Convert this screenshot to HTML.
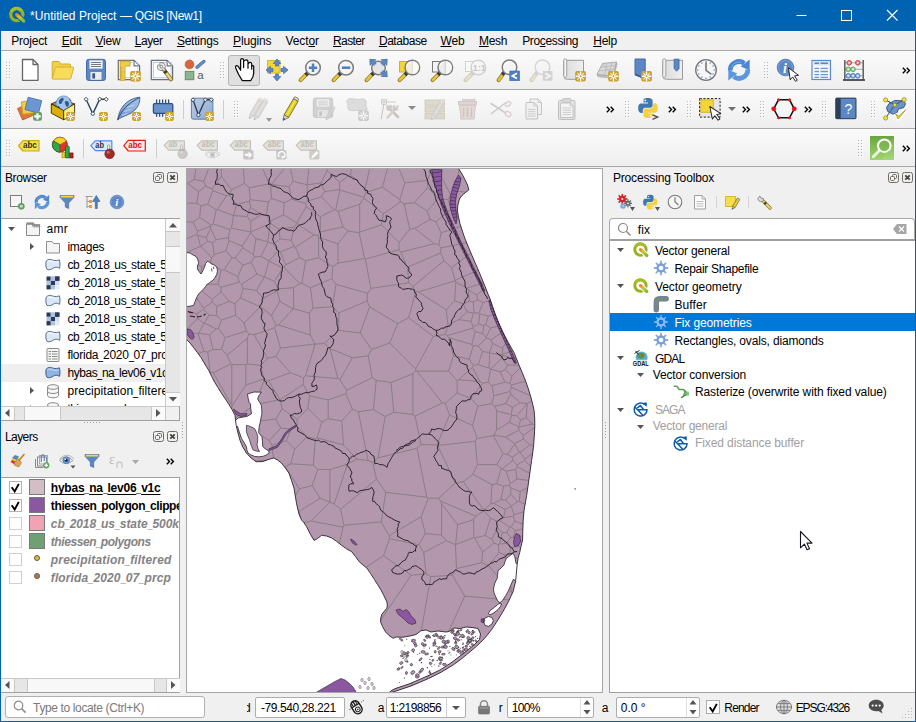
<!DOCTYPE html>
<html lang="en"><head><meta charset="utf-8"><title>QGIS</title>
<style>
*{box-sizing:border-box;margin:0;padding:0}
html,body{width:916px;height:722px;overflow:hidden;background:#f0f0f0}
body{font-family:"Liberation Sans","DejaVu Sans",sans-serif;font-size:12px;color:#000;position:relative}
.a{position:absolute}
.t{position:absolute;white-space:nowrap;line-height:16px;height:16px}
.tb{position:absolute;left:1px;width:914px;background:linear-gradient(#fafafa,#f6f6f6 40%,#eeeeee)}
.ln{position:absolute;left:1px;width:914px;height:1px;background:#a8a8a8}
.hd{position:absolute;width:5px;height:17px}
.ic{position:absolute;width:24px;height:24px}
.ic svg,.i16 svg{display:block;overflow:visible}
.i16{position:absolute;width:16px;height:16px}
.box{position:absolute;background:#fff;border:1px solid #adadad;border-radius:2px}
.chev{position:absolute;font-weight:bold;font-size:13px;line-height:16px;height:16px;letter-spacing:-1.5px}
.us{display:inline-block;transform:scaleX(.75);transform-origin:0 50%;margin-right:-1.67px}
u{text-decoration:underline;text-underline-offset:1px}
</style></head>
<body>
<div class="a" style="left:0;top:0;width:916px;height:722px;background:#0063b1"></div>
<div class="a" style="left:1px;top:31px;width:914px;height:690px;background:#f0f0f0"></div>
<div class="i16" style="left:9px;top:7px;"><svg width="16" height="16" viewBox="0 0 16 16"><defs><linearGradient id="qg0063b1" x1="0" y1="0" x2="1" y2="1"><stop offset="0" stop-color="#f57f1c"/><stop offset=".28" stop-color="#f0b02a"/><stop offset=".5" stop-color="#b9c83c"/><stop offset="1" stop-color="#86b440"/></linearGradient></defs><circle cx="7.800" cy="7.600" r="6.100" fill="none" stroke="#97b320" stroke-width="3.200"/><path d="M2.400 4.600A6.100 6.100 0 0 1 12.600 3.800" fill="none" stroke="#a6bf27" stroke-width="3.200"/><path d="M9.500 9.300L16 15.200" stroke="#0063b1" stroke-width="5.400"/><path d="M7.800 7.700L14.700 14" stroke="url(#qg0063b1)" stroke-width="3.400" stroke-linecap="round"/></svg></div>
<span class="t" style="left:30.10px;top:8.00px;letter-spacing:0.009px;color:#fff">*Untitled Project</span>
<span class="t" style="left:120.00px;top:8.00px;letter-spacing:-0.333px;color:#fff">— QGIS [New1]</span>
<svg class="a" style="left:781px;top:0" width="135" height="31"><g stroke="#fff" stroke-width="1" fill="none"><path d="M15.5 15.5h10"/><rect x="60.5" y="10.5" width="10" height="10"/><path d="M106 10l10.5 10.5M116.5 10l-10.5 10.5" stroke-width="1.1"/></g></svg>
<div class="a" style="left:1px;top:31px;width:914px;height:19px;background:#f0f0f0;border-top:1px solid #fbfbfb"></div>
<span class="t" style="left:11.20px;top:33.00px;letter-spacing:-0.194px;">Pro<u>j</u>ect</span>
<span class="t" style="left:61.70px;top:33.00px;letter-spacing:-0.172px;"><u>E</u>dit</span>
<span class="t" style="left:95.50px;top:33.00px;letter-spacing:-0.224px;"><u>V</u>iew</span>
<span class="t" style="left:134.70px;top:33.00px;letter-spacing:-0.446px;"><u>L</u>ayer</span>
<span class="t" style="left:176.90px;top:33.00px;letter-spacing:-0.232px;"><u>S</u>ettings</span>
<span class="t" style="left:233.10px;top:33.00px;letter-spacing:-0.166px;"><u>P</u>lugins</span>
<span class="t" style="left:285.40px;top:33.00px;letter-spacing:-0.089px;">Vect<u>o</u>r</span>
<span class="t" style="left:333.10px;top:33.00px;letter-spacing:-0.657px;"><u>R</u>aster</span>
<span class="t" style="left:378.90px;top:33.00px;letter-spacing:-0.447px;"><u>D</u>atabase</span>
<span class="t" style="left:440.50px;top:33.00px;letter-spacing:-0.123px;"><u>W</u>eb</span>
<span class="t" style="left:479.00px;top:33.00px;letter-spacing:-0.311px;"><u>M</u>esh</span>
<span class="t" style="left:522.20px;top:33.00px;letter-spacing:-0.348px;">Pro<u>c</u>essing</span>
<span class="t" style="left:593.20px;top:33.00px;letter-spacing:-0.222px;"><u>H</u>elp</span>
<div class="tb" style="top:51px;height:38px"></div>
<div class="tb" style="top:90px;height:38px"></div>
<div class="tb" style="top:129px;height:37px"></div>
<div class="ln" style="top:50px"></div>
<div class="ln" style="top:89px"></div>
<div class="ln" style="top:128px"></div>
<div class="ln" style="top:166px"></div>
<svg class="a" style="left:6px;top:62px" width="6" height="18"><rect x="0" y="0" width="1" height="1" fill="#b4b4b4"/><rect x="1" y="1" width="1" height="1" fill="#fff"/><rect x="0" y="3" width="1" height="1" fill="#b4b4b4"/><rect x="1" y="4" width="1" height="1" fill="#fff"/><rect x="0" y="6" width="1" height="1" fill="#b4b4b4"/><rect x="1" y="7" width="1" height="1" fill="#fff"/><rect x="0" y="9" width="1" height="1" fill="#b4b4b4"/><rect x="1" y="10" width="1" height="1" fill="#fff"/><rect x="0" y="12" width="1" height="1" fill="#b4b4b4"/><rect x="1" y="13" width="1" height="1" fill="#fff"/><rect x="0" y="15" width="1" height="1" fill="#b4b4b4"/><rect x="1" y="16" width="1" height="1" fill="#fff"/><rect x="3" y="0" width="1" height="1" fill="#b4b4b4"/><rect x="4" y="1" width="1" height="1" fill="#fff"/><rect x="3" y="3" width="1" height="1" fill="#b4b4b4"/><rect x="4" y="4" width="1" height="1" fill="#fff"/><rect x="3" y="6" width="1" height="1" fill="#b4b4b4"/><rect x="4" y="7" width="1" height="1" fill="#fff"/><rect x="3" y="9" width="1" height="1" fill="#b4b4b4"/><rect x="4" y="10" width="1" height="1" fill="#fff"/><rect x="3" y="12" width="1" height="1" fill="#b4b4b4"/><rect x="4" y="13" width="1" height="1" fill="#fff"/><rect x="3" y="15" width="1" height="1" fill="#b4b4b4"/><rect x="4" y="16" width="1" height="1" fill="#fff"/></svg>
<div class="ic" style="left:18px;top:58px;"><svg width="24" height="24" viewBox="0 0 24 24"><path d="M4.5 1.5H15L20 6.5V22.3H4.5Z" fill="#fff" stroke="#666" stroke-width="1.3" stroke-linejoin="round"/><path d="M15 1.5v5h5" fill="none" stroke="#666" stroke-width="1.3" stroke-linejoin="round"/></svg></div>
<div class="ic" style="left:51px;top:58px;"><svg width="24" height="24" viewBox="0 0 24 24"><path d="M1.200 20.500V4.300q0-.8.800-.8h5.600q.7 0 1 .6l1 1.900h9q.8 0 .8.800v3.200" fill="#f2cf45" stroke="#d1ad2e" stroke-width="1"/><path d="M1.300 20.700L4.300 9.800q.2-.7 1-.7h16.500q1 0 .8.900L19.800 20.300q-.2.800-1 .8H1.800q-.7 0-.5-.4z" fill="#f8dc5a" stroke="#d4b235" stroke-width="1"/></svg></div>
<div class="ic" style="left:84px;top:58px;"><svg width="24" height="24" viewBox="0 0 24 24"><rect x="2.500" y="1.300" width="19" height="21.200" rx="2.300" fill="#5b87c5" stroke="#456ea8" stroke-width="1"/><rect x="5.500" y="2.500" width="13" height="8" fill="#f4f4f4" stroke="#c8d4e6" stroke-width=".5"/><path d="M7 4.500h10M7 6.500h10M7 8.500h10" stroke="#6a6a6a" stroke-width="0.900"/><rect x="6.500" y="14" width="11" height="7.800" fill="#ececec"/><rect x="8.300" y="15.300" width="2.800" height="5.200" fill="#3d5a86"/></svg></div>
<div class="ic" style="left:117px;top:58px;"><svg width="24" height="24" viewBox="0 0 24 24"><path d="M1.3 2.3H17.1L22.6 7.8V21.7H1.3Z" fill="#fff" stroke="#6e6e6e" stroke-width="1.2" stroke-linejoin="round"/><path d="M17.1 2.3v5.5h5.5" fill="none" stroke="#6e6e6e" stroke-width="1.2" stroke-linejoin="round"/><rect x="3.800" y="4.600" width="17" height="15" fill="none" stroke="#b4c6ef" stroke-width=".8"/><path d="M3.200 3.100h9.800v5h-5v14.100h-4.800z" fill="#f0cd48" stroke="#c9a52c" stroke-width=".9"/><path d="M3.300 10h2.300M3.300 12h1.600M3.300 14h2.300M3.300 16h1.600M3.300 18h2.300M3.300 20h1.600" stroke="#b08d1e" stroke-width=".7"/><rect x="13.2" y="13" width="10.6" height="10.6" rx="1.800" fill="#c9a227"/><path d="M14.26 18.3h8.48M18.5 14.06v8.48" stroke="#fff" stroke-width="1.4" stroke-linecap="round"/><path d="M15.638 15.438l5.724 5.724M21.362 15.438l-5.724 5.724" stroke="#fff" stroke-width="1.1" stroke-linecap="round" opacity=".85"/><circle cx="18.5" cy="18.3" r="1" fill="#c9a227"/></svg></div>
<div class="ic" style="left:150px;top:58px;"><svg width="24" height="24" viewBox="0 0 24 24"><path d="M1.3 2.3H17.1L22.6 7.8V21.7H1.3Z" fill="#fff" stroke="#6e6e6e" stroke-width="1.2" stroke-linejoin="round"/><path d="M17.1 2.3v5.5h5.5" fill="none" stroke="#6e6e6e" stroke-width="1.2" stroke-linejoin="round"/><rect x="3.300" y="4.400" width="17.800" height="15.400" fill="none" stroke="#a9bdf0" stroke-width=".9"/><path d="M13.600 11.300L20.900 21.300" stroke="#86742a" stroke-width="4" stroke-linecap="round"/><path d="M13.700 11.500L20.800 21.100" stroke="#e8d47c" stroke-width="2.500" stroke-linecap="round"/><path d="M14.700 12.900l1.500 2" stroke="#333" stroke-width="3.400"/><path d="M11.070 6.010A2.600 2.600 0 1 1 8.710 8.370" fill="none" stroke="#757575" stroke-width="3.500" stroke-linecap="round"/><path d="M11.070 6.010A2.600 2.600 0 1 1 8.710 8.370" fill="none" stroke="#e6e6e6" stroke-width="2.100" stroke-linecap="round"/><path d="M12.800 10.300l1.400 1.700" stroke="#757575" stroke-width="3.300"/><path d="M12.600 10.100l1.500 1.900" stroke="#dcdcdc" stroke-width="1.900"/></svg></div>
<div class="ic" style="left:183px;top:58px;"><svg width="24" height="24" viewBox="0 0 24 24"><circle cx="6.500" cy="6.400" r="4.400" fill="#d9663a" stroke="#b9532d" stroke-width=".6"/><rect x="2.300" y="13.400" width="8.500" height="8.300" fill="#8db48e" stroke="#5f9161" stroke-width="1"/><path d="M14 9.300L20.900 3.400" stroke="#3d6496" stroke-width="3.200" stroke-linecap="round"/><path d="M14 9.300L20.900 3.400" stroke="#6a94c9" stroke-width="1.800" stroke-linecap="round"/><text x="14.300" y="20.700" style="font-family:'Liberation Sans',sans-serif;font-size:11.500px" fill="#5a5a5a">a</text></svg></div>
<svg class="a" style="left:220px;top:62px" width="6" height="18"><rect x="0" y="0" width="1" height="1" fill="#b4b4b4"/><rect x="1" y="1" width="1" height="1" fill="#fff"/><rect x="0" y="3" width="1" height="1" fill="#b4b4b4"/><rect x="1" y="4" width="1" height="1" fill="#fff"/><rect x="0" y="6" width="1" height="1" fill="#b4b4b4"/><rect x="1" y="7" width="1" height="1" fill="#fff"/><rect x="0" y="9" width="1" height="1" fill="#b4b4b4"/><rect x="1" y="10" width="1" height="1" fill="#fff"/><rect x="0" y="12" width="1" height="1" fill="#b4b4b4"/><rect x="1" y="13" width="1" height="1" fill="#fff"/><rect x="0" y="15" width="1" height="1" fill="#b4b4b4"/><rect x="1" y="16" width="1" height="1" fill="#fff"/><rect x="3" y="0" width="1" height="1" fill="#b4b4b4"/><rect x="4" y="1" width="1" height="1" fill="#fff"/><rect x="3" y="3" width="1" height="1" fill="#b4b4b4"/><rect x="4" y="4" width="1" height="1" fill="#fff"/><rect x="3" y="6" width="1" height="1" fill="#b4b4b4"/><rect x="4" y="7" width="1" height="1" fill="#fff"/><rect x="3" y="9" width="1" height="1" fill="#b4b4b4"/><rect x="4" y="10" width="1" height="1" fill="#fff"/><rect x="3" y="12" width="1" height="1" fill="#b4b4b4"/><rect x="4" y="13" width="1" height="1" fill="#fff"/><rect x="3" y="15" width="1" height="1" fill="#b4b4b4"/><rect x="4" y="16" width="1" height="1" fill="#fff"/></svg>
<div class="a" style="left:228px;top:55px;width:32px;height:31px;background:#dfdfdf;border:1px solid #b4b4b4;border-radius:3px"></div>
<div class="ic" style="left:232px;top:58px;"><svg width="24" height="24" viewBox="0 0 24 24"><path d="M10.300 22.600L6.500 16.300 3.600 9.700Q3.100 8.200 4.500 7.700 5.800 7.500 6.600 8.900L8.600 12.300V2.300Q8.600.600 10.100.600 11.500.600 11.600 2.300V9.600 3.400Q13 1.700 14.600 1.900 16 2.200 16 3.900V10.200 5.700Q17.600 4.100 18.900 4.500 19.700 5 19.700 6.400V11.200 8.300Q21.200 6.900 21.700 8.400V15.200Q21.500 19.200 18.700 22.600Z" fill="#fff" stroke="#0a0a0a" stroke-width="1.250" stroke-linejoin="round"/></svg></div>
<div class="ic" style="left:265px;top:58px;"><svg width="24" height="24" viewBox="0 0 24 24"><rect x="2.500" y="2.500" width="12.500" height="12.500" fill="#f3d53a" stroke="#d6b62c" stroke-width="1"/><path d="M0 -1.5 H2.5 V-3.75 L7 0 L2.5 3.75 V1.5 H0Z" transform="translate(12 8) rotate(-90)" fill="#5b87c5" stroke="#3f6aa5" stroke-width=".7" stroke-linejoin="round"/><path d="M0 -1.5 H2.5 V-3.75 L7 0 L2.5 3.75 V1.5 H0Z" transform="translate(12 16) rotate(90)" fill="#5b87c5" stroke="#3f6aa5" stroke-width=".7" stroke-linejoin="round"/><path d="M0 -1.5 H2.5 V-3.75 L7 0 L2.5 3.75 V1.5 H0Z" transform="translate(8 12) rotate(180)" fill="#5b87c5" stroke="#3f6aa5" stroke-width=".7" stroke-linejoin="round"/><path d="M0 -1.5 H2.5 V-3.75 L7 0 L2.5 3.75 V1.5 H0Z" transform="translate(16 12) rotate(0)" fill="#5b87c5" stroke="#3f6aa5" stroke-width=".7" stroke-linejoin="round"/></svg></div>
<div class="ic" style="left:298px;top:58px;"><svg width="24" height="24" viewBox="0 0 24 24"><g opacity="1"><path d="M9.13 15.57L2.600 22.200" stroke="#8c7420" stroke-width="4" stroke-linecap="round"/><path d="M9.13 15.57L2.800 22" stroke="#e7c43a" stroke-width="2.600" stroke-linecap="round"/><path d="M10.23 14.47l-2.600 2.600" stroke="#3a3a3a" stroke-width="3.600"/><circle cx="15" cy="9.7" r="7.3" fill="#f4f4f4" stroke="#7c7c7c" stroke-width="1.500"/><path d="M9.50 8.70a5.5 5.5 0 0 1 4.50 -4.50" fill="none" stroke="#fff" stroke-width="1.200" opacity=".9"/></g><path d="M10.800 9.700h8.400M15 5.500v8.400" stroke="#4b7fc0" stroke-width="2.500"/></svg></div>
<div class="ic" style="left:331px;top:58px;"><svg width="24" height="24" viewBox="0 0 24 24"><g opacity="1"><path d="M9.13 15.57L2.600 22.200" stroke="#8c7420" stroke-width="4" stroke-linecap="round"/><path d="M9.13 15.57L2.800 22" stroke="#e7c43a" stroke-width="2.600" stroke-linecap="round"/><path d="M10.23 14.47l-2.600 2.600" stroke="#3a3a3a" stroke-width="3.600"/><circle cx="15" cy="9.7" r="7.3" fill="#f4f4f4" stroke="#7c7c7c" stroke-width="1.500"/><path d="M9.50 8.70a5.5 5.5 0 0 1 4.50 -4.50" fill="none" stroke="#fff" stroke-width="1.200" opacity=".9"/></g><path d="M10.800 9.700h8.400" stroke="#4b7fc0" stroke-width="2.500"/></svg></div>
<div class="ic" style="left:364px;top:58px;"><svg width="24" height="24" viewBox="0 0 24 24"><g opacity="1"><path d="M8.98 15.52L2.600 22.200" stroke="#8c7420" stroke-width="4" stroke-linecap="round"/><path d="M8.98 15.52L2.800 22" stroke="#e7c43a" stroke-width="2.600" stroke-linecap="round"/><path d="M10.08 14.42l-2.600 2.600" stroke="#3a3a3a" stroke-width="3.600"/><circle cx="14.5" cy="10" r="6.8" fill="#e9e9e9" stroke="#7c7c7c" stroke-width="1.500"/><path d="M9.50 9.00a5 5 0 0 1 4.00 -4.00" fill="none" stroke="#fff" stroke-width="1.200" opacity=".9"/></g><path d="M0 -1.5 H3.9 V-4 L8.5 0 L3.9 4 V1.5 H0Z" transform="translate(17.2 7.3) rotate(-45)" fill="#5b87c5" stroke="#3f6aa5" stroke-width=".7" stroke-linejoin="round"/><path d="M0 -1.5 H3.9 V-4 L8.5 0 L3.9 4 V1.5 H0Z" transform="translate(17.2 12.7) rotate(45)" fill="#5b87c5" stroke="#3f6aa5" stroke-width=".7" stroke-linejoin="round"/><path d="M0 -1.5 H3.9 V-4 L8.5 0 L3.9 4 V1.5 H0Z" transform="translate(11.8 7.3) rotate(-135)" fill="#5b87c5" stroke="#3f6aa5" stroke-width=".7" stroke-linejoin="round"/><circle cx="14.500" cy="10" r="5" fill="#e4e4e4" opacity=".9"/></svg></div>
<div class="ic" style="left:397px;top:58px;"><svg width="24" height="24" viewBox="0 0 24 24"><rect x="2.500" y="3.500" width="10.500" height="10.500" fill="#f3d53a" stroke="#cfae22" stroke-width="1"/><g opacity="1"><path d="M9.43 15.37L2.600 22.200" stroke="#8c7420" stroke-width="4" stroke-linecap="round"/><path d="M9.43 15.37L2.800 22" stroke="#e7c43a" stroke-width="2.600" stroke-linecap="round"/><path d="M10.53 14.27l-2.600 2.600" stroke="#3a3a3a" stroke-width="3.600"/><circle cx="15.3" cy="9.5" r="7.3" fill="#f2eed8" stroke="#7c7c7c" stroke-width="1.500"/><path d="M9.80 8.50a5.5 5.5 0 0 1 4.50 -4.50" fill="none" stroke="#fff" stroke-width="1.200" opacity=".9"/></g><path d="M15.300 2.900a6.600 6.600 0 0 1 0 13.200z" fill="#fbfbfb" opacity=".9"/><path d="M15.300 3v13" stroke="#c9c9c9" stroke-width=".6"/></svg></div>
<div class="ic" style="left:430px;top:58px;"><svg width="24" height="24" viewBox="0 0 24 24"><rect x="2.500" y="3.500" width="10.500" height="10.500" fill="#f4f4f4" stroke="#7a7a7a" stroke-width="1"/><g opacity="1"><path d="M9.43 15.37L2.600 22.200" stroke="#8c7420" stroke-width="4" stroke-linecap="round"/><path d="M9.43 15.37L2.800 22" stroke="#e7c43a" stroke-width="2.600" stroke-linecap="round"/><path d="M10.53 14.27l-2.600 2.600" stroke="#3a3a3a" stroke-width="3.600"/><circle cx="15.3" cy="9.5" r="7.3" fill="#ececec" stroke="#7c7c7c" stroke-width="1.500"/><path d="M9.80 8.50a5.5 5.5 0 0 1 4.50 -4.50" fill="none" stroke="#fff" stroke-width="1.200" opacity=".9"/></g><path d="M15.300 2.900a6.600 6.600 0 0 1 0 13.200z" fill="#f8f8f8" opacity=".9"/><path d="M15.300 3v13" stroke="#bdbdbd" stroke-width=".7"/></svg></div>
<div class="ic" style="left:463px;top:58px;"><svg width="24" height="24" viewBox="0 0 24 24"><g opacity=".38"><rect x="2.500" y="3.500" width="10" height="10" fill="#fff" stroke="#999" stroke-width="1"/><g opacity="1"><path d="M9.43 15.37L2.600 22.200" stroke="#8c7420" stroke-width="4" stroke-linecap="round"/><path d="M9.43 15.37L2.800 22" stroke="#cfc7a0" stroke-width="2.600" stroke-linecap="round"/><path d="M10.53 14.27l-2.600 2.600" stroke="#999" stroke-width="3.600"/><circle cx="15.3" cy="9.5" r="7.3" fill="#f4f4f4" stroke="#999" stroke-width="1.500"/><path d="M9.80 8.50a5.5 5.5 0 0 1 4.50 -4.50" fill="none" stroke="#fff" stroke-width="1.200" opacity=".9"/></g><text x="9.800" y="13" font-family="Liberation Sans,sans-serif" font-weight="bold" font-size="9" fill="#777">1:1</text></g></svg></div>
<div class="ic" style="left:496px;top:58px;"><svg width="24" height="24" viewBox="0 0 24 24"><g opacity="1"><path d="M7.63 15.17L2.600 22.200" stroke="#8c7420" stroke-width="4" stroke-linecap="round"/><path d="M7.63 15.17L2.800 22" stroke="#e7c43a" stroke-width="2.600" stroke-linecap="round"/><path d="M8.73 14.07l-2.600 2.600" stroke="#3a3a3a" stroke-width="3.600"/><circle cx="13.5" cy="9.3" r="7.3" fill="#f4f4f4" stroke="#7c7c7c" stroke-width="1.500"/><path d="M8.00 8.30a5.5 5.5 0 0 1 4.50 -4.50" fill="none" stroke="#fff" stroke-width="1.200" opacity=".9"/></g><rect x="13.800" y="13" width="9.700" height="9.700" fill="#4f7fc0" stroke="#3d69a6" stroke-width=".6"/><path d="M21 15.200l-4.700 2.700 4.700 2.700" fill="none" stroke="#fff" stroke-width="1.700"/></svg></div>
<div class="ic" style="left:529px;top:58px;"><svg width="24" height="24" viewBox="0 0 24 24"><g opacity=".35"><g opacity="1"><path d="M7.63 15.17L2.600 22.200" stroke="#8c7420" stroke-width="4" stroke-linecap="round"/><path d="M7.63 15.17L2.800 22" stroke="#cfc7a0" stroke-width="2.600" stroke-linecap="round"/><path d="M8.73 14.07l-2.600 2.600" stroke="#999" stroke-width="3.600"/><circle cx="13.5" cy="9.3" r="7.3" fill="#f4f4f4" stroke="#999" stroke-width="1.500"/><path d="M8.00 8.30a5.5 5.5 0 0 1 4.50 -4.50" fill="none" stroke="#fff" stroke-width="1.200" opacity=".9"/></g><rect x="13.800" y="13" width="9.700" height="9.700" fill="#9a9a9a"/><path d="M16.300 15.200l4.700 2.700-4.700 2.700" fill="none" stroke="#fff" stroke-width="1.700"/></g></svg></div>
<div class="ic" style="left:562px;top:58px;"><svg width="24" height="24" viewBox="0 0 24 24"><defs><linearGradient id="sh1" x1="0" y1="0" x2="1" y2="0"><stop offset="0" stop-color="#dcdcdc"/><stop offset="1" stop-color="#efefef"/></linearGradient></defs><path d="M4.300 2.300H21.500V21.300H5.500q-3.700 0-3.700-3V2.500" fill="url(#sh1)" stroke="#9a9a9a" stroke-width="1" stroke-linejoin="round"/><path d="M1.800 17.500V2.300q0-1.600 1.500-1.600t1.500 1.600V17.500q0 1.500-1.500 1.500" fill="#f2f2f2" stroke="#9a9a9a" stroke-width=".9"/><rect x="13.2" y="12.9" width="10.7" height="10.7" rx="1.800" fill="#c9a227"/><path d="M14.27 18.25h8.56M18.55 13.97v8.56" stroke="#fff" stroke-width="1.4" stroke-linecap="round"/><path d="M15.661 15.361l5.778 5.778M21.439 15.361l-5.778 5.778" stroke="#fff" stroke-width="1.1" stroke-linecap="round" opacity=".85"/><circle cx="18.55" cy="18.25" r="1" fill="#c9a227"/></svg></div>
<div class="ic" style="left:595px;top:58px;"><svg width="24" height="24" viewBox="0 0 24 24"><path d="M2 16.500L7.500 5.500 21.500 4l-3.500 14z" fill="#d9d9d9" stroke="#a6a6a6" stroke-width=".9"/><path d="M2 16.500l1 2.300 15.500 1.500-.5-2.300zM18 18l.5 2.300 3.500-14-.5-2.300z" fill="#bdbdbd" stroke="#a6a6a6" stroke-width=".6"/><path d="M5.700 9.200l14.600-1.600M4 12.800l15.500-1.400M12 5l-2.500 12.400M16.800 4.500l-3 13.300M7.500 5.500q5 5 10.500 12.500" stroke="#b3b3b3" stroke-width=".7" fill="none"/><rect x="13.2" y="13" width="10.6" height="10.6" rx="1.800" fill="#c9a227"/><path d="M14.26 18.3h8.48M18.5 14.06v8.48" stroke="#fff" stroke-width="1.4" stroke-linecap="round"/><path d="M15.638 15.438l5.724 5.724M21.362 15.438l-5.724 5.724" stroke="#fff" stroke-width="1.1" stroke-linecap="round" opacity=".85"/><circle cx="18.5" cy="18.3" r="1" fill="#c9a227"/></svg></div>
<div class="ic" style="left:628px;top:58px;"><svg width="24" height="24" viewBox="0 0 24 24"><path d="M7 1h10.200v20.500l-2-1.700-8.200-3.300z" fill="#5b87c5" stroke="#3f6aa5" stroke-width="1"/><path d="M7 16.500l8.200 3.300 2 1.700" fill="none" stroke="#35598c" stroke-width="1.600"/><rect x="13.2" y="12.9" width="10.7" height="10.7" rx="1.800" fill="#c9a227"/><path d="M14.27 18.25h8.56M18.55 13.97v8.56" stroke="#fff" stroke-width="1.4" stroke-linecap="round"/><path d="M15.661 15.361l5.778 5.778M21.439 15.361l-5.778 5.778" stroke="#fff" stroke-width="1.1" stroke-linecap="round" opacity=".85"/><circle cx="18.55" cy="18.25" r="1" fill="#c9a227"/></svg></div>
<div class="ic" style="left:661px;top:58px;"><svg width="24" height="24" viewBox="0 0 24 24"><defs><linearGradient id="sh1" x1="0" y1="0" x2="1" y2="0"><stop offset="0" stop-color="#dcdcdc"/><stop offset="1" stop-color="#efefef"/></linearGradient></defs><path d="M4.300 2.300H21.500V21.300H5.500q-3.700 0-3.700-3V2.500" fill="url(#sh1)" stroke="#9a9a9a" stroke-width="1" stroke-linejoin="round"/><path d="M1.800 17.500V2.300q0-1.600 1.500-1.600t1.500 1.600V17.500q0 1.500-1.500 1.500" fill="#f2f2f2" stroke="#9a9a9a" stroke-width=".9"/><path d="M13.200 1.200h4.800v9.300l-2.400 2.700-2.400-2.700z" fill="#5b87c5" stroke="#3f6aa5" stroke-width=".9"/></svg></div>
<div class="ic" style="left:694px;top:58px;"><svg width="24" height="24" viewBox="0 0 24 24"><circle cx="12" cy="12" r="10.300" fill="#f6f6f6" stroke="#767676" stroke-width="1.300"/><circle cx="20.20" cy="12.00" r=".75" fill="#4f86d6"/><circle cx="19.10" cy="16.10" r=".75" fill="#4f86d6"/><circle cx="16.10" cy="19.10" r=".75" fill="#4f86d6"/><circle cx="12.00" cy="20.20" r=".75" fill="#4f86d6"/><circle cx="7.90" cy="19.10" r=".75" fill="#4f86d6"/><circle cx="4.90" cy="16.10" r=".75" fill="#4f86d6"/><circle cx="3.80" cy="12.00" r=".75" fill="#4f86d6"/><circle cx="4.90" cy="7.90" r=".75" fill="#4f86d6"/><circle cx="7.90" cy="4.90" r=".75" fill="#4f86d6"/><circle cx="12.00" cy="3.80" r=".75" fill="#4f86d6"/><circle cx="16.10" cy="4.90" r=".75" fill="#4f86d6"/><circle cx="19.10" cy="7.90" r=".75" fill="#4f86d6"/><path d="M12 5v7.300l4.800 3.600" fill="none" stroke="#777" stroke-width="1.600" stroke-linecap="round"/></svg></div>
<div class="ic" style="left:727px;top:58px;"><svg width="24" height="24" viewBox="0 0 24 24"><g><path d="M3.200 12.600A8.800 8.800 0 0 1 17.300 5.400" stroke="#4a86d2" stroke-width="4.800" fill="none"/><path d="M13.700 8.600L22.700 1.500 22.600 12.300Z" fill="#4a86d2"/></g><g transform="rotate(180 12 12)"><path d="M3.200 12.600A8.800 8.800 0 0 1 17.300 5.400" stroke="#5b97de" stroke-width="4.800" fill="none"/><path d="M13.700 8.600L22.700 1.500 22.600 12.300Z" fill="#5b97de"/></g><path d="M4.500 9.500A7.500 7.500 0 0 1 14.500 4.500" stroke="#8bb6ea" stroke-width="1" fill="none" opacity=".7"/></svg></div>
<svg class="a" style="left:764px;top:62px" width="6" height="18"><rect x="0" y="0" width="1" height="1" fill="#b4b4b4"/><rect x="1" y="1" width="1" height="1" fill="#fff"/><rect x="0" y="3" width="1" height="1" fill="#b4b4b4"/><rect x="1" y="4" width="1" height="1" fill="#fff"/><rect x="0" y="6" width="1" height="1" fill="#b4b4b4"/><rect x="1" y="7" width="1" height="1" fill="#fff"/><rect x="0" y="9" width="1" height="1" fill="#b4b4b4"/><rect x="1" y="10" width="1" height="1" fill="#fff"/><rect x="0" y="12" width="1" height="1" fill="#b4b4b4"/><rect x="1" y="13" width="1" height="1" fill="#fff"/><rect x="0" y="15" width="1" height="1" fill="#b4b4b4"/><rect x="1" y="16" width="1" height="1" fill="#fff"/><rect x="3" y="0" width="1" height="1" fill="#b4b4b4"/><rect x="4" y="1" width="1" height="1" fill="#fff"/><rect x="3" y="3" width="1" height="1" fill="#b4b4b4"/><rect x="4" y="4" width="1" height="1" fill="#fff"/><rect x="3" y="6" width="1" height="1" fill="#b4b4b4"/><rect x="4" y="7" width="1" height="1" fill="#fff"/><rect x="3" y="9" width="1" height="1" fill="#b4b4b4"/><rect x="4" y="10" width="1" height="1" fill="#fff"/><rect x="3" y="12" width="1" height="1" fill="#b4b4b4"/><rect x="4" y="13" width="1" height="1" fill="#fff"/><rect x="3" y="15" width="1" height="1" fill="#b4b4b4"/><rect x="4" y="16" width="1" height="1" fill="#fff"/></svg>
<div class="ic" style="left:776px;top:58px;"><svg width="24" height="24" viewBox="0 0 24 24"><circle cx="9.500" cy="9.500" r="8.300" fill="#5b87c5" stroke="#4470aa" stroke-width=".8"/><circle cx="9.500" cy="9.500" r="7" fill="none" stroke="#7ea5d8" stroke-width=".8"/><text x="7" y="14.500" font-family="Liberation Serif,serif" font-style="italic" font-weight="bold" font-size="14" fill="#fff">i</text><g transform="translate(12.500 9.800) rotate(-8)"><path d="M0 0v12.200l2.900-2.600 2.100 4.800 2-.9-2.100-4.700h4z" fill="#fff" stroke="#222" stroke-width=".9" stroke-linejoin="round"/></g></svg></div>
<div class="ic" style="left:809px;top:58px;"><svg width="24" height="24" viewBox="0 0 24 24"><rect x="3" y="2.500" width="18.500" height="19" fill="#f5f8fc" stroke="#5b87c5" stroke-width="1.200"/><rect x="3.600" y="3.100" width="17.300" height="4.200" fill="#d5e2f4"/><path d="M5.500 5.200h4.500M11.500 5.200h7.500" stroke="#5b87c5" stroke-width="1.500"/><path d="M5.500 10.300h4.500M11.500 10.300h7.500M5.500 13.500h4.500M11.500 13.500h7.500M5.500 16.700h4.500M11.500 16.700h7.500M5.500 19.400h4.500M11.500 19.400h7.500" stroke="#6d97d0" stroke-width="1.300"/></svg></div>
<div class="ic" style="left:842px;top:58px;"><svg width="24" height="24" viewBox="0 0 24 24"><path d="M3 4.8h18" stroke="#888" stroke-width=".7"/><circle cx="7.2" cy="4.8" r="2.350" fill="#ee7a7e" stroke="#c22d35" stroke-width=".8"/><circle cx="7.2" cy="4.8" r="1.050" fill="#fff" opacity=".8"/><circle cx="15.8" cy="4.8" r="2.350" fill="#ee7a7e" stroke="#c22d35" stroke-width=".8"/><circle cx="15.8" cy="4.8" r="1.050" fill="#fff" opacity=".8"/><path d="M3 11.3h18" stroke="#888" stroke-width=".7"/><circle cx="6.3" cy="11.3" r="2.350" fill="#8fd08d" stroke="#4e9a4d" stroke-width=".8"/><circle cx="6.3" cy="11.3" r="1.050" fill="#fff" opacity=".8"/><circle cx="11" cy="11.3" r="2.350" fill="#8fd08d" stroke="#4e9a4d" stroke-width=".8"/><circle cx="11" cy="11.3" r="1.050" fill="#fff" opacity=".8"/><path d="M3 17.8h18" stroke="#888" stroke-width=".7"/><circle cx="6.3" cy="17.8" r="2.350" fill="#86b0e4" stroke="#3f6fad" stroke-width=".8"/><circle cx="6.3" cy="17.8" r="1.050" fill="#fff" opacity=".8"/><circle cx="11" cy="17.8" r="2.350" fill="#86b0e4" stroke="#3f6fad" stroke-width=".8"/><circle cx="11" cy="17.8" r="1.050" fill="#fff" opacity=".8"/><circle cx="15.7" cy="17.8" r="2.350" fill="#86b0e4" stroke="#3f6fad" stroke-width=".8"/><circle cx="15.7" cy="17.8" r="1.050" fill="#fff" opacity=".8"/><path d="M2.800 2v19.500M21.200 2v19.500" stroke="#555" stroke-width="1.400"/><path d="M1 22h22" stroke="#444" stroke-width="1.800"/></svg></div>
<svg class="a" style="left:901.8px;top:66.5px" width="9" height="8"><path d="M.8.8l2.700 2.700-2.700 2.700M4.700.8l2.700 2.700-2.700 2.700" fill="none" stroke="#000" stroke-width="1.400"/></svg>
<svg class="a" style="left:6px;top:101px" width="6" height="18"><rect x="0" y="0" width="1" height="1" fill="#b4b4b4"/><rect x="1" y="1" width="1" height="1" fill="#fff"/><rect x="0" y="3" width="1" height="1" fill="#b4b4b4"/><rect x="1" y="4" width="1" height="1" fill="#fff"/><rect x="0" y="6" width="1" height="1" fill="#b4b4b4"/><rect x="1" y="7" width="1" height="1" fill="#fff"/><rect x="0" y="9" width="1" height="1" fill="#b4b4b4"/><rect x="1" y="10" width="1" height="1" fill="#fff"/><rect x="0" y="12" width="1" height="1" fill="#b4b4b4"/><rect x="1" y="13" width="1" height="1" fill="#fff"/><rect x="0" y="15" width="1" height="1" fill="#b4b4b4"/><rect x="1" y="16" width="1" height="1" fill="#fff"/><rect x="3" y="0" width="1" height="1" fill="#b4b4b4"/><rect x="4" y="1" width="1" height="1" fill="#fff"/><rect x="3" y="3" width="1" height="1" fill="#b4b4b4"/><rect x="4" y="4" width="1" height="1" fill="#fff"/><rect x="3" y="6" width="1" height="1" fill="#b4b4b4"/><rect x="4" y="7" width="1" height="1" fill="#fff"/><rect x="3" y="9" width="1" height="1" fill="#b4b4b4"/><rect x="4" y="10" width="1" height="1" fill="#fff"/><rect x="3" y="12" width="1" height="1" fill="#b4b4b4"/><rect x="4" y="13" width="1" height="1" fill="#fff"/><rect x="3" y="15" width="1" height="1" fill="#b4b4b4"/><rect x="4" y="16" width="1" height="1" fill="#fff"/></svg>
<div class="ic" style="left:18px;top:97px;"><svg width="24" height="24" viewBox="0 0 24 24"><rect x="1.500" y="8.500" width="12.500" height="12.500" transform="rotate(-24 7.700 14.700)" fill="#dc7440" stroke="#b95c2e" stroke-width=".8"/><rect x="4" y="4" width="12.500" height="12.500" transform="rotate(-8 10.200 10.200)" fill="#f2cb3e" stroke="#c9a227" stroke-width=".8"/><path d="M10.200.300L23.700 3.700 20.500 16.200 7 12.500z" fill="#6b96cf" stroke="#4a74ae" stroke-width=".9" stroke-linejoin="round"/><rect x="15.1" y="15" width="8.8" height="8.8" rx="2" fill="#5f9e5f"/><path d="M16.3 19.4h6.4M19.5 16.2v6.4" stroke="#fff" stroke-width="2.200"/></svg></div>
<div class="ic" style="left:51px;top:97px;"><svg width="24" height="24" viewBox="0 0 24 24"><path d="M.3 6.900L11.500 2 23.600 6.900 12.700 13.500z" fill="#b8920c" stroke="#1a1a1a" stroke-width=".8" stroke-linejoin="round"/><circle cx="12.700" cy="6.600" r="7.700" fill="#a6c3e8" stroke="#5a7fb4" stroke-width=".7"/><path d="M8 3.500q1.500-2.500 4-2.700 1.500 1 .3 2.600-1.500.6-1.300 2.600-.5 1.500-2.500.8-1.300-1.500-.5-3.300zM13.500 5q2-1.700 4-.3 1.300 2.300-.2 4.600-1.500 1.300-2.500-.5-.3-1.600-1.300-3.800zM6.500 8.500q1.500 0 2.300 1.700.3 1.800-1 2.300-1.800-1.500-1.300-4zM18.500 1.800q1.500 1 1.800 2.500l-1.500-.3z" fill="#2f5b90"/><path d="M.3 6.900V16.200L12.700 22.800V13.500z" fill="#dcaf00" stroke="#1a1a1a" stroke-width=".8" stroke-linejoin="round"/><path d="M12.700 13.500V22.800L23.600 16.700V6.900z" fill="#fff27a" stroke="#1a1a1a" stroke-width=".8" stroke-linejoin="round"/><rect x="15.1" y="15.1" width="8.8" height="8.8" rx="1.800" fill="#c9a227"/><path d="M15.98 19.5h7.04M19.5 15.98v7.04" stroke="#fff" stroke-width="1.2" stroke-linecap="round"/><path d="M17.124 17.124l4.752 4.752M21.876 17.124l-4.752 4.752" stroke="#fff" stroke-width="0.9" stroke-linecap="round" opacity=".85"/><circle cx="19.5" cy="19.5" r="0.8" fill="#c9a227"/></svg></div>
<div class="ic" style="left:84px;top:97px;"><svg width="24" height="24" viewBox="0 0 24 24"><path d="M2.05 2.3L8.8 16.7L15.7 2.1L22.2 2.3" fill="none" stroke="#2e4254" stroke-width="1.400" stroke-linejoin="round"/><rect x="0.65" y="0.9" width="2.800" height="2.800" transform="rotate(45 2.05 2.3)" fill="#fff" stroke="#2e4254" stroke-width=".9"/><rect x="14.3" y="0.7" width="2.800" height="2.800" transform="rotate(45 15.7 2.1)" fill="#fff" stroke="#2e4254" stroke-width=".9"/><rect x="20.8" y="0.9" width="2.800" height="2.800" transform="rotate(45 22.2 2.3)" fill="#fff" stroke="#2e4254" stroke-width=".9"/><circle cx="8.8" cy="16.7" r="1.700" fill="#fff" stroke="#2e4254" stroke-width=".9"/><rect x="15.1" y="15.1" width="8.8" height="8.8" rx="1.800" fill="#c9a227"/><path d="M15.98 19.5h7.04M19.5 15.98v7.04" stroke="#fff" stroke-width="1.2" stroke-linecap="round"/><path d="M17.124 17.124l4.752 4.752M21.876 17.124l-4.752 4.752" stroke="#fff" stroke-width="0.9" stroke-linecap="round" opacity=".85"/><circle cx="19.5" cy="19.5" r="0.8" fill="#c9a227"/></svg></div>
<div class="ic" style="left:117px;top:97px;"><svg width="24" height="24" viewBox="0 0 24 24"><defs><linearGradient id="fg1" x1="0" y1="1" x2="1" y2="0"><stop offset="0" stop-color="#6f97cf"/><stop offset="1" stop-color="#a8c2e6"/></linearGradient></defs><path d="M.6 23c1-6.500 3.500-13 9-17.500 4-3.300 9-5 13.200-5.300.2 3.500-.5 6.500-2.300 9.500-3 5-8 7.500-12.800 9.300-2.500 1-5 2-7.100 4z" fill="url(#fg1)" stroke="#3b5e8c" stroke-width=".9" stroke-linejoin="round"/><path d="M.8 22.800C4 14 10 7 22.500.500" fill="none" stroke="#2d4d78" stroke-width="1"/><path d="M7 14.500l6.500-2M10 10.500l7-2.500M5 18.500l5.500-2" stroke="#dbe7f6" stroke-width=".7"/><rect x="15.1" y="15.1" width="8.8" height="8.8" rx="1.800" fill="#c9a227"/><path d="M15.98 19.5h7.04M19.5 15.98v7.04" stroke="#fff" stroke-width="1.2" stroke-linecap="round"/><path d="M17.124 17.124l4.752 4.752M21.876 17.124l-4.752 4.752" stroke="#fff" stroke-width="0.9" stroke-linecap="round" opacity=".85"/><circle cx="19.5" cy="19.5" r="0.8" fill="#c9a227"/></svg></div>
<div class="ic" style="left:150px;top:97px;"><svg width="24" height="24" viewBox="0 0 24 24"><path d="M6.600 2.600v4M9.600 2.600v4M12.600 2.600v4M15.600 2.600v4M18.600 2.600v4M6.600 16.400v3.400M9.600 16.400v3.400M12.600 16.400v3.400" stroke="#2f4f86" stroke-width="1.300"/><rect x="3.400" y="6.600" width="19.400" height="9.800" rx="1.300" fill="#6a93cc" stroke="#2f4f86" stroke-width="1.300"/><rect x="15.1" y="15.1" width="8.8" height="8.8" rx="1.800" fill="#c9a227"/><path d="M15.98 19.5h7.04M19.5 15.98v7.04" stroke="#fff" stroke-width="1.2" stroke-linecap="round"/><path d="M17.124 17.124l4.752 4.752M21.876 17.124l-4.752 4.752" stroke="#fff" stroke-width="0.9" stroke-linecap="round" opacity=".85"/><circle cx="19.5" cy="19.5" r="0.8" fill="#c9a227"/></svg></div>
<div class="a" style="left:183px;top:100px;width:1px;height:19px;background:#cdcdcd"></div>
<div class="ic" style="left:191px;top:97px;"><svg width="24" height="24" viewBox="0 0 24 24"><defs><linearGradient id="vg1" x1="0" y1="0" x2="1" y2="1"><stop offset="0" stop-color="#bccde5"/><stop offset="1" stop-color="#8ea9cf"/></linearGradient></defs><rect x=".4" y="1.200" width="21.500" height="21" rx="2" fill="url(#vg1)" stroke="#5d7faf" stroke-width="1"/><path d="M2 2.8L7.4 18L14.3 2.8L20.3 2.8" fill="none" stroke="#2e4254" stroke-width="1.400" stroke-linejoin="round"/><rect x="0.6" y="1.4" width="2.800" height="2.800" transform="rotate(45 2 2.8)" fill="#f2f6fb" stroke="#2e4254" stroke-width=".9"/><rect x="12.9" y="1.4" width="2.800" height="2.800" transform="rotate(45 14.3 2.8)" fill="#f2f6fb" stroke="#2e4254" stroke-width=".9"/><rect x="18.9" y="1.4" width="2.800" height="2.800" transform="rotate(45 20.3 2.8)" fill="#f2f6fb" stroke="#2e4254" stroke-width=".9"/><circle cx="7.4" cy="18" r="1.700" fill="#f2f6fb" stroke="#2e4254" stroke-width=".9"/><rect x="14.2" y="15.1" width="8.8" height="8.8" rx="1.800" fill="#c9a227"/><path d="M15.08 19.5h7.04M18.6 15.98v7.04" stroke="#fff" stroke-width="1.2" stroke-linecap="round"/><path d="M16.224 17.124l4.752 4.752M20.976 17.124l-4.752 4.752" stroke="#fff" stroke-width="0.9" stroke-linecap="round" opacity=".85"/><circle cx="18.6" cy="19.5" r="0.8" fill="#c9a227"/></svg></div>
<div class="a" style="left:223px;top:100px;width:1px;height:19px;background:#cdcdcd"></div>
<svg class="a" style="left:234px;top:101px" width="6" height="18"><rect x="0" y="0" width="1" height="1" fill="#b4b4b4"/><rect x="1" y="1" width="1" height="1" fill="#fff"/><rect x="0" y="3" width="1" height="1" fill="#b4b4b4"/><rect x="1" y="4" width="1" height="1" fill="#fff"/><rect x="0" y="6" width="1" height="1" fill="#b4b4b4"/><rect x="1" y="7" width="1" height="1" fill="#fff"/><rect x="0" y="9" width="1" height="1" fill="#b4b4b4"/><rect x="1" y="10" width="1" height="1" fill="#fff"/><rect x="0" y="12" width="1" height="1" fill="#b4b4b4"/><rect x="1" y="13" width="1" height="1" fill="#fff"/><rect x="0" y="15" width="1" height="1" fill="#b4b4b4"/><rect x="1" y="16" width="1" height="1" fill="#fff"/><rect x="3" y="0" width="1" height="1" fill="#b4b4b4"/><rect x="4" y="1" width="1" height="1" fill="#fff"/><rect x="3" y="3" width="1" height="1" fill="#b4b4b4"/><rect x="4" y="4" width="1" height="1" fill="#fff"/><rect x="3" y="6" width="1" height="1" fill="#b4b4b4"/><rect x="4" y="7" width="1" height="1" fill="#fff"/><rect x="3" y="9" width="1" height="1" fill="#b4b4b4"/><rect x="4" y="10" width="1" height="1" fill="#fff"/><rect x="3" y="12" width="1" height="1" fill="#b4b4b4"/><rect x="4" y="13" width="1" height="1" fill="#fff"/><rect x="3" y="15" width="1" height="1" fill="#b4b4b4"/><rect x="4" y="16" width="1" height="1" fill="#fff"/></svg>
<div class="ic" style="left:246px;top:97px;"><svg width="24" height="24" viewBox="0 0 24 24"><g opacity=".8"><g transform="translate(3 21.8) scale(0.88)"><path d="M1.100-5.600L10.500-21.800l4.600 2.700L5.700-2.900z" fill="#d6d2cf" stroke="#c4c0bd" stroke-width=".8" stroke-linejoin="round"/><path d="M3.300-4.300L12.700-20.500" stroke="#eee" stroke-width="1.200" opacity=".55"/><path d="M10.500-21.800l.8-1.400q.4-.7 1.100-.3l2.800 1.600q.7.400.3 1.100l-.8 1.400z" fill="#e6e3e1" stroke="#c4c0bd" stroke-width=".7"/><path d="M1.100-5.600L0 0 5.700-2.900z" fill="#d8d8d8" stroke="#c4c0bd" stroke-width=".7" stroke-linejoin="round"/><path d="M.55-2.500L0 0l2.500-1.300z" fill="#b5b1ae"/></g><g transform="translate(7.8 23) scale(0.9)"><path d="M1.100-5.600L10.500-21.800l4.600 2.700L5.700-2.900z" fill="#d6d2cf" stroke="#c4c0bd" stroke-width=".8" stroke-linejoin="round"/><path d="M3.300-4.300L12.700-20.500" stroke="#eee" stroke-width="1.200" opacity=".55"/><path d="M10.500-21.800l.8-1.400q.4-.7 1.100-.3l2.800 1.600q.7.400.3 1.100l-.8 1.400z" fill="#e6e3e1" stroke="#c4c0bd" stroke-width=".7"/><path d="M1.100-5.600L0 0 5.700-2.900z" fill="#d8d8d8" stroke="#c4c0bd" stroke-width=".7" stroke-linejoin="round"/><path d="M.55-2.500L0 0l2.500-1.300z" fill="#b5b1ae"/></g></g></svg></div>
<svg class="a" style="left:266px;top:117.5px" width="6" height="4"><path d="M0 0h6 l-3 4z" fill="#9a9a9a"/></svg>
<div class="ic" style="left:279px;top:97px;"><svg width="24" height="24" viewBox="0 0 24 24"><g transform="translate(4 23.4) scale(1)"><path d="M1.100-5.600L10.500-21.800l4.600 2.700L5.700-2.900z" fill="#e4cf1c" stroke="#5f5a2a" stroke-width=".8" stroke-linejoin="round"/><path d="M3.300-4.300L12.700-20.500" stroke="#fff7a8" stroke-width="1.200" opacity=".55"/><path d="M10.500-21.800l.8-1.400q.4-.7 1.100-.3l2.800 1.600q.7.400.3 1.100l-.8 1.400z" fill="#dadada" stroke="#5f5a2a" stroke-width=".7"/><path d="M1.100-5.600L0 0 5.700-2.900z" fill="#d8d8d8" stroke="#5f5a2a" stroke-width=".7" stroke-linejoin="round"/><path d="M.55-2.500L0 0l2.500-1.300z" fill="#3a3a3a"/></g></svg></div>
<div class="ic" style="left:312px;top:97px;"><svg width="24" height="24" viewBox="0 0 24 24"><g opacity="0.9"><rect x="1.300" y="1" width="19.400" height="19.600" rx="2" fill="#cdcdcd" stroke="#c0c0c0" stroke-width=".8"/><rect x="4.800" y="2.200" width="12.400" height="7.500" fill="#efefef"/><path d="M6.300 4.200h9.400M6.300 6h9.400M6.300 7.800h9.400" stroke="#c2c2c2" stroke-width=".8"/><rect x="5.800" y="13" width="10" height="7" fill="#e4e4e4"/><rect x="7.300" y="14.300" width="2.600" height="4.700" fill="#c0c0c0"/></g><g opacity=".85"><g transform="translate(13.9 23) scale(0.6)"><path d="M1.100-5.600L10.500-21.800l4.600 2.700L5.700-2.900z" fill="#d2ccca" stroke="#c4c0bd" stroke-width=".8" stroke-linejoin="round"/><path d="M3.300-4.300L12.700-20.500" stroke="#eee" stroke-width="1.200" opacity=".55"/><path d="M10.500-21.800l.8-1.400q.4-.7 1.100-.3l2.800 1.600q.7.400.3 1.100l-.8 1.400z" fill="#e6e3e1" stroke="#c4c0bd" stroke-width=".7"/><path d="M1.100-5.600L0 0 5.700-2.900z" fill="#d8d8d8" stroke="#c4c0bd" stroke-width=".7" stroke-linejoin="round"/><path d="M.55-2.500L0 0l2.500-1.300z" fill="#b5b1ae"/></g></g></svg></div>
<div class="ic" style="left:345px;top:97px;"><svg width="24" height="24" viewBox="0 0 24 24"><g opacity=".75"><path d="M2 5.500c-1-2.500 2-4.300 5.500-3.800 3 .4 5 1.300 8 .5 3.500-1 6.500 1 5.800 3.800-.5 2-.3 3.500.5 5 .8 1.800-1 3.300-3.500 2.500h-10c-3 .800-6-1-5.500-3.500.4-1.700 0-3-.8-4.500z" fill="#d4d4d4" stroke="#c0c0c0" stroke-width=".9"/><rect x="13.3" y="13.5" width="10.5" height="10.5" rx="1.800" fill="#bcbcbc"/><path d="M14.35 18.75h8.4M18.55 14.55v8.4" stroke="#fff" stroke-width="1.4" stroke-linecap="round"/><path d="M15.715 15.915l5.67 5.67M21.385 15.915l-5.67 5.67" stroke="#fff" stroke-width="1.1" stroke-linecap="round" opacity=".85"/><circle cx="18.55" cy="18.75" r="1" fill="#bcbcbc"/></g></svg></div>
<div class="ic" style="left:378px;top:97px;"><svg width="24" height="24" viewBox="0 0 24 24"><g opacity=".55"><path d="M3.200 22l2.800-15.500" stroke="#9a9a9a" stroke-width="1"/><path d="M6 5h12" stroke="#b0b0b0" stroke-width="1"/><rect x="3.800" y="2.800" width="4.400" height="4.400" fill="#fff" stroke="#8a8a8a" stroke-width=".9"/><circle cx="6" cy="5" r=".9" fill="#888"/><path d="M9.500 9.500L20 20" stroke="#a9a28f" stroke-width="2.600" stroke-linecap="round"/><path d="M8 12l4.500-4.500 2.200 2.200-4.500 4.500z" fill="#a8a8a8"/><path d="M19.500 9.500L9.500 20.500" stroke="#bdb69f" stroke-width="2.600" stroke-linecap="round"/><path d="M16.500 7.500a3.300 3.300 0 1 0 4.300 4.300l-2.300-.3-1.600-1.600z" fill="#a8a8a8"/></g></svg></div>
<svg class="a" style="left:408px;top:106px" width="8" height="4"><path d="M0 0h8 l-4 4z" fill="#8a8a8a"/></svg>
<div class="ic" style="left:423px;top:97px;"><svg width="24" height="24" viewBox="0 0 24 24"><g opacity=".75"><rect x="2" y="3" width="19.500" height="5.300" fill="#d3d1bd" stroke="#bcbaa6" stroke-width=".8"/><rect x="2" y="9.800" width="19.500" height="5.300" fill="#d3d1bd" stroke="#bcbaa6" stroke-width=".8"/><rect x="2" y="16.600" width="19.500" height="5.300" fill="#d3d1bd" stroke="#bcbaa6" stroke-width=".8"/><g transform="translate(8 23) scale(0.85)"><path d="M1.100-5.600L10.500-21.800l4.600 2.700L5.700-2.900z" fill="#cfcbc8" stroke="#c4c0bd" stroke-width=".8" stroke-linejoin="round"/><path d="M3.300-4.300L12.700-20.500" stroke="#eee" stroke-width="1.200" opacity=".55"/><path d="M10.500-21.800l.8-1.400q.4-.7 1.100-.3l2.800 1.600q.7.400.3 1.100l-.8 1.400z" fill="#e6e3e1" stroke="#c4c0bd" stroke-width=".7"/><path d="M1.100-5.600L0 0 5.700-2.900z" fill="#d8d8d8" stroke="#c4c0bd" stroke-width=".7" stroke-linejoin="round"/><path d="M.55-2.500L0 0l2.500-1.300z" fill="#b5b1ae"/></g></g></svg></div>
<div class="ic" style="left:456px;top:97px;"><svg width="24" height="24" viewBox="0 0 24 24"><g opacity=".6"><path d="M3.500 8.500h16l-1.500 13.500h-13z" fill="#d7c8c8" stroke="#bfa9a9" stroke-width="1"/><rect x="2.500" y="4.500" width="18" height="3.300" fill="#d0c0c0" stroke="#b9a3a3" stroke-width=".9"/><rect x="6.500" y="2.300" width="12.500" height="2.200" fill="#cdbcbc" stroke="#b9a3a3" stroke-width=".7"/><path d="M7.500 10.500v9.500M11.500 10.500v9.500M15.500 10.500v9.500" stroke="#b9a3a3" stroke-width="1.500"/></g></svg></div>
<div class="ic" style="left:489px;top:97px;"><svg width="24" height="24" viewBox="0 0 24 24"><g opacity=".55" fill="none"><path d="M2 6.500L16.500 16M2.500 16.500L17 5.500" stroke="#aaa" stroke-width="1.500" stroke-linecap="round"/><ellipse cx="19" cy="7" rx="3" ry="2" transform="rotate(-35 19 7)" stroke="#c9b4b4" stroke-width="1.400"/><ellipse cx="19" cy="17" rx="3" ry="2.300" transform="rotate(35 19 17)" stroke="#c9b4b4" stroke-width="1.400"/></g></svg></div>
<div class="ic" style="left:522px;top:97px;"><svg width="24" height="24" viewBox="0 0 24 24"><g opacity=".8"><path d="M8 2h8l3.5 3.5v12h-11.5z" fill="#f0f0f0" stroke="#b8b8b8" stroke-width="1"/><path d="M16 2v3.5h3.5" fill="none" stroke="#b8b8b8" stroke-width=".8"/><path d="M4 5.5h8l3.5 3.5v13h-11.5z" fill="#f0f0f0" stroke="#b8b8b8" stroke-width="1"/><path d="M12 5.5v3.5h3.5" fill="none" stroke="#b8b8b8" stroke-width=".8"/><path d="M6 12.5h7.5M6 14.7h7.5M6 16.9h7.5M6 19.1h7.5" stroke="#bdbdbd" stroke-width=".9"/></g></svg></div>
<div class="ic" style="left:555px;top:97px;"><svg width="24" height="24" viewBox="0 0 24 24"><g opacity=".8"><rect x="3.500" y="3.500" width="16.500" height="19" rx="1" fill="#dedede" stroke="#b3b3b3" stroke-width="1"/><rect x="7.500" y="1.500" width="8.500" height="4" rx="1" fill="#cfcfcf" stroke="#b3b3b3" stroke-width=".8"/><path d="M5.5 6h9.5l3 3v11.5h-12.5z" fill="#f4f4f4" stroke="#b8b8b8" stroke-width="1"/><path d="M15 6v3h3" fill="none" stroke="#b8b8b8" stroke-width=".8"/><path d="M7.5 11h8.5M7.5 13.2h8.5M7.5 15.4h8.5M7.5 17.6h8.5" stroke="#bdbdbd" stroke-width=".9"/></g></svg></div>
<svg class="a" style="left:605.8px;top:105.5px" width="9" height="8"><path d="M.8.8l2.700 2.700-2.700 2.700M4.700.8l2.700 2.700-2.700 2.700" fill="none" stroke="#000" stroke-width="1.400"/></svg>
<svg class="a" style="left:625px;top:101px" width="6" height="18"><rect x="0" y="0" width="1" height="1" fill="#b4b4b4"/><rect x="1" y="1" width="1" height="1" fill="#fff"/><rect x="0" y="3" width="1" height="1" fill="#b4b4b4"/><rect x="1" y="4" width="1" height="1" fill="#fff"/><rect x="0" y="6" width="1" height="1" fill="#b4b4b4"/><rect x="1" y="7" width="1" height="1" fill="#fff"/><rect x="0" y="9" width="1" height="1" fill="#b4b4b4"/><rect x="1" y="10" width="1" height="1" fill="#fff"/><rect x="0" y="12" width="1" height="1" fill="#b4b4b4"/><rect x="1" y="13" width="1" height="1" fill="#fff"/><rect x="0" y="15" width="1" height="1" fill="#b4b4b4"/><rect x="1" y="16" width="1" height="1" fill="#fff"/><rect x="3" y="0" width="1" height="1" fill="#b4b4b4"/><rect x="4" y="1" width="1" height="1" fill="#fff"/><rect x="3" y="3" width="1" height="1" fill="#b4b4b4"/><rect x="4" y="4" width="1" height="1" fill="#fff"/><rect x="3" y="6" width="1" height="1" fill="#b4b4b4"/><rect x="4" y="7" width="1" height="1" fill="#fff"/><rect x="3" y="9" width="1" height="1" fill="#b4b4b4"/><rect x="4" y="10" width="1" height="1" fill="#fff"/><rect x="3" y="12" width="1" height="1" fill="#b4b4b4"/><rect x="4" y="13" width="1" height="1" fill="#fff"/><rect x="3" y="15" width="1" height="1" fill="#b4b4b4"/><rect x="4" y="16" width="1" height="1" fill="#fff"/></svg>
<div class="ic" style="left:636px;top:97px;"><svg width="24" height="24" viewBox="0 0 24 24"><g transform="translate(0 -.5)"><path d="M11.800 1.500c-4.600 0-4.300 2-4.300 2v2.600h4.500v.8H5.300S2.200 6.500 2.200 11.600s2.700 4.800 2.700 4.800h1.900v-2.500s-.1-2.700 2.700-2.700h4.500s2.600 0 2.600-2.500V4.300s.4-2.800-4.800-2.800z" fill="#3f77ae"/><circle cx="9.300" cy="3.900" r=".9" fill="#fff"/><path d="M12.200 21.600c4.600 0 4.300-2 4.300-2v-2.600H12v-.8h6.700s3.100.4 3.100-4.700-2.700-4.800-2.700-4.800h-1.900v2.500s.1 2.700-2.700 2.700H10s-2.600 0-2.600 2.500v4.400s-.4 2.800 4.800 2.800z" fill="#f7cf44"/><circle cx="14.700" cy="19.200" r=".9" fill="#fff"/></g><path d="M16.500 17.800l5.200 2.300-5.200 2.300" fill="none" stroke="#4a4a4a" stroke-width="1.300"/></svg></div>
<svg class="a" style="left:667.8px;top:105.5px" width="9" height="8"><path d="M.8.8l2.700 2.700-2.700 2.700M4.700.8l2.700 2.700-2.700 2.700" fill="none" stroke="#000" stroke-width="1.400"/></svg>
<svg class="a" style="left:687px;top:101px" width="6" height="18"><rect x="0" y="0" width="1" height="1" fill="#b4b4b4"/><rect x="1" y="1" width="1" height="1" fill="#fff"/><rect x="0" y="3" width="1" height="1" fill="#b4b4b4"/><rect x="1" y="4" width="1" height="1" fill="#fff"/><rect x="0" y="6" width="1" height="1" fill="#b4b4b4"/><rect x="1" y="7" width="1" height="1" fill="#fff"/><rect x="0" y="9" width="1" height="1" fill="#b4b4b4"/><rect x="1" y="10" width="1" height="1" fill="#fff"/><rect x="0" y="12" width="1" height="1" fill="#b4b4b4"/><rect x="1" y="13" width="1" height="1" fill="#fff"/><rect x="0" y="15" width="1" height="1" fill="#b4b4b4"/><rect x="1" y="16" width="1" height="1" fill="#fff"/><rect x="3" y="0" width="1" height="1" fill="#b4b4b4"/><rect x="4" y="1" width="1" height="1" fill="#fff"/><rect x="3" y="3" width="1" height="1" fill="#b4b4b4"/><rect x="4" y="4" width="1" height="1" fill="#fff"/><rect x="3" y="6" width="1" height="1" fill="#b4b4b4"/><rect x="4" y="7" width="1" height="1" fill="#fff"/><rect x="3" y="9" width="1" height="1" fill="#b4b4b4"/><rect x="4" y="10" width="1" height="1" fill="#fff"/><rect x="3" y="12" width="1" height="1" fill="#b4b4b4"/><rect x="4" y="13" width="1" height="1" fill="#fff"/><rect x="3" y="15" width="1" height="1" fill="#b4b4b4"/><rect x="4" y="16" width="1" height="1" fill="#fff"/></svg>
<div class="ic" style="left:698px;top:97px;"><svg width="24" height="24" viewBox="0 0 24 24"><rect x="1.600" y="1.600" width="20.500" height="18.500" fill="#e6e6e6" stroke="#222" stroke-width="1" stroke-dasharray="2.200 1.600"/><rect x="2.800" y="2.800" width="12.500" height="12.500" fill="#f3d53a" stroke="#d1b02a" stroke-width=".9"/><g transform="translate(11.800 9.500) rotate(-12) scale(1.050)"><path d="M0 0v12.200l2.900-2.600 2.100 4.800 2-.9-2.100-4.700h4z" fill="#fff" stroke="#222" stroke-width=".9" stroke-linejoin="round"/></g></svg></div>
<svg class="a" style="left:727.5px;top:106.5px" width="8" height="4"><path d="M0 0h8 l-4 4z" fill="#707070"/></svg>
<svg class="a" style="left:741.8px;top:105.5px" width="9" height="8"><path d="M.8.8l2.700 2.700-2.700 2.700M4.700.8l2.700 2.700-2.700 2.700" fill="none" stroke="#000" stroke-width="1.400"/></svg>
<svg class="a" style="left:760px;top:101px" width="6" height="18"><rect x="0" y="0" width="1" height="1" fill="#b4b4b4"/><rect x="1" y="1" width="1" height="1" fill="#fff"/><rect x="0" y="3" width="1" height="1" fill="#b4b4b4"/><rect x="1" y="4" width="1" height="1" fill="#fff"/><rect x="0" y="6" width="1" height="1" fill="#b4b4b4"/><rect x="1" y="7" width="1" height="1" fill="#fff"/><rect x="0" y="9" width="1" height="1" fill="#b4b4b4"/><rect x="1" y="10" width="1" height="1" fill="#fff"/><rect x="0" y="12" width="1" height="1" fill="#b4b4b4"/><rect x="1" y="13" width="1" height="1" fill="#fff"/><rect x="0" y="15" width="1" height="1" fill="#b4b4b4"/><rect x="1" y="16" width="1" height="1" fill="#fff"/><rect x="3" y="0" width="1" height="1" fill="#b4b4b4"/><rect x="4" y="1" width="1" height="1" fill="#fff"/><rect x="3" y="3" width="1" height="1" fill="#b4b4b4"/><rect x="4" y="4" width="1" height="1" fill="#fff"/><rect x="3" y="6" width="1" height="1" fill="#b4b4b4"/><rect x="4" y="7" width="1" height="1" fill="#fff"/><rect x="3" y="9" width="1" height="1" fill="#b4b4b4"/><rect x="4" y="10" width="1" height="1" fill="#fff"/><rect x="3" y="12" width="1" height="1" fill="#b4b4b4"/><rect x="4" y="13" width="1" height="1" fill="#fff"/><rect x="3" y="15" width="1" height="1" fill="#b4b4b4"/><rect x="4" y="16" width="1" height="1" fill="#fff"/></svg>
<div class="ic" style="left:772px;top:97px;"><svg width="24" height="24" viewBox="0 0 24 24"><path d="M6.5 2.8 L17.5 2.8 L22.3 11.8 L17.5 20.8 L6.5 20.8 L1.7 11.8 Z" fill="none" stroke="#111" stroke-width="1.500"/><circle cx="6.5" cy="2.8" r="1.5" fill="#e8141c"/><circle cx="17.5" cy="2.8" r="1.5" fill="#e8141c"/><circle cx="22.3" cy="11.8" r="2.4" fill="#e8141c"/><circle cx="17.5" cy="20.8" r="1.5" fill="#e8141c"/><circle cx="6.5" cy="20.8" r="1.5" fill="#e8141c"/><circle cx="1.7" cy="11.8" r="2.4" fill="#e8141c"/></svg></div>
<svg class="a" style="left:803.8px;top:105.5px" width="9" height="8"><path d="M.8.8l2.700 2.700-2.700 2.700M4.700.8l2.700 2.700-2.700 2.700" fill="none" stroke="#000" stroke-width="1.400"/></svg>
<svg class="a" style="left:822px;top:101px" width="6" height="18"><rect x="0" y="0" width="1" height="1" fill="#b4b4b4"/><rect x="1" y="1" width="1" height="1" fill="#fff"/><rect x="0" y="3" width="1" height="1" fill="#b4b4b4"/><rect x="1" y="4" width="1" height="1" fill="#fff"/><rect x="0" y="6" width="1" height="1" fill="#b4b4b4"/><rect x="1" y="7" width="1" height="1" fill="#fff"/><rect x="0" y="9" width="1" height="1" fill="#b4b4b4"/><rect x="1" y="10" width="1" height="1" fill="#fff"/><rect x="0" y="12" width="1" height="1" fill="#b4b4b4"/><rect x="1" y="13" width="1" height="1" fill="#fff"/><rect x="0" y="15" width="1" height="1" fill="#b4b4b4"/><rect x="1" y="16" width="1" height="1" fill="#fff"/><rect x="3" y="0" width="1" height="1" fill="#b4b4b4"/><rect x="4" y="1" width="1" height="1" fill="#fff"/><rect x="3" y="3" width="1" height="1" fill="#b4b4b4"/><rect x="4" y="4" width="1" height="1" fill="#fff"/><rect x="3" y="6" width="1" height="1" fill="#b4b4b4"/><rect x="4" y="7" width="1" height="1" fill="#fff"/><rect x="3" y="9" width="1" height="1" fill="#b4b4b4"/><rect x="4" y="10" width="1" height="1" fill="#fff"/><rect x="3" y="12" width="1" height="1" fill="#b4b4b4"/><rect x="4" y="13" width="1" height="1" fill="#fff"/><rect x="3" y="15" width="1" height="1" fill="#b4b4b4"/><rect x="4" y="16" width="1" height="1" fill="#fff"/></svg>
<div class="ic" style="left:834px;top:97px;"><svg width="24" height="24" viewBox="0 0 24 24"><rect x="1.800" y="1.100" width="20.200" height="20.600" rx=".8" fill="#5b87c5" stroke="#1f2f45" stroke-width=".9"/><rect x="1.800" y="1.100" width="4.900" height="20.600" fill="#2b3f58"/><text x="10.500" y="16.800" font-family="Liberation Sans,sans-serif" font-size="14" fill="#fff">?</text></svg></div>
<svg class="a" style="left:871px;top:101px" width="6" height="18"><rect x="0" y="0" width="1" height="1" fill="#b4b4b4"/><rect x="1" y="1" width="1" height="1" fill="#fff"/><rect x="0" y="3" width="1" height="1" fill="#b4b4b4"/><rect x="1" y="4" width="1" height="1" fill="#fff"/><rect x="0" y="6" width="1" height="1" fill="#b4b4b4"/><rect x="1" y="7" width="1" height="1" fill="#fff"/><rect x="0" y="9" width="1" height="1" fill="#b4b4b4"/><rect x="1" y="10" width="1" height="1" fill="#fff"/><rect x="0" y="12" width="1" height="1" fill="#b4b4b4"/><rect x="1" y="13" width="1" height="1" fill="#fff"/><rect x="0" y="15" width="1" height="1" fill="#b4b4b4"/><rect x="1" y="16" width="1" height="1" fill="#fff"/><rect x="3" y="0" width="1" height="1" fill="#b4b4b4"/><rect x="4" y="1" width="1" height="1" fill="#fff"/><rect x="3" y="3" width="1" height="1" fill="#b4b4b4"/><rect x="4" y="4" width="1" height="1" fill="#fff"/><rect x="3" y="6" width="1" height="1" fill="#b4b4b4"/><rect x="4" y="7" width="1" height="1" fill="#fff"/><rect x="3" y="9" width="1" height="1" fill="#b4b4b4"/><rect x="4" y="10" width="1" height="1" fill="#fff"/><rect x="3" y="12" width="1" height="1" fill="#b4b4b4"/><rect x="4" y="13" width="1" height="1" fill="#fff"/><rect x="3" y="15" width="1" height="1" fill="#b4b4b4"/><rect x="4" y="16" width="1" height="1" fill="#fff"/></svg>
<div class="ic" style="left:883px;top:97px;"><svg width="24" height="24" viewBox="0 0 24 24"><path d="M2.600 2.900L11.800 8 21.100 2.700M11.800 8L2.600 21" stroke="#2f4f78" stroke-width="1" fill="none"/><path d="M5.900 6.800L11.800 3.400 20.600 3.900 22.600 6.800 20.600 10.700 15.700 11.700 13.700 16.100 9.800 17.100 4.900 14.700 3.400 10.700z" fill="#6a93c8" stroke="#2f4f78" stroke-width=".9" stroke-linejoin="round"/><path d="M2.600 2.900L11.800 8 21.100 2.700M11.800 8L6.500 15.500" stroke="#2f4f78" stroke-width=".9" fill="none"/><circle cx="2.6" cy="2.9" r="2.1" fill="#f4e23c" stroke="#8f8416" stroke-width=".7"/><circle cx="21.1" cy="2.7" r="2.1" fill="#f4e23c" stroke="#8f8416" stroke-width=".7"/><circle cx="2.6" cy="21" r="2.1" fill="#f4e23c" stroke="#8f8416" stroke-width=".7"/><circle cx="11.8" cy="8" r="1.7" fill="#f4e23c" stroke="#8f8416" stroke-width=".7"/><path d="M12.300 16.600l2.900 5.400L22.800 12.700" fill="none" stroke="#fff" stroke-width="3.400" stroke-linejoin="round"/><path d="M12.300 16.600l2.900 5.400L22.800 12.700l-7 6.500z" fill="#f0d92a" stroke="#9a8a14" stroke-width=".7" stroke-linejoin="round"/></svg></div>
<svg class="a" style="left:6px;top:140px" width="6" height="18"><rect x="0" y="0" width="1" height="1" fill="#b4b4b4"/><rect x="1" y="1" width="1" height="1" fill="#fff"/><rect x="0" y="3" width="1" height="1" fill="#b4b4b4"/><rect x="1" y="4" width="1" height="1" fill="#fff"/><rect x="0" y="6" width="1" height="1" fill="#b4b4b4"/><rect x="1" y="7" width="1" height="1" fill="#fff"/><rect x="0" y="9" width="1" height="1" fill="#b4b4b4"/><rect x="1" y="10" width="1" height="1" fill="#fff"/><rect x="0" y="12" width="1" height="1" fill="#b4b4b4"/><rect x="1" y="13" width="1" height="1" fill="#fff"/><rect x="0" y="15" width="1" height="1" fill="#b4b4b4"/><rect x="1" y="16" width="1" height="1" fill="#fff"/><rect x="3" y="0" width="1" height="1" fill="#b4b4b4"/><rect x="4" y="1" width="1" height="1" fill="#fff"/><rect x="3" y="3" width="1" height="1" fill="#b4b4b4"/><rect x="4" y="4" width="1" height="1" fill="#fff"/><rect x="3" y="6" width="1" height="1" fill="#b4b4b4"/><rect x="4" y="7" width="1" height="1" fill="#fff"/><rect x="3" y="9" width="1" height="1" fill="#b4b4b4"/><rect x="4" y="10" width="1" height="1" fill="#fff"/><rect x="3" y="12" width="1" height="1" fill="#b4b4b4"/><rect x="4" y="13" width="1" height="1" fill="#fff"/><rect x="3" y="15" width="1" height="1" fill="#b4b4b4"/><rect x="4" y="16" width="1" height="1" fill="#fff"/></svg>
<div class="ic" style="left:18px;top:136px;"><svg width="24" height="24" viewBox="0 0 24 24"><g opacity="1"><path d="M0.5 9.8l4.500-5.2h16v10.4h-16z" fill="#f6df55" stroke="#c9a929" stroke-width="1.200" stroke-linejoin="round"/><text x="4.9" y="12.1" font-family="Liberation Sans,sans-serif" font-weight="bold" font-size="9.5" textLength="14" lengthAdjust="spacingAndGlyphs" fill="#33331f">abc</text></g></svg></div>
<div class="ic" style="left:51px;top:136px;"><svg width="24" height="24" viewBox="0 0 24 24"><circle cx="8.900" cy="8.700" r="7.500" fill="#e5332a" stroke="#7c1712" stroke-width=".8"/><path d="M8.900 8.700L2.400 4.950A7.500 7.500 0 0 1 15.400 4.950z" fill="#f5d327" stroke="#8a6f0c" stroke-width=".6"/><path d="M8.900 8.700v7.500A7.500 7.500 0 0 1 2.400 4.950z" fill="#2fa84a" stroke="#14622a" stroke-width=".6"/><rect x="11" y="16.600" width="3" height="5.200" fill="#f5c927" stroke="#b18a0c" stroke-width=".7"/><rect x="14.500" y="10.200" width="3.700" height="11.700" rx=".8" fill="#2fa84a" stroke="#14622a" stroke-width=".8"/><rect x="18.800" y="17" width="3.200" height="4.900" fill="#c4201c" stroke="#6e0d0a" stroke-width=".8"/></svg></div>
<div class="a" style="left:83px;top:139px;width:1px;height:19px;background:#cdcdcd"></div>
<div class="ic" style="left:91px;top:136px;"><svg width="24" height="24" viewBox="0 0 24 24"><g opacity="1"><path d="M-0.2 9.7l4.500-4.9h16.5v9.8h-16.5z" fill="#ddeafc" stroke="#4d8ee6" stroke-width="1.200" stroke-linejoin="round"/><text x="4.2" y="11.7" font-family="Liberation Sans,sans-serif" font-weight="bold" font-size="9.5" textLength="8.8" lengthAdjust="spacingAndGlyphs" fill="#333">ab</text></g><path d="M16.600 9.200q1-1.200 1.900 0l.5 5.800h-2.800z" fill="#ececec" stroke="#8a8a8a" stroke-width=".7"/><circle cx="18.600" cy="17.900" r="4.800" fill="#a12a2a" stroke="#7a1a1a" stroke-width=".6"/><circle cx="17.200" cy="16.300" r="1.500" fill="#fff" opacity=".3"/></svg></div>
<div class="ic" style="left:124px;top:136px;"><svg width="24" height="24" viewBox="0 0 24 24"><g opacity="1"><path d="M-0.2 9.7l4.500-5.3h17v10.6h-17z" fill="#fde9e9" stroke="#e81818" stroke-width="1.200" stroke-linejoin="round"/><text x="4.2" y="12.1" font-family="Liberation Sans,sans-serif" font-weight="bold" font-size="9.5" textLength="13.8" lengthAdjust="spacingAndGlyphs" fill="#d81010">abc</text></g></svg></div>
<div class="a" style="left:156px;top:139px;width:1px;height:19px;background:#cdcdcd"></div>
<div class="ic" style="left:164px;top:136px;"><svg width="24" height="24" viewBox="0 0 24 24"><g opacity="0.85"><path d="M0.2 9.45l4.500-4.65h15.7v9.3h-15.7z" fill="#e3e1da" stroke="#bcb9ae" stroke-width="1.200" stroke-linejoin="round"/><text x="4.6" y="11.2" font-family="Liberation Sans,sans-serif" font-weight="bold" font-size="9.5" textLength="8.6" lengthAdjust="spacingAndGlyphs" fill="#b5b2a8">ab</text></g><g opacity=".55"><path d="M16.600 9.200q1-1.200 1.900 0l.5 5.800h-2.800z" fill="#ececec" stroke="#8a8a8a" stroke-width=".7"/><circle cx="18.600" cy="17.900" r="4.800" fill="#b0a4a8" stroke="#a09498" stroke-width=".6"/><circle cx="17.200" cy="16.300" r="1.500" fill="#fff" opacity=".3"/></g></svg></div>
<div class="ic" style="left:197px;top:136px;"><svg width="24" height="24" viewBox="0 0 24 24"><g opacity="0.85"><path d="M0.2 9.45l4.500-4.65h15.7v9.3h-15.7z" fill="#e3e1da" stroke="#bcb9ae" stroke-width="1.200" stroke-linejoin="round"/><text x="4.6" y="11.2" font-family="Liberation Sans,sans-serif" font-weight="bold" font-size="9.5" textLength="13.3" lengthAdjust="spacingAndGlyphs" fill="#b5b2a8">abc</text></g><g opacity=".6"><path d="M8.500 19q6-6 14 0-8 5.500-14 0z" fill="#f4f4f4" stroke="#aaa" stroke-width=".8"/><circle cx="15.500" cy="18.800" r="2.600" fill="#b5b5b5"/><circle cx="15.500" cy="18.800" r="1.100" fill="#8a8a8a"/><path d="M8 17.500q6.500-6 15.500 0" fill="none" stroke="#bbb" stroke-width=".8"/></g></svg></div>
<div class="ic" style="left:230px;top:136px;"><svg width="24" height="24" viewBox="0 0 24 24"><g opacity="0.85"><path d="M0.2 9.45l4.500-4.65h15.7v9.3h-15.7z" fill="#e3e1da" stroke="#bcb9ae" stroke-width="1.200" stroke-linejoin="round"/><text x="4.6" y="11.2" font-family="Liberation Sans,sans-serif" font-weight="bold" font-size="9.5" textLength="13.3" lengthAdjust="spacingAndGlyphs" fill="#b5b2a8">abc</text></g><g opacity=".7"><rect x="13.300" y="14" width="10.200" height="9.600" rx="1.500" fill="#b5b5b5"/><path d="M15 17.700h3.600v-2.300l3.700 3.500-3.700 3.500v-2.300H15z" fill="#fff"/></g></svg></div>
<div class="ic" style="left:263px;top:136px;"><svg width="24" height="24" viewBox="0 0 24 24"><g opacity="0.85"><path d="M0.2 9.45l4.500-4.65h15.7v9.3h-15.7z" fill="#e3e1da" stroke="#bcb9ae" stroke-width="1.200" stroke-linejoin="round"/><text x="4.6" y="11.2" font-family="Liberation Sans,sans-serif" font-weight="bold" font-size="9.5" textLength="13.3" lengthAdjust="spacingAndGlyphs" fill="#b5b2a8">abc</text></g><g opacity=".7"><rect x="13.300" y="14" width="10.200" height="9.600" rx="1.500" fill="#b5b5b5"/><path d="M16.300 21.200a3.300 3.300 0 1 1 3.900.600" fill="none" stroke="#fff" stroke-width="1.500"/><path d="M21.500 20.200l-2.700 2.900-.5-3.400z" fill="#fff"/></g></svg></div>
<div class="ic" style="left:296px;top:136px;"><svg width="24" height="24" viewBox="0 0 24 24"><g opacity="0.85"><path d="M0.2 9.45l4.500-4.65h15.7v9.3h-15.7z" fill="#e3e1da" stroke="#bcb9ae" stroke-width="1.200" stroke-linejoin="round"/><text x="4.6" y="11.2" font-family="Liberation Sans,sans-serif" font-weight="bold" font-size="9.5" textLength="13.3" lengthAdjust="spacingAndGlyphs" fill="#b5b2a8">abc</text></g><g opacity=".7"><rect x="13.300" y="14" width="10.200" height="9.600" rx="1.500" fill="#c0bdb0"/><path d="M15.300 22.300l.8-2.600 4.600-4.600 1.800 1.800-4.600 4.600z" fill="#fff"/></g></svg></div>
<svg class="a" style="left:858px;top:140px" width="6" height="18"><rect x="0" y="0" width="1" height="1" fill="#b4b4b4"/><rect x="1" y="1" width="1" height="1" fill="#fff"/><rect x="0" y="3" width="1" height="1" fill="#b4b4b4"/><rect x="1" y="4" width="1" height="1" fill="#fff"/><rect x="0" y="6" width="1" height="1" fill="#b4b4b4"/><rect x="1" y="7" width="1" height="1" fill="#fff"/><rect x="0" y="9" width="1" height="1" fill="#b4b4b4"/><rect x="1" y="10" width="1" height="1" fill="#fff"/><rect x="0" y="12" width="1" height="1" fill="#b4b4b4"/><rect x="1" y="13" width="1" height="1" fill="#fff"/><rect x="0" y="15" width="1" height="1" fill="#b4b4b4"/><rect x="1" y="16" width="1" height="1" fill="#fff"/><rect x="3" y="0" width="1" height="1" fill="#b4b4b4"/><rect x="4" y="1" width="1" height="1" fill="#fff"/><rect x="3" y="3" width="1" height="1" fill="#b4b4b4"/><rect x="4" y="4" width="1" height="1" fill="#fff"/><rect x="3" y="6" width="1" height="1" fill="#b4b4b4"/><rect x="4" y="7" width="1" height="1" fill="#fff"/><rect x="3" y="9" width="1" height="1" fill="#b4b4b4"/><rect x="4" y="10" width="1" height="1" fill="#fff"/><rect x="3" y="12" width="1" height="1" fill="#b4b4b4"/><rect x="4" y="13" width="1" height="1" fill="#fff"/><rect x="3" y="15" width="1" height="1" fill="#b4b4b4"/><rect x="4" y="16" width="1" height="1" fill="#fff"/></svg>
<div class="ic" style="left:870px;top:136px;"><svg width="24" height="24" viewBox="0 0 24 24"><defs><linearGradient id="lg1" x1="0" y1="0" x2="0" y2="1"><stop offset="0" stop-color="#6aa53f"/><stop offset="1" stop-color="#9dd56c"/></linearGradient></defs><rect width="24" height="24" fill="url(#lg1)"/><path d="M24 0L12 24H24z" fill="#fff" opacity=".08"/><path d="M3.200 20.800l5.500-5.500" stroke="#eef5e6" stroke-width="2.800" stroke-linecap="round"/><circle cx="14.300" cy="9.700" r="6.300" fill="#7db553" fill-opacity=".5" stroke="#fff" stroke-width="2"/></svg></div>
<svg class="a" style="left:901.8px;top:144.5px" width="9" height="8"><path d="M.8.8l2.700 2.700-2.700 2.700M4.700.8l2.700 2.700-2.700 2.700" fill="none" stroke="#000" stroke-width="1.400"/></svg>
<span class="t" style="left:4.90px;top:170.00px;letter-spacing:-0.317px;">Browser</span>
<svg class="a" style="left:153px;top:172px" width="26" height="12"><g fill="none" stroke="#6e6a66" stroke-width="1"><rect x="0.5" y="0.5" width="10" height="10" rx="2"/><rect x="14.500" y="0.5" width="10" height="10" rx="2"/><rect x="4.500" y="2.500" width="4" height="4" rx="1"/><rect x="2.500" y="4.500" width="4" height="4" rx="1" fill="#f0f0f0"/></g><path d="M17.300 3.300l4.400 4.400M21.700 3.300l-4.400 4.400" stroke="#4a4743" stroke-width="1.900"/></svg>
<div class="i16" style="left:9px;top:194px;"><svg width="16" height="16" viewBox="0 0 16 16"><rect x="1.500" y="1.500" width="11" height="11" fill="#f6f6f6" stroke="#7c7c7c" stroke-width="1"/><circle cx="12.300" cy="12.300" r="3" fill="#6aa86a" stroke="#4c8a4c" stroke-width=".7"/><circle cx="12.300" cy="12.300" r="1.300" fill="#cfe6cf"/></svg></div>
<div class="i16" style="left:34px;top:194px;"><svg width="16" height="16" viewBox="0 0 16 16"><g transform="scale(.667)"><g><path d="M3.200 12.600A8.800 8.800 0 0 1 17.300 5.400" stroke="#4a86d2" stroke-width="4.800" fill="none"/><path d="M13.700 8.600L22.700 1.500 22.600 12.300Z" fill="#4a86d2"/></g><g transform="rotate(180 12 12)"><path d="M3.200 12.600A8.800 8.800 0 0 1 17.300 5.400" stroke="#5b97de" stroke-width="4.800" fill="none"/><path d="M13.700 8.600L22.700 1.500 22.600 12.300Z" fill="#5b97de"/></g><path d="M4.500 9.500A7.500 7.500 0 0 1 14.500 4.500" stroke="#8bb6ea" stroke-width="1" fill="none" opacity=".7"/></g></svg></div>
<div class="i16" style="left:59px;top:194px;"><svg width="16" height="16" viewBox="0 0 16 16"><path d="M1 1.500h14v1.800L9.700 9v5.500L6.300 13V9L1 3.300z" fill="#5b87c5" stroke="#456ea8" stroke-width=".7" stroke-linejoin="round"/><rect x="1.800" y="1.800" width="12.400" height="1.700" fill="#f2dc3c"/></svg></div>
<div class="i16" style="left:84px;top:194px;"><svg width="16" height="16" viewBox="0 0 16 16"><path d="M1.500 2.500h7M3 2.500v11.500M3 7.500h2M3 12.500h2" fill="none" stroke="#9a9a9a" stroke-width="1"/><rect x="5" y="6" width="3" height="3" fill="#f59b23"/><rect x="5" y="11" width="3" height="3" fill="#f59b23"/><path d="M11.300 14.500V7.500H8.600L12.300 1.500 16 7.500h-2.700v7z" fill="#4f7fc0" stroke="#355f9b" stroke-width=".6"/></svg></div>
<div class="i16" style="left:109px;top:194px;"><svg width="16" height="16" viewBox="0 0 16 16"><circle cx="8" cy="8" r="6.800" fill="#5b87c5" stroke="#4a74b2" stroke-width=".6"/><circle cx="8" cy="8" r="5.800" fill="none" stroke="#83a8dc" stroke-width=".6"/><text x="6.200" y="12" font-family="Liberation Serif,serif" font-style="italic" font-weight="bold" font-size="11" fill="#fff">i</text></svg></div>
<div class="a" style="left:1px;top:218px;width:179px;height:203px;background:#fff;border-top:1px solid #a0a0a0;border-right:1px solid #a0a0a0;border-bottom:1px solid #a0a0a0"></div>
<div class="a" style="left:1px;top:364px;width:164px;height:18px;background:#efefef"></div>
<div class="a" style="left:1px;top:219px;width:164px;height:187px;overflow:hidden" id="btree">
<svg class="a" style="left:7px;top:8px" width="8" height="4"><path d="M0 0h7l-3.500 4z" fill="#555"/></svg>
<div class="i16" style="left:24px;top:2px;"><svg width="16" height="16" viewBox="0 0 16 16"><path d="M2 3.500h7M2 3.500v-1h6.500l1 1.500h5v2" fill="none" stroke="#8a8a8a" stroke-width="1.300"/><path d="M1.500 14.500V3.200h5.200l1.500 2.600h6.300v8.700z" fill="#f4f4f4" stroke="#8a8a8a" stroke-width="1" stroke-linejoin="round"/><path d="M2 2.300h6l1.300 2h5" fill="none" stroke="#8a8a8a" stroke-width="1.600"/></svg></div>
<span class="t" style="left:45.50px;top:2.00px;letter-spacing:0.243px;">amr</span>
<svg class="a" style="left:29px;top:24px" width="4" height="8"><path d="M0 0v7l4-3.500z" fill="#555"/></svg>
<div class="i16" style="left:44px;top:20px;"><svg width="16" height="16" viewBox="0 0 16 16"><path d="M1.500 14V2.500h5.500l1.500 2h6v9.500z" fill="#f4f4f4" stroke="#8f8f8f" stroke-width="1" stroke-linejoin="round"/></svg></div>
<span class="t" style="left:66.40px;top:20.00px;letter-spacing:-0.298px;">images</span>
<div class="i16" style="left:44px;top:38px;"><svg width="16" height="16" viewBox="0 0 16 16"><path d="M1.300 4c2.500-2.500 5-1.500 7-.8 2 .7 4 .4 6-.4.900 2.500.900 5.500.200 8.500-2.500-1.500-4.500-1.500-6.500 0-2 1.500-4.500 2-6.200.8-1.200-2.700-1.200-5.500-.5-8.100z" fill="#dbe6f4" stroke="#5b6f8c" stroke-width="1"/><path d="M2.300 5c2-1.500 4-1 6 0 2 .8 3.500.5 5-.2" fill="none" stroke="#f6f9fd" stroke-width="1.200" opacity=".8"/></svg></div>
<span class="t" style="left:66.40px;top:38.00px;letter-spacing:-0.317px;">cb<span class="us">_</span>2018<span class="us">_</span>us<span class="us">_</span>state<span class="us">_</span>500k.gpkg</span>
<div class="i16" style="left:44px;top:56px;"><svg width="16" height="16" viewBox="0 0 16 16"><rect x="1.5" y="1.5" width="4.300" height="4.300" fill="#2b3a52"/><rect x="5.8" y="1.5" width="4.300" height="4.300" fill="#a9c3e6"/><rect x="10.1" y="1.5" width="4.300" height="4.300" fill="#2b3a52"/><rect x="1.5" y="5.8" width="4.300" height="4.300" fill="#a9c3e6"/><rect x="5.8" y="5.8" width="4.300" height="4.300" fill="#2b3a52"/><rect x="10.1" y="5.8" width="4.300" height="4.300" fill="#cfddf0"/><rect x="1.5" y="10.1" width="4.300" height="4.300" fill="#2b3a52"/><rect x="5.8" y="10.1" width="4.300" height="4.300" fill="#a9c3e6"/><rect x="10.1" y="10.1" width="4.300" height="4.300" fill="#e4ecf7"/><rect x="5.800" y="1.500" width="4.300" height="4.300" fill="#a9c3e6"/><rect x="10.100" y="1.500" width="4.300" height="4.300" fill="#2b3a52"/></svg></div>
<span class="t" style="left:66.40px;top:56.00px;letter-spacing:-0.317px;">cb<span class="us">_</span>2018<span class="us">_</span>us<span class="us">_</span>state<span class="us">_</span>500k.cpg</span>
<div class="i16" style="left:44px;top:74px;"><svg width="16" height="16" viewBox="0 0 16 16"><path d="M1.300 4c2.500-2.500 5-1.500 7-.8 2 .7 4 .4 6-.4.900 2.500.900 5.500.200 8.500-2.500-1.500-4.500-1.500-6.500 0-2 1.500-4.500 2-6.200.8-1.200-2.700-1.200-5.500-.5-8.100z" fill="#dbe6f4" stroke="#5b6f8c" stroke-width="1"/><path d="M2.300 5c2-1.500 4-1 6 0 2 .8 3.500.5 5-.2" fill="none" stroke="#f6f9fd" stroke-width="1.200" opacity=".8"/></svg></div>
<span class="t" style="left:66.40px;top:74.00px;letter-spacing:-0.317px;">cb<span class="us">_</span>2018<span class="us">_</span>us<span class="us">_</span>state<span class="us">_</span>500k.shp</span>
<div class="i16" style="left:44px;top:92px;"><svg width="16" height="16" viewBox="0 0 16 16"><rect x="1.5" y="1.5" width="4.300" height="4.300" fill="#2b3a52"/><rect x="5.8" y="1.5" width="4.300" height="4.300" fill="#a9c3e6"/><rect x="10.1" y="1.5" width="4.300" height="4.300" fill="#2b3a52"/><rect x="1.5" y="5.8" width="4.300" height="4.300" fill="#a9c3e6"/><rect x="5.8" y="5.8" width="4.300" height="4.300" fill="#2b3a52"/><rect x="10.1" y="5.8" width="4.300" height="4.300" fill="#cfddf0"/><rect x="1.5" y="10.1" width="4.300" height="4.300" fill="#2b3a52"/><rect x="5.8" y="10.1" width="4.300" height="4.300" fill="#a9c3e6"/><rect x="10.1" y="10.1" width="4.300" height="4.300" fill="#e4ecf7"/><rect x="5.800" y="1.500" width="4.300" height="4.300" fill="#a9c3e6"/><rect x="10.100" y="1.500" width="4.300" height="4.300" fill="#2b3a52"/></svg></div>
<span class="t" style="left:66.40px;top:92.00px;letter-spacing:-0.317px;">cb<span class="us">_</span>2018<span class="us">_</span>us<span class="us">_</span>state<span class="us">_</span>500k.shp.ea</span>
<div class="i16" style="left:44px;top:110px;"><svg width="16" height="16" viewBox="0 0 16 16"><path d="M1.300 4c2.500-2.500 5-1.500 7-.8 2 .7 4 .4 6-.4.900 2.500.900 5.500.200 8.500-2.500-1.500-4.500-1.500-6.500 0-2 1.500-4.500 2-6.200.8-1.200-2.700-1.200-5.500-.5-8.100z" fill="#dbe6f4" stroke="#5b6f8c" stroke-width="1"/><path d="M2.300 5c2-1.500 4-1 6 0 2 .8 3.500.5 5-.2" fill="none" stroke="#f6f9fd" stroke-width="1.200" opacity=".8"/></svg></div>
<span class="t" style="left:66.40px;top:110.00px;letter-spacing:-0.317px;">cb<span class="us">_</span>2018<span class="us">_</span>us<span class="us">_</span>state<span class="us">_</span>500k.shp</span>
<div class="i16" style="left:44px;top:128px;"><svg width="16" height="16" viewBox="0 0 16 16"><rect x="2" y="1.500" width="12" height="13" rx="1" fill="#f6f6f6" stroke="#8a8a8a" stroke-width="1"/><path d="M3.500 4.500h2.500M7 4.500h5.500M3.500 7h2.500M7 7h5.500M3.500 9.500h2.500M7 9.500h5.500M3.500 12h2.500M7 12h5.500" stroke="#8a8a8a" stroke-width="1"/></svg></div>
<span class="t" style="left:66.40px;top:128.00px;letter-spacing:-0.262px;">florida<span class="us">_</span>2020<span class="us">_</span>07<span class="us">_</span>prcp.csv</span>
<div class="i16" style="left:44px;top:146px;"><svg width="16" height="16" viewBox="0 0 16 16"><path d="M1.300 4c2.500-2.500 5-1.500 7-.8 2 .7 4 .4 6-.4.900 2.500.900 5.500.200 8.500-2.500-1.500-4.500-1.500-6.500 0-2 1.500-4.500 2-6.200.8-1.200-2.700-1.200-5.500-.5-8.100z" fill="#8fb4e3" stroke="#3f5f8c" stroke-width="1"/><path d="M2.300 5c2-1.500 4-1 6 0 2 .8 3.500.5 5-.2" fill="none" stroke="#cfe0f5" stroke-width="1.200" opacity=".8"/></svg></div>
<span class="t" style="left:66.40px;top:146.00px;letter-spacing:-0.427px;">hybas<span class="us">_</span>na<span class="us">_</span>lev06<span class="us">_</span>v1c.shp</span>
<svg class="a" style="left:29px;top:168px" width="4" height="8"><path d="M0 0v7l4-3.500z" fill="#555"/></svg>
<div class="i16" style="left:44px;top:164px;"><svg width="16" height="16" viewBox="0 0 16 16"><path d="M2.500 4v8.500c0 1.300 2.500 2.300 5.500 2.300s5.500-1 5.500-2.300V4" fill="#f6f6f6" stroke="#8a8a8a" stroke-width="1"/><ellipse cx="8" cy="4" rx="5.500" ry="2.300" fill="#f6f6f6" stroke="#8a8a8a" stroke-width="1"/><path d="M2.500 8.200c0 1.300 2.500 2.300 5.500 2.300s5.500-1 5.500-2.300" fill="none" stroke="#8a8a8a" stroke-width="1"/></svg></div>
<span class="t" style="left:66.40px;top:164.00px;letter-spacing:0.089px;">precipitation<span class="us">_</span>filtered.gpkg</span>
<svg class="a" style="left:29px;top:186px" width="4" height="8"><path d="M0 0v7l4-3.500z" fill="#555"/></svg>
<div class="i16" style="left:44px;top:182px;"><svg width="16" height="16" viewBox="0 0 16 16"><path d="M2.500 4v8.500c0 1.300 2.500 2.300 5.500 2.300s5.500-1 5.500-2.300V4" fill="#f6f6f6" stroke="#8a8a8a" stroke-width="1"/><ellipse cx="8" cy="4" rx="5.500" ry="2.300" fill="#f6f6f6" stroke="#8a8a8a" stroke-width="1"/><path d="M2.500 8.200c0 1.300 2.500 2.300 5.500 2.300s5.500-1 5.500-2.300" fill="none" stroke="#8a8a8a" stroke-width="1"/></svg></div>
<span class="t" style="left:66.40px;top:182.00px;letter-spacing:-0.593px;">thiessen<span class="us">_</span>polygons.gpkg</span>
</div>
<div class="a" style="left:165px;top:219px;width:15px;height:187px;background:#e6e6e6;border-left:1px solid #c8c8c8"></div>
<div class="a" style="left:166px;top:219px;width:14px;height:13px;background:#fafafa;border-bottom:1px solid #c8c8c8"></div>
<div class="a" style="left:166px;top:392px;width:14px;height:14px;background:#fafafa;border-top:1px solid #c8c8c8"></div>
<div class="a" style="left:166px;top:246px;width:14px;height:27px;background:#f8f8f8;border-top:1px solid #c8c8c8;border-bottom:1px solid #c8c8c8"></div>
<svg class="a" style="left:169px;top:223px" width="9" height="5"><path d="M0 4.500h8l-4-4.500z" fill="#555"/></svg>
<svg class="a" style="left:169px;top:397px" width="9" height="5"><path d="M0 0h8l-4 4.500z" fill="#555"/></svg>
<div class="a" style="left:1px;top:406px;width:164px;height:14px;background:#e6e6e6;border-top:1px solid #c8c8c8"></div>
<div class="a" style="left:1px;top:407px;width:14px;height:13px;background:#fafafa;border-right:1px solid #c8c8c8"></div>
<div class="a" style="left:151px;top:407px;width:14px;height:13px;background:#fafafa;border-left:1px solid #c8c8c8"></div>
<div class="a" style="left:24px;top:407px;width:37px;height:13px;background:#f8f8f8;border-left:1px solid #c8c8c8;border-right:1px solid #c8c8c8"></div>
<svg class="a" style="left:5px;top:409px" width="5" height="9"><path d="M4.500 0v8l-4.500-4z" fill="#555"/></svg>
<svg class="a" style="left:156px;top:409px" width="5" height="9"><path d="M0 0v8l4.500-4z" fill="#555"/></svg>
<div class="a" style="left:165px;top:406px;width:14px;height:14px;background:#f0f0f0;border-left:1px solid #c8c8c8;border-top:1px solid #c8c8c8"></div>
<svg class="a" style="left:84px;top:422px" width="20" height="2"><rect x="0" y="0" width="1" height="1" fill="#a0a0a0"/><rect x="3" y="0" width="1" height="1" fill="#a0a0a0"/><rect x="6" y="0" width="1" height="1" fill="#a0a0a0"/><rect x="9" y="0" width="1" height="1" fill="#a0a0a0"/><rect x="12" y="0" width="1" height="1" fill="#a0a0a0"/><rect x="15" y="0" width="1" height="1" fill="#a0a0a0"/></svg>
<span class="t" style="left:4.90px;top:429.00px;letter-spacing:-0.539px;">Layers</span>
<svg class="a" style="left:153px;top:431px" width="26" height="12"><g fill="none" stroke="#6e6a66" stroke-width="1"><rect x="0.5" y="0.5" width="10" height="10" rx="2"/><rect x="14.500" y="0.5" width="10" height="10" rx="2"/><rect x="4.500" y="2.500" width="4" height="4" rx="1"/><rect x="2.500" y="4.500" width="4" height="4" rx="1" fill="#f0f0f0"/></g><path d="M17.300 3.300l4.400 4.400M21.700 3.300l-4.400 4.400" stroke="#4a4743" stroke-width="1.900"/></svg>
<div class="i16" style="left:9px;top:453px;"><svg width="16" height="16" viewBox="0 0 16 16"><path d="M1.500 9l4-5.500 6 3.500-3.500 6z" fill="#e3382e"/><path d="M2.500 6.500l3.500-4 5 2.500-3 4.500z" fill="#f4d328"/><path d="M3 5l3-3 4 1.500-2.500 3.500z" fill="#4f86d0"/><path d="M9.500 8L15 1.500" stroke="#c98a2e" stroke-width="1.800" stroke-linecap="round"/><path d="M5.500 9.500l3.500-3.300 3.500 3.300-2.800 4.500-4.500-2z" fill="#d9a55a" stroke="#a8783a" stroke-width=".7"/></svg></div>
<div class="i16" style="left:34px;top:453px;"><svg width="16" height="16" viewBox="0 0 16 16"><path d="M1.500 6v8.500h8" fill="none" stroke="#8a8a8a" stroke-width="1"/><rect x="3.500" y="4" width="9" height="9" fill="#f0f0f0" stroke="#8a8a8a" stroke-width="1"/><rect x="5.500" y="2.500" width="8" height="8.500" fill="none" stroke="#9a9a9a" stroke-width=".8"/><path d="M7.300 9V3.300a1.500 1.500 0 0 1 3 0V8" fill="none" stroke="#4f7fc0" stroke-width="1.100"/><circle cx="12.300" cy="12.300" r="3.100" fill="#5fa35f"/><path d="M10.500 12.300h3.600M12.300 10.500v3.600" stroke="#fff" stroke-width="1.300"/></svg></div>
<div class="i16" style="left:59px;top:453px;"><svg width="16" height="16" viewBox="0 0 16 16"><path d="M.5 7.500Q7 .5 14 7.500 7 13.500.5 7.500z" fill="#f4f4f4" stroke="#9a9a9a" stroke-width=".9"/><path d="M.8 6Q7-1.500 15 5.500" fill="none" stroke="#aaa" stroke-width=".8"/><circle cx="7.300" cy="7.200" r="3.500" fill="#6a98d4" stroke="#4870aa" stroke-width=".6"/><circle cx="7.300" cy="7.200" r="1.500" fill="#1f2f45"/><circle cx="6.300" cy="6.200" r=".8" fill="#fff"/><path d="M11.500 12.500h5l-2.500 3z" fill="#555"/></svg></div>
<div class="i16" style="left:84px;top:453px;"><svg width="16" height="16" viewBox="0 0 16 16"><path d="M1 1.500h14v1.800L9.700 9v5.500L6.300 13V9L1 3.300z" fill="#5b87c5" stroke="#456ea8" stroke-width=".7" stroke-linejoin="round"/><rect x="1.800" y="1.800" width="12.400" height="1.700" fill="#f2dc3c"/></svg></div>
<div class="i16" style="left:109px;top:453px;"><svg width="16" height="16" viewBox="0 0 16 16"><g opacity=".45"><text x="0" y="11" font-family="Liberation Serif,serif" font-size="14" fill="#777">ε</text><path d="M8 15v-3.500a2.500 2.500 0 0 1 5 0V15" fill="none" stroke="#999" stroke-width="1.300"/></g></svg></div>
<svg class="a" style="left:131.5px;top:459.5px" width="7" height="4"><path d="M0 0h7 l-3.5 4z" fill="#a8a8a8"/></svg>
<svg class="a" style="left:165.8px;top:457.5px" width="9" height="8"><path d="M.8.8l2.700 2.700-2.700 2.700M4.700.8l2.700 2.700-2.700 2.700" fill="none" stroke="#000" stroke-width="1.400"/></svg>
<div class="a" style="left:1px;top:477px;width:179px;height:216px;background:#fff;border-top:1px solid #a0a0a0;border-right:1px solid #a0a0a0;border-bottom:1px solid #a0a0a0"></div>
<div class="a" style="left:1px;top:478px;width:178px;height:200px;overflow:hidden">
<div class="a" style="left:8px;top:3px;width:13px;height:13px;background:#fff;border:1px solid #b4b4b4"></div>
<svg class="a" style="left:8px;top:3px" width="13" height="13"><path d="M2.700 6.200l3 4.300 4.100-7.600" fill="none" stroke="#000" stroke-width="1.900"/></svg>
<div class="a" style="left:28px;top:1px;width:16px;height:16px;background:#d2bec5;border:1px solid #7a7a7a"></div>
<span class="t" style="left:49.80px;top:2.00px;letter-spacing:-0.231px;font-weight:bold;text-decoration:underline;text-underline-offset:2px">hybas<span class="us">_</span>na<span class="us">_</span>lev06<span class="us">_</span>v1c</span>
<div class="a" style="left:8px;top:21px;width:13px;height:13px;background:#fff;border:1px solid #b4b4b4"></div>
<svg class="a" style="left:8px;top:21px" width="13" height="13"><path d="M2.700 6.200l3 4.300 4.100-7.600" fill="none" stroke="#000" stroke-width="1.900"/></svg>
<div class="a" style="left:28px;top:19px;width:16px;height:16px;background:#8b57a1;border:1px solid #7a7a7a"></div>
<span class="t" style="left:49.80px;top:20.00px;letter-spacing:-0.370px;font-weight:bold">thiessen<span class="us">_</span>polygon<span class="us">_</span>clipped</span>
<div class="a" style="left:8px;top:39px;width:13px;height:13px;background:#fff;border:1px solid #cfcfcf"></div>
<div class="a" style="left:28px;top:37px;width:16px;height:16px;background:#f2a3b3;border:1px solid #7a7a7a"></div>
<span class="t" style="left:49.80px;top:38.00px;letter-spacing:-0.070px;font-weight:bold;font-style:italic;color:#838383">cb<span class="us">_</span>2018<span class="us">_</span>us<span class="us">_</span>state<span class="us">_</span>500k</span>
<div class="a" style="left:8px;top:57px;width:13px;height:13px;background:#fff;border:1px solid #cfcfcf"></div>
<div class="a" style="left:28px;top:55px;width:16px;height:16px;background:#6f9f72;border:1px solid #7a7a7a"></div>
<span class="t" style="left:49.80px;top:56.00px;letter-spacing:-0.421px;font-weight:bold;font-style:italic;color:#838383">thiessen<span class="us">_</span>polygons</span>
<div class="a" style="left:8px;top:75px;width:13px;height:13px;background:#fff;border:1px solid #cfcfcf"></div>
<div class="a" style="left:33px;top:77px;width:6px;height:6px;border-radius:3px;background:#e3b934;border:1px solid #6a5a3a"></div>
<span class="t" style="left:49.80px;top:74.00px;letter-spacing:0.165px;font-weight:bold;font-style:italic;color:#838383">precipitation<span class="us">_</span>filtered</span>
<div class="a" style="left:8px;top:93px;width:13px;height:13px;background:#fff;border:1px solid #cfcfcf"></div>
<div class="a" style="left:33px;top:95px;width:6px;height:6px;border-radius:3px;background:#b07a5b;border:1px solid #6a5a3a"></div>
<span class="t" style="left:49.80px;top:92.00px;letter-spacing:0.123px;font-weight:bold;font-style:italic;color:#838383">florida<span class="us">_</span>2020<span class="us">_</span>07<span class="us">_</span>prcp</span>
</div>
<div class="a" style="left:1px;top:678px;width:179px;height:14px;background:#e6e6e6;border-top:1px solid #c8c8c8"></div>
<div class="a" style="left:1px;top:679px;width:14px;height:13px;background:#fafafa;border-right:1px solid #c8c8c8"></div>
<div class="a" style="left:166px;top:679px;width:14px;height:13px;background:#fafafa;border-left:1px solid #c8c8c8"></div>
<div class="a" style="left:27px;top:679px;width:128px;height:13px;background:#f8f8f8;border-left:1px solid #c8c8c8;border-right:1px solid #c8c8c8"></div>
<svg class="a" style="left:5px;top:681px" width="5" height="9"><path d="M4.500 0v8l-4.500-4z" fill="#555"/></svg>
<svg class="a" style="left:171px;top:681px" width="5" height="9"><path d="M0 0v8l4.500-4z" fill="#555"/></svg>
<div class="a" style="left:186px;top:168px;width:417px;height:525px;background:#fff;border:1px solid #a6a6a6;overflow:hidden"><svg class="a" style="left:0;top:0" width="415" height="523" viewBox="187 169 415 523"><path d="M186.0 168.0 458.8 169.0 462.0 174.0 465.0 179.8 467.5 185.0 468.8 189.9 465.5 192.5 462.5 194.9 460.0 198.0 458.8 201.1 457.7 206.0 457.5 211.2 458.5 217.0 460.0 223.7 462.3 231.0 465.0 238.8 468.0 246.0 471.3 253.9 475.0 262.5 478.9 271.4 482.0 279.0 485.1 286.5 487.6 293.0 490.1 299.1 492.6 306.5 495.2 314.1 497.7 320.5 500.2 326.7 502.7 332.0 505.2 336.7 507.7 341.5 510.2 346.0 514.0 352.6 516.6 359.0 519.0 365.1 522.2 372.5 525.3 380.2 527.9 387.5 530.3 395.2 532.4 403.0 534.1 410.3 534.7 418.0 534.8 425.4 534.4 435.0 533.6 445.4 532.7 453.0 531.6 460.5 530.4 469.0 529.1 478.1 527.9 487.0 526.6 495.7 525.3 503.0 524.0 510.7 523.2 520.0 522.8 530.0 522.6 540.0 521.0 546.6 519.7 552.5 518.0 558.3 517.2 564.1 515.6 581.5 513.1 591.5 508.9 600.6 504.0 609.8 498.1 619.7 491.5 629.7 484.9 638.0 476.5 646.3 466.6 654.6 460.0 660.0 453.7 664.6 441.2 672.2 428.6 678.5 411.0 686.0 396.0 691.0 388.0 693.5 392.0 690.2 396.0 688.3 410.0 683.6 427.0 676.2 440.0 670.0 452.0 662.2 464.0 653.0 474.0 645.0 479.5 639.5 480.5 634.0 478.0 628.5 472.0 627.5 466.0 627.0 460.0 628.5 454.0 628.0 449.0 631.5 446.0 632.0 438.0 631.0 431.0 632.0 426.0 630.0 421.0 630.7 416.0 634.5 411.0 635.8 403.0 637.2 396.0 637.0 393.1 638.3 389.0 635.5 385.6 632.0 382.5 626.5 380.6 622.0 380.8 618.0 381.8 614.4 384.5 611.0 386.9 608.2 387.3 605.0 386.9 601.9 383.8 595.5 380.6 589.3 377.5 584.5 374.3 579.3 370.5 573.5 366.8 568.0 363.0 565.0 359.2 561.7 355.5 556.5 351.7 551.7 346.5 548.8 341.7 545.4 336.5 541.3 331.6 537.9 326.5 536.0 321.6 535.3 317.5 538.5 314.0 540.4 310.0 533.5 306.5 526.6 303.5 522.0 301.5 520.0 299.0 514.0 297.5 508.0 296.5 503.2 295.2 495.5 294.0 488.1 291.5 480.5 288.9 473.0 285.0 467.5 281.4 463.0 277.5 460.0 273.9 458.0 268.9 459.3 263.0 461.5 256.3 461.8 251.0 458.0 246.3 453.0 242.8 447.0 240.0 440.4 238.0 433.0 236.2 425.4 235.5 420.0 235.0 415.3 232.0 409.5 228.7 404.0 225.0 398.5 221.1 392.7 218.0 387.5 214.9 382.7 211.7 376.5 208.6 370.1 204.8 364.0 201.0 357.6 197.3 352.5 193.5 347.5 190.0 343.0 186.0 339.0Z" fill="#b397ac" stroke="none"/><path d="M426.9 679.2L428.7 675.4M448.6 631.6L464.7 596.2M509.2 599.9L464.7 596.2M186.0 295.8L189.7 290.9M189.7 290.9L186.0 286.9M196.9 203.2L186.0 203.2M196.9 203.2L198.5 191.6M198.5 191.6L187.7 183.6M186.0 183.8L187.7 183.6M193.0 222.2L186.0 221.5M193.0 222.2L197.6 231.3M186.0 239.1L196.8 234.5M197.6 231.3L196.8 234.5M196.8 234.5L197.7 235.4M197.7 235.4L200.5 246.3M186.0 252.8L200.5 246.3M338.8 312.9L367.1 301.0M338.8 312.9L332.4 306.7M367.6 293.3L367.1 301.0M367.6 293.3L336.0 284.3M332.4 306.7L336.0 284.3M421.1 516.7L428.4 498.2M421.1 516.7L389.1 535.7M385.7 492.3L426.8 497.2M385.7 492.3L381.3 521.9M426.8 497.2L428.4 498.2M381.3 521.9L389.1 535.7M417.0 448.2L426.8 497.2M417.0 448.2L378.1 457.9M376.5 479.2L372.6 462.3M376.5 479.2L385.7 492.3M378.1 457.9L372.6 462.3M343.9 525.3L340.6 509.2M343.9 525.3L381.3 521.9M340.6 509.2L376.5 479.2M411.6 685.8L412.1 682.7M421.3 630.7L430.8 576.6M464.7 596.2L452.4 575.2M452.4 575.2L430.8 576.6M520.8 547.3L518.6 546.3M518.6 546.3L514.4 538.0M522.7 535.9L514.4 538.0M496.6 483.8L492.0 484.7M496.6 483.8L503.7 486.1M492.0 484.7L490.9 503.8M503.7 486.1L500.8 499.6M500.8 499.6L493.5 503.3M493.5 503.3L490.9 503.8M463.2 481.7L472.9 474.3M463.2 481.7L484.0 510.2M472.9 474.3L492.0 484.7M484.0 510.2L490.9 503.8M266.7 460.1L255.1 460.9M285.1 466.7L299.4 488.8M285.1 466.7L284.4 466.8M299.4 488.8L295.3 496.0M255.2 404.9L279.8 399.6M255.2 404.9L264.4 379.2M279.8 399.6L268.7 380.8M264.4 379.2L268.7 380.8M297.2 419.4L307.8 408.2M297.2 419.4L282.2 408.7M282.2 408.7L280.0 399.7M280.0 399.7L303.2 384.6M307.8 408.2L309.6 395.8M303.2 384.6L309.6 395.8M235.7 421.6L240.2 423.1M235.3 417.9L255.2 404.9M240.2 423.1L275.7 419.1M275.7 419.1L282.2 408.7M279.8 399.6L280.0 399.7M303.6 378.0L290.5 372.6M303.6 378.0L303.2 384.6M290.5 372.6L268.7 380.8M231.7 409.0L232.0 405.8M232.0 405.8L245.8 385.1M264.4 379.2L264.2 378.9M245.8 385.1L264.2 378.9M275.9 356.4L290.5 372.6M275.9 356.4L267.6 358.3M267.6 358.3L260.4 365.5M264.2 378.9L260.4 365.5M369.6 306.8L367.1 301.0M369.6 306.8L360.2 333.0M338.8 312.9L338.8 330.4M338.8 330.4L360.2 333.0M389.7 343.0L371.5 349.4M389.7 343.0L397.7 323.7M369.6 306.8L397.7 323.7M360.2 333.0L371.5 349.4M305.5 375.8L315.1 344.1M305.5 375.8L337.9 378.6M337.9 378.6L330.1 348.6M315.1 344.1L324.4 343.5M324.4 343.5L330.1 348.6M191.8 290.6L189.7 290.9M191.8 290.6L203.6 308.3M186.0 310.7L196.8 313.8M196.8 313.8L203.5 309.3M203.6 308.3L203.5 309.3M196.8 313.8L197.6 318.6M197.6 318.6L186.0 330.2M232.0 257.8L235.2 258.2M232.0 257.8L224.1 269.7M224.1 269.7L237.7 276.6M237.7 276.6L242.9 265.0M242.9 265.0L235.2 258.2M200.9 205.6L199.6 217.5M200.9 205.6L207.6 204.5M207.6 204.5L216.3 209.8M199.6 217.5L211.1 225.1M216.3 209.8L213.1 224.0M211.1 225.1L213.1 224.0M193.0 222.2L199.6 217.5M196.9 203.2L200.9 205.6M210.6 226.1L197.6 231.3M210.6 226.1L211.1 225.1M218.1 284.3L220.8 287.3M218.1 284.3L199.7 284.4M212.2 299.3L221.2 292.0M212.2 299.3L197.3 287.3M221.2 292.0L220.8 287.3M197.3 287.3L199.7 284.4M221.1 270.2L218.1 284.3M221.1 270.2L224.1 269.7M239.4 282.1L237.7 276.6M239.4 282.1L220.8 287.3M221.1 270.2L210.3 262.6M201.8 266.7L210.3 262.6M201.8 266.7L199.7 284.4M229.2 301.3L216.8 306.3M229.2 301.3L221.2 292.0M212.2 301.9L216.8 306.3M212.2 301.9L212.2 299.3M191.8 290.6L197.3 287.3M212.2 301.9L203.6 308.3M229.2 301.3L234.9 303.9M239.4 282.1L241.7 284.3M243.1 288.5L241.7 284.3M243.1 288.5L240.3 297.9M240.3 297.9L234.9 303.9M201.8 266.7L186.0 258.2M210.6 226.1L210.6 228.6M197.7 235.4L206.1 237.5M210.6 228.6L206.1 237.5M229.9 229.6L213.1 224.0M229.9 229.6L228.2 237.8M228.2 237.8L216.0 239.5M210.6 228.6L216.0 239.5M214.3 254.6L212.6 242.9M214.3 254.6L211.8 257.7M211.8 257.7L200.8 246.3M200.8 246.3L207.6 241.2M212.6 242.9L207.6 241.2M225.9 250.8L229.0 240.5M225.9 250.8L214.3 254.6M228.2 237.8L229.0 240.5M216.0 239.5L212.6 242.9M225.9 250.8L232.0 257.8M210.3 262.6L211.8 257.7M200.5 246.3L200.8 246.3M206.1 237.5L207.6 241.2M241.7 284.3L257.0 274.0M242.9 265.0L251.2 262.5M257.0 274.0L251.2 262.5M282.6 268.1L269.0 260.9M282.6 268.1L274.5 281.5M269.0 260.9L264.5 276.9M274.5 281.5L264.5 276.9M243.1 288.5L256.6 290.4M257.0 274.0L264.2 276.9M256.6 290.4L264.2 276.9M411.2 575.2L383.5 555.8M411.2 575.2L426.2 574.0M426.2 574.0L423.7 552.6M389.5 538.7L419.1 544.7M389.5 538.7L383.5 555.8M419.1 544.7L423.7 552.6M365.9 567.3L383.5 555.8M380.7 620.0L411.2 575.2M430.8 576.6L426.2 574.0M452.4 575.2L456.5 568.6M456.5 568.6L455.4 544.8M455.4 544.8L446.4 540.6M446.4 540.6L423.7 552.6M421.1 516.7L425.3 533.4M389.1 535.7L389.5 538.7M425.3 533.4L419.1 544.7M343.9 525.3L343.0 527.1M343.0 527.1L339.3 543.5M425.3 533.4L441.6 535.2M441.6 535.2L446.4 540.6M455.3 483.0L437.7 445.5M455.3 483.0L463.2 481.7M472.9 474.3L477.3 464.6M437.7 445.5L475.3 441.2M477.3 464.6L475.3 441.2M517.9 559.1L510.0 553.1M512.2 593.5L511.9 593.1M511.9 593.1L504.9 555.1M504.9 555.1L510.0 553.1M518.6 546.3L510.7 547.8M510.0 553.1L510.7 547.8M490.4 518.1L496.2 520.9M490.4 518.1L485.2 535.5M491.6 539.2L485.2 535.5M491.6 539.2L497.9 528.4M497.9 528.4L496.2 520.9M449.5 415.0L445.3 403.3M449.5 415.0L436.9 445.0M415.0 416.2L442.3 402.9M415.0 416.2L421.2 444.5M442.3 402.9L445.3 403.3M421.2 444.5L436.9 445.0M437.7 445.5L436.9 445.0M472.6 425.5L449.5 415.0M472.6 425.5L477.2 438.4M475.3 441.2L477.2 438.4M416.9 371.1L415.8 370.6M416.9 371.1L442.3 402.9M415.8 370.6L412.9 373.7M412.9 414.4L412.9 373.7M412.9 414.4L415.0 416.2M455.3 483.0L438.7 498.2M438.7 498.2L428.4 498.2M417.0 448.2L421.2 444.5M328.2 399.9L328.2 418.7M328.2 399.9L345.8 393.8M352.4 409.2L345.8 393.8M352.4 409.2L341.7 421.1M341.7 421.1L328.2 418.7M328.2 399.9L309.6 395.8M307.8 408.2L321.8 422.2M321.8 422.2L328.2 418.7M286.4 440.7L290.9 429.0M286.4 440.7L271.9 445.1M271.9 445.1L269.3 440.5M269.3 440.5L280.8 428.1M280.8 428.1L290.9 429.0M296.8 426.6L307.0 436.7M296.8 426.6L290.9 429.0M294.7 449.0L286.4 440.7M294.7 449.0L307.0 436.7M290.6 463.8L285.1 466.7M290.6 463.8L294.7 449.0M273.5 458.1L271.9 445.1M240.2 423.1L269.3 440.5M275.7 419.1L280.8 428.1M296.8 426.6L297.2 419.4M299.2 511.3L320.2 498.2M299.2 511.3L300.4 517.3M311.2 521.0L330.0 502.2M311.2 521.0L303.9 522.7M320.2 498.2L329.9 502.1M329.9 502.1L330.0 502.2M299.4 488.8L312.1 485.6M298.0 509.8L299.2 511.3M312.1 485.6L320.2 498.2M343.0 527.1L311.2 521.0M340.6 509.2L334.2 503.9M334.2 503.9L330.0 502.2M260.3 306.8L244.0 323.1M260.3 306.8L240.3 297.9M234.9 303.9L235.6 315.3M235.6 315.3L244.0 323.1M249.0 333.9L247.4 338.2M249.0 333.9L246.4 331.1M221.5 349.5L227.2 355.1M221.5 349.5L225.1 337.6M225.1 337.6L246.4 331.1M227.2 355.1L247.4 338.2M249.0 333.9L254.0 334.7M254.0 334.7L267.6 358.3M260.4 365.5L247.4 363.9M247.4 338.2L247.4 363.9M245.8 385.1L245.8 364.6M245.8 364.6L247.4 363.9M231.8 405.3L231.8 364.6M231.8 405.3L213.2 372.7M213.2 372.7L230.8 363.9M231.8 364.6L230.8 363.9M232.0 405.8L231.8 405.3M245.8 364.6L231.8 364.6M209.7 372.5L210.2 372.3M210.2 372.3L213.2 372.7M227.2 355.1L230.8 363.9M221.5 349.5L213.0 349.5M210.2 372.3L207.7 352.0M213.0 349.5L207.7 352.0M198.0 353.5L204.0 351.5M186.0 332.6L198.0 333.6M198.0 333.6L204.0 351.5M204.0 351.5L207.7 352.0M275.9 356.4L280.6 348.1M254.0 334.7L274.5 327.8M274.5 327.8L280.6 348.1M303.6 378.0L305.5 375.8M315.1 344.1L315.0 344.0M280.6 348.1L315.0 344.0M356.9 459.1L347.5 464.2M356.9 459.1L343.5 444.9M347.5 464.2L329.9 469.5M343.5 444.9L317.0 437.8M329.9 469.5L317.9 469.5M315.4 438.6L317.0 437.8M315.4 438.6L313.3 465.2M313.3 465.2L317.9 469.5M372.6 462.3L368.1 460.6M368.1 460.6L356.9 459.1M334.2 503.9L347.5 464.2M368.1 460.6L358.3 411.7M358.3 411.7L352.4 409.2M341.7 421.1L343.5 444.9M329.9 502.1L329.9 469.5M321.8 422.2L317.0 437.8M312.1 485.6L317.9 469.5M307.0 436.7L315.4 438.6M290.6 463.8L313.3 465.2M368.2 355.8L352.4 357.8M368.2 355.8L372.2 377.6M352.4 357.8L339.9 379.8M372.2 377.6L346.7 390.3M339.9 379.8L346.7 390.3M338.8 330.4L324.4 343.5M371.5 349.4L368.2 355.8M330.1 348.6L352.4 357.8M337.9 378.6L339.9 379.8M345.8 393.8L346.7 390.3M391.0 382.5L393.8 412.3M391.0 382.5L376.2 380.4M376.2 380.4L373.4 409.6M373.4 409.6L385.2 416.5M385.2 416.5L393.8 412.3M412.9 414.4L393.8 412.3M412.9 373.7L391.0 382.5M389.7 343.0L415.6 368.9M415.6 368.9L415.8 370.6M372.2 377.6L376.2 380.4M358.3 411.7L373.4 409.6M378.1 457.9L385.2 416.5M198.5 191.6L205.9 186.2M212.8 190.6L212.2 189.0M212.8 190.6L207.6 204.5M205.9 186.2L212.2 189.0M269.0 183.8L249.3 187.8M269.0 183.8L262.7 168.3M244.4 183.4L249.3 187.8M244.4 183.4L243.4 168.2M231.6 189.8L244.4 183.4M231.6 189.8L221.2 176.0M221.2 176.0L221.2 168.1M197.6 318.6L203.8 323.3M198.0 333.6L198.8 333.2M203.8 323.3L198.8 333.2M213.0 349.5L209.6 334.8M209.6 334.8L198.8 333.2M229.0 240.5L242.0 246.1M235.2 258.2L242.6 247.7M242.0 246.1L242.6 247.7M269.0 183.8L270.5 184.8M249.3 187.8L250.2 199.7M270.5 184.8L271.5 198.4M271.5 198.4L268.3 201.9M268.3 201.9L250.2 199.7M299.8 257.6L295.4 247.3M299.8 257.6L285.9 264.8M295.4 247.3L294.1 246.4M285.9 264.8L280.2 252.0M294.1 246.4L280.2 252.0M285.9 264.8L284.2 267.4M284.2 267.4L282.6 268.1M269.0 260.9L269.0 260.9M269.0 260.9L277.5 251.2M280.2 252.0L277.5 251.2M332.4 306.7L313.1 308.1M331.9 278.7L310.4 287.8M331.9 278.7L336.0 284.3M310.4 287.8L313.1 308.1M305.6 260.9L318.6 257.7M305.6 260.9L301.9 283.3M331.9 278.7L332.9 266.6M332.9 266.6L318.6 257.7M310.4 287.8L301.9 283.3M315.0 344.0L310.4 335.1M310.4 335.1L309.3 313.0M313.1 308.1L309.3 313.0M299.8 257.6L305.6 260.9M284.2 267.4L299.8 283.7M301.9 283.3L299.8 283.7M274.5 327.8L276.0 325.5M310.4 335.1L278.4 324.9M276.0 325.5L278.4 324.9M457.6 524.7L441.6 504.0M457.6 524.7L473.7 519.7M475.7 516.1L473.7 519.7M475.7 516.1L440.6 501.1M440.6 501.1L441.6 504.0M455.6 544.6L457.6 524.7M455.6 544.6L455.4 544.8M441.6 535.2L441.6 504.0M473.7 537.6L473.7 519.7M473.7 537.6L455.6 544.6M490.4 518.1L483.9 510.8M483.9 510.8L475.7 516.1M473.7 537.6L474.5 537.9M485.2 535.5L474.5 537.9M438.7 498.2L440.6 501.1M483.9 510.8L484.0 510.2M496.6 483.8L501.2 468.6M477.3 464.6L496.9 464.6M501.2 468.6L496.9 464.6M499.1 552.4L498.3 544.7M499.1 552.4L488.6 565.7M482.6 552.1L493.9 543.0M482.6 552.1L481.6 562.7M493.9 543.0L498.3 544.7M481.6 562.7L488.6 565.7M499.7 544.0L498.3 544.7M499.7 544.0L506.3 543.3M506.3 543.3L510.7 547.8M504.9 555.1L499.1 552.4M511.9 593.1L488.6 565.7M491.6 539.2L493.9 543.0M474.5 537.9L482.6 552.1M456.5 568.6L481.6 562.7M499.7 544.0L502.2 532.6M497.9 528.4L502.2 532.6M500.8 499.6L505.7 500.2M493.5 503.3L505.2 509.3M505.2 509.3L511.2 506.2M511.2 506.2L511.3 505.9M505.7 500.2L511.3 505.9M505.2 509.3L503.5 517.7M514.0 514.6L511.2 506.2M514.0 514.6L513.2 516.3M503.5 517.7L513.2 516.3M496.2 520.9L499.5 520.4M503.5 517.7L499.5 520.4M523.9 511.9L514.0 514.6M523.0 524.3L515.0 521.1M513.2 516.3L515.0 521.1M515.2 530.8L511.1 526.7M515.2 530.8L513.3 537.4M506.8 532.6L509.7 527.0M506.8 532.6L510.7 537.8M511.1 526.7L509.7 527.0M510.7 537.8L513.3 537.4M522.8 528.9L515.2 530.8M515.0 521.1L511.1 526.7M514.4 538.0L513.3 537.4M502.2 532.6L506.8 532.6M499.5 520.4L509.7 527.0M506.3 543.3L510.7 537.8M472.6 425.5L477.8 406.1M477.8 406.1L470.8 398.2M445.3 403.3L457.1 393.0M457.1 393.0L470.8 398.2M416.9 371.1L448.7 371.1M448.7 371.1L457.1 380.5M457.1 393.0L457.1 380.5M477.8 406.1L491.8 403.7M488.3 382.1L491.9 385.7M488.3 382.1L482.7 383.3M491.9 385.7L493.8 395.8M491.8 403.7L493.8 395.8M470.8 398.2L482.7 383.3M415.6 368.9L433.4 336.5M397.7 323.7L408.7 317.7M408.7 317.7L433.4 336.5M226.4 195.8L229.2 195.0M226.4 195.8L217.3 209.5M229.2 195.0L236.5 204.7M217.3 209.5L233.4 215.6M233.4 215.6L236.5 204.7M212.8 190.6L226.4 195.8M231.6 189.8L229.2 195.0M221.2 176.0L212.2 189.0M216.3 209.8L217.3 209.5M249.3 201.2L250.2 199.7M249.3 201.2L236.5 204.7M233.4 215.6L233.4 215.6M233.4 215.6L231.5 228.2M231.5 228.2L229.9 229.6M209.1 315.1L216.4 315.6M209.1 315.1L204.4 323.0M204.4 323.0L216.2 328.9M216.4 315.6L221.5 320.0M221.5 320.0L218.5 328.2M218.5 328.2L216.2 328.9M216.8 306.3L216.4 315.6M203.5 309.3L209.1 315.1M203.8 323.3L204.4 323.0M209.6 334.8L216.2 328.9M235.6 315.3L221.5 320.0M225.1 337.6L218.5 328.2M246.4 331.1L244.0 323.1M251.2 262.5L254.5 256.9M269.0 260.9L260.9 256.4M264.5 276.9L264.2 276.9M254.5 256.9L260.9 256.4M242.6 247.7L253.3 254.7M254.5 256.9L253.3 254.7M273.8 243.8L277.5 251.2M273.8 243.8L268.1 242.0M260.9 256.4L268.1 242.0M271.3 184.5L289.0 186.7M271.3 184.5L284.6 168.4M290.5 168.4L293.1 181.3M293.1 181.3L289.0 186.7M270.5 184.8L271.3 184.5M308.9 168.5L307.1 184.8M307.1 184.8L293.1 181.3M250.7 207.3L260.9 214.7M250.7 207.3L246.9 216.5M260.9 214.7L250.7 221.3M246.9 216.5L250.7 221.3M268.3 201.9L266.5 214.7M266.5 214.7L260.9 214.7M249.3 201.2L250.7 207.3M233.4 215.6L246.9 216.5M291.4 240.4L280.2 238.8M291.4 240.4L294.1 227.1M294.1 227.1L278.7 229.0M280.2 238.8L278.7 229.0M294.1 246.4L291.4 240.4M273.8 243.8L280.2 238.8M271.5 198.4L284.1 202.7M266.5 214.7L270.6 220.9M270.6 220.9L283.5 214.8M283.5 214.8L284.1 202.7M289.0 186.7L291.8 199.2M291.8 199.2L284.1 202.7M332.9 266.6L338.0 263.1M318.6 257.7L318.6 237.3M318.6 237.3L338.0 243.8M338.0 263.1L338.0 243.8M370.9 288.4L367.6 293.3M370.9 288.4L365.3 259.1M365.3 259.1L364.6 258.6M338.0 263.1L364.6 258.6M260.3 306.8L260.6 306.7M276.0 325.5L271.4 315.4M260.6 306.7L271.4 315.4M256.6 290.4L263.0 298.4M260.6 306.7L263.0 298.4M399.0 168.8L404.9 182.9M399.8 199.5L404.9 182.9M399.8 199.5L382.4 187.3M382.4 187.3L387.5 168.7M477.2 438.4L493.3 435.6M496.9 464.6L503.2 453.6M493.3 435.6L503.2 453.6M519.3 501.5L517.5 501.8M519.3 501.5L520.1 491.6M517.5 501.8L510.7 494.0M520.1 491.6L510.8 487.8M510.8 487.8L510.7 494.0M525.1 504.4L519.3 501.5M511.3 505.9L517.5 501.8M527.8 487.7L520.1 491.6M505.7 500.2L510.7 494.0M528.8 480.4L517.2 479.0M509.2 485.4L510.8 487.8M509.2 485.4L510.2 483.6M510.2 483.6L517.2 479.0M503.7 486.1L509.2 485.4M511.2 385.1L511.4 387.3M511.2 385.1L525.6 381.1M530.4 395.7L511.4 387.3M472.4 367.5L458.5 379.7M472.4 367.5L480.0 381.5M480.0 381.5L458.5 379.7M448.7 371.1L453.4 355.8M453.4 355.8L469.3 359.2M473.6 365.4L469.3 359.2M473.6 365.4L472.4 367.5M457.1 380.5L458.5 379.7M482.7 383.3L480.0 381.5M473.6 365.4L478.3 364.6M488.3 382.1L490.5 369.2M490.5 369.2L489.0 368.0M478.3 364.6L489.0 368.0M502.5 355.3L502.2 357.8M502.5 355.3L516.7 359.2M519.0 365.1L507.3 365.2M507.3 365.2L502.2 357.8M444.0 260.7L412.8 286.7M444.0 260.7L440.8 252.9M440.8 252.9L407.3 267.3M407.3 267.3L409.0 282.8M409.0 282.8L412.8 286.7M370.9 288.4L409.0 282.8M365.3 259.1L399.0 249.8M399.0 249.8L400.9 252.1M400.9 252.1L407.3 267.3M415.7 291.7L408.7 317.7M415.7 291.7L412.8 286.7M415.7 291.7L418.4 292.0M433.4 336.5L445.3 334.3M446.2 309.8L418.4 292.0M446.2 309.8L448.0 325.1M448.0 325.1L445.3 334.3M448.6 337.5L453.4 355.8M448.6 337.5L447.1 335.6M447.1 335.6L445.3 334.3M444.0 260.7L451.5 267.6M440.8 252.9L440.8 247.9M451.5 267.6L470.9 253.1M466.6 242.7L440.8 247.9M196.1 168.0L194.2 179.4M208.8 168.1L203.7 181.5M194.2 179.4L203.7 181.5M187.7 183.6L194.2 179.4M205.9 186.2L203.7 181.5M256.0 238.7L267.9 241.7M256.0 238.7L250.8 232.9M250.8 232.9L250.7 232.0M270.2 223.6L250.7 232.0M270.2 223.6L267.9 241.7M250.7 232.0L250.7 232.0M253.3 254.7L256.0 238.7M268.1 242.0L267.9 241.7M242.0 246.1L250.8 232.9M231.5 228.2L250.7 232.0M270.5 223.3L270.6 220.9M270.5 223.3L270.2 223.6M250.7 221.3L250.7 232.0M270.5 223.3L278.7 229.0M294.1 227.1L296.8 223.5M283.5 214.8L296.7 223.0M296.8 223.5L296.7 223.0M295.4 247.3L313.9 235.0M296.8 223.5L313.9 235.0M318.6 237.3L318.0 235.5M313.9 235.0L318.0 235.5M279.9 301.3L277.1 290.9M279.9 301.3L293.1 309.0M293.5 287.7L293.7 308.9M293.5 287.7L278.1 288.9M278.1 288.9L277.1 290.9M293.7 308.9L293.1 309.0M271.4 315.4L279.9 301.3M263.0 298.4L277.1 290.9M278.4 324.9L293.1 309.0M309.3 313.0L293.7 308.9M299.8 283.7L293.5 287.7M274.5 281.5L278.1 288.9M351.5 168.6L350.5 174.3M369.6 168.7L365.1 188.9M350.5 174.3L365.1 188.9M382.4 187.3L366.0 192.3M366.0 192.3L365.1 188.9M399.8 199.5L400.5 201.9M400.5 201.9L383.4 213.8M363.7 197.2L366.0 192.3M363.7 197.2L363.8 198.1M363.8 198.1L383.4 213.8M510.2 483.6L506.1 471.3M517.2 479.0L515.5 469.5M515.5 469.5L506.1 471.3M529.8 473.2L517.1 466.8M515.5 469.5L517.1 466.8M501.2 468.6L502.1 468.8M502.1 468.8L506.1 471.3M517.1 466.8L517.1 464.9M502.1 468.8L513.0 460.4M513.0 460.4L517.1 464.9M530.7 466.6L524.6 460.4M517.1 464.9L524.6 460.4M532.6 453.4L524.9 458.8M524.6 460.4L524.9 458.8M491.8 403.7L494.9 406.3M493.8 395.8L510.1 391.5M510.8 394.3L510.1 391.5M510.8 394.3L505.5 403.6M494.9 406.3L505.5 403.6M493.3 435.6L493.9 435.2M493.9 435.2L496.5 429.9M496.5 429.9L496.7 410.9M494.9 406.3L496.7 410.9M505.4 369.6L500.3 371.9M505.4 369.6L511.9 376.2M500.3 371.9L504.9 382.1M511.9 376.2L510.0 383.4M510.0 383.4L504.9 382.1M490.7 369.2L502.2 357.8M490.7 369.2L500.3 371.9M507.3 365.2L505.4 369.6M520.2 367.8L511.9 376.2M491.9 385.7L504.9 382.1M490.5 369.2L490.7 369.2M511.2 385.1L510.0 383.4M511.4 387.3L510.1 391.5M466.0 192.1L456.2 191.0M456.2 191.0L459.0 169.3M456.2 191.0L450.6 195.0M450.6 195.0L437.6 168.9M404.9 182.9L427.2 180.4M427.2 180.4L432.6 168.9M460.8 226.3L441.1 232.9M440.8 247.9L438.9 244.5M441.1 232.9L438.9 244.5M400.9 252.1L434.2 243.8M434.2 243.8L438.9 244.5M451.5 267.6L455.0 280.4M478.3 270.0L455.0 280.4M446.2 309.8L454.6 300.6M418.4 292.0L455.0 280.8M454.6 300.6L455.8 282.4M455.8 282.4L455.0 280.8M455.0 280.8L455.0 280.4M533.6 445.7L530.0 444.8M524.9 458.8L520.0 452.3M520.0 452.3L530.0 444.8M496.7 410.9L511.2 414.6M505.5 403.6L512.4 407.2M511.2 414.6L512.4 407.2M496.5 429.9L509.5 422.4M509.5 422.4L511.6 415.4M511.2 414.6L511.6 415.4M510.8 394.3L520.3 402.8M512.4 407.2L520.3 402.8M478.3 364.6L482.6 351.5M489.0 368.0L489.8 353.0M482.6 351.5L489.5 352.6M489.8 353.0L489.5 352.6M502.5 355.3L502.4 354.9M489.8 353.0L502.4 354.9M513.2 351.1L502.7 354.0M502.7 354.0L502.4 354.9M469.3 359.2L473.2 345.7M482.6 351.5L478.2 346.0M478.2 346.0L473.2 345.7M448.6 337.5L471.8 344.5M471.8 344.5L473.2 345.7M447.1 335.6L472.8 328.2M472.8 328.2L475.2 331.7M471.8 344.5L475.2 331.7M457.6 211.8L451.5 208.3M441.1 232.9L436.0 221.8M436.0 221.8L451.5 208.3M450.6 195.0L448.1 199.7M427.6 187.6L438.2 198.1M427.6 187.6L427.2 180.4M438.2 198.1L448.1 199.7M451.5 208.3L448.1 199.7M483.2 282.0L482.3 283.2M455.8 282.4L467.3 288.0M467.3 288.0L482.3 283.2M490.4 300.0L481.7 290.6M482.3 283.2L481.7 290.6M495.1 313.9L488.3 316.2M488.3 316.2L479.7 313.9M490.5 300.4L483.0 302.6M483.0 302.6L478.9 313.2M479.7 313.9L478.9 313.2M477.4 299.8L473.2 301.9M477.4 299.8L476.8 295.0M468.4 289.7L476.8 295.0M468.4 289.7L469.2 301.0M469.2 301.0L473.2 301.9M483.0 302.6L477.4 299.8M478.9 313.2L474.1 312.8M474.1 312.8L473.2 301.9M481.7 290.6L476.8 295.0M467.3 288.0L468.4 289.7M454.6 300.6L463.4 304.1M463.4 304.1L469.2 301.0M359.7 204.3L359.7 232.1M359.7 204.3L338.1 211.5M338.1 211.5L343.0 226.9M343.0 226.9L348.0 231.0M348.0 231.0L359.2 232.8M359.2 232.8L359.7 232.1M363.8 198.1L359.7 204.3M383.4 213.8L381.4 224.9M381.4 224.9L359.7 232.1M338.0 243.8L348.0 231.0M318.0 235.5L320.3 232.0M320.3 232.0L343.0 226.9M364.6 258.6L359.2 232.8M399.0 249.8L399.0 242.5M399.0 242.5L381.4 224.9M296.7 223.0L306.2 206.8M320.3 232.0L320.3 216.7M320.3 216.7L306.2 206.8M291.8 199.2L305.6 203.5M306.2 206.8L305.6 203.5M307.1 184.8L307.2 184.8M307.2 184.8L307.2 201.2M305.6 203.5L307.2 201.2M326.6 168.5L327.1 170.6M307.2 184.8L321.0 182.9M327.1 170.6L321.0 182.9M350.5 174.3L339.6 182.5M327.1 170.6L339.6 182.5M505.4 437.1L514.7 443.5M505.4 437.1L518.8 430.2M514.7 443.5L523.4 439.1M523.4 439.1L523.1 435.4M523.1 435.4L518.8 430.2M530.0 444.8L523.4 439.1M523.1 435.4L534.7 427.5M514.7 444.0L519.3 452.2M514.7 444.0L507.3 454.3M519.3 452.2L512.2 457.4M507.3 454.3L512.2 457.4M520.0 452.3L519.3 452.2M514.7 443.5L514.7 444.0M493.9 435.2L505.4 437.1M503.2 453.6L507.3 454.3M513.0 460.4L512.2 457.4M511.6 415.4L516.8 415.7M520.3 402.8L527.3 403.5M516.8 415.7L527.3 403.5M531.8 400.9L527.4 403.5M527.4 403.5L527.3 403.5M502.7 354.0L502.5 348.2M507.2 340.5L502.5 348.2M489.5 352.6L492.6 343.5M502.5 348.2L492.6 343.5M427.3 211.2L430.1 219.3M427.3 211.2L414.5 202.6M430.1 219.3L414.9 228.4M404.0 203.9L414.5 202.6M404.0 203.9L409.8 229.1M409.8 229.1L414.9 228.4M436.0 221.8L430.1 219.3M438.2 198.1L427.3 211.2M427.6 187.6L414.5 202.6M434.2 243.8L414.9 228.4M400.5 201.9L404.0 203.9M399.0 242.5L409.8 229.1M471.1 321.4L473.5 313.0M471.1 321.4L458.7 319.6M473.5 313.0L466.8 311.7M458.7 319.6L466.8 311.7M479.7 313.9L478.7 323.9M478.7 323.9L473.2 326.9M473.2 326.9L471.1 321.4M474.1 312.8L473.5 313.0M448.0 325.1L458.7 319.6M472.8 328.2L473.2 326.9M463.4 304.1L466.8 311.7M321.3 196.9L334.2 209.8M321.3 196.9L324.7 191.5M324.7 191.5L339.6 189.6M335.7 209.8L334.2 209.8M335.7 209.8L339.9 190.0M339.9 190.0L339.6 189.6M320.3 216.7L334.2 209.8M307.2 201.2L321.3 196.9M321.0 182.9L324.7 191.5M339.6 182.5L339.6 189.6M338.1 211.5L335.7 209.8M363.7 197.2L339.9 190.0M520.6 419.9L526.2 417.7M520.6 419.9L518.7 426.9M518.7 426.9L518.8 427.1M518.8 427.1L532.4 424.0M532.4 424.0L526.2 417.7M516.8 415.7L520.6 419.9M527.4 403.5L526.2 417.7M509.5 422.4L518.7 426.9M518.8 430.2L518.8 427.1M534.8 425.1L532.4 424.0M492.6 343.5L491.0 339.7M491.0 339.7L502.6 331.9M478.2 346.0L486.2 338.1M491.0 339.7L486.2 338.1M482.6 333.6L486.0 337.5M482.6 333.6L483.9 325.5M486.0 337.5L490.7 327.9M490.7 327.9L485.6 324.5M485.6 324.5L483.9 325.5M475.2 331.7L482.6 333.6M486.2 338.1L486.0 337.5M478.7 323.9L483.9 325.5M499.9 326.0L490.7 327.9M488.3 316.2L485.6 324.5" fill="none" stroke="#8b7e87" stroke-width="1"/><path d="M186.0 252.6 190.0 253.0 193.0 255.0 196.0 256.4 197.6 259.0 198.6 262.7 197.5 266.0 197.3 268.9 199.0 271.5 201.0 274.0 203.0 270.5 204.8 266.4 205.6 263.5 207.3 261.4 209.5 262.0 211.1 263.9 213.7 264.6 216.1 266.4 217.2 268.8 217.4 271.4 216.6 274.7 214.9 277.7 213.2 280.0 211.1 281.5 209.2 283.0 207.3 284.0 205.5 286.6 203.6 289.0 201.0 291.6 198.6 294.0 197.2 296.6 196.0 299.1 194.7 302.3 193.5 305.4 190.0 306.2 186.0 306.6Z" fill="#fff" stroke="none"/><path d="M235.7 420.4 238.2 417.9 242.5 417.2 247.2 416.3 251.5 413.8 250.8 409.0 250.5 404.0 249.3 402.8 248.2 398.5 247.5 394.0 254.0 392.0 261.3 392.2 259.0 395.5 257.6 399.0 259.5 402.0 261.3 405.3 261.8 410.0 261.9 413.8 261.0 418.0 260.3 422.0 259.1 426.9 258.7 432.7 261.9 436.7 262.5 441.5 262.7 446.6 265.5 449.0 268.5 450.7 269.3 453.1 266.0 455.2 262.7 456.4 258.5 456.8 254.6 456.4 251.0 455.0 248.0 453.1 246.9 450.0 246.4 446.6 244.0 442.5 241.5 438.4 239.3 432.0 237.4 426.1 233.2 426.0 233.2 420.3Z" fill="#fff" stroke="none"/><path d="M513.0 553.3 509.5 556.0 506.4 558.3 505.0 561.5 504.0 564.9 501.0 568.0 498.1 570.7 497.6 574.5 497.3 578.2 495.8 581.0 494.8 583.2 494.0 586.5 493.5 589.8 494.0 592.5 494.8 594.8 496.3 598.0 498.1 601.5 500.0 602.6 502.5 600.5 505.5 596.0 508.5 590.5 511.3 584.0 513.5 579.0 515.6 581.5 522.0 582.0 522.0 566.0 517.2 564.1 516.0 563.3 514.8 556.6Z" fill="#fff" stroke="none"/><path d="M488.5 613.5 490.0 610.5 493.0 608.5 496.0 606.0 499.0 603.5 501.5 603.8 500.5 606.5 498.0 609.5 495.0 612.0 492.0 614.0 489.5 614.8Z" fill="#fff" stroke="none"/><path d="M483.5 621.0 485.0 618.0 488.5 616.5 492.0 617.5 493.3 620.5 492.0 624.0 488.5 626.3 485.0 625.5Z" fill="#fff" stroke="none"/><path d="M246.4 425.3 250.5 426.5 254.6 428.6 256.6 432.5 257.8 436.7 257.6 441.0 257.0 444.9 258.0 448.5 259.5 451.5 256.0 451.0 252.9 449.8 251.0 445.0 249.6 440.0 247.8 436.0 246.4 431.8Z" fill="#b397ac" stroke="#2c2230" stroke-width=".7"/><path d="M431.5 169.6 442.0 169.6 441.5 178.0 441.8 189.0 442.5 197.0 444.5 204.0 447.5 212.0 452.0 222.0 457.0 233.0 462.0 244.0 467.0 254.0 472.0 264.0 477.0 274.0 481.5 283.0 485.0 291.0 483.2 291.0 479.0 283.0 474.5 274.0 469.5 264.0 464.5 254.0 459.5 244.0 454.5 234.0 449.5 224.0 445.0 214.0 441.0 204.0 438.0 195.0 435.0 184.0Z" fill="#8b57a1" stroke="#2c2230" stroke-width="0.6"/><path d="M458.5 175.0 461.0 178.0 459.5 186.0 457.0 193.0 455.5 201.0 456.0 210.0 457.2 218.0 456.0 224.0 453.5 219.0 451.0 211.0 449.8 204.0 450.5 196.0 452.5 188.0 455.0 181.0Z" fill="#8b57a1" stroke="#2c2230" stroke-width="0.6"/><path d="M488.8 300.7 490.2 300.2 493.0 309.0 497.0 319.0 501.5 329.0 506.0 339.0 510.5 349.0 514.0 357.0 516.4 363.0 514.6 363.4 512.0 357.5 508.5 349.5 504.0 340.0 499.5 330.0 495.0 320.0 491.0 310.0Z" fill="#8b57a1" stroke="#2c2230" stroke-width="0.6"/><path d="M187.0 329.0 190.5 329.5 193.0 333.0 194.3 337.5 192.0 339.5 189.0 337.0 187.0 334.0Z" fill="#8b57a1" stroke="#2c2230" stroke-width="0.6"/><path d="M269.3 450.5 277.5 447.3 282.9 439.8 286.2 434.0 291.0 430.0 295.8 426.8 295.2 425.4 290.2 428.6 285.2 432.8 281.8 438.6 277.0 445.6 269.0 448.8Z" fill="#8b57a1" stroke="#2c2230" stroke-width="0.6"/><path d="M396.0 610.0 400.0 609.0 403.0 611.5 406.0 609.5 409.0 612.0 411.0 616.0 414.5 619.0 416.0 623.0 412.0 624.5 408.0 623.0 404.5 619.5 401.0 616.5 398.0 614.0Z" fill="#8b57a1" stroke="#2c2230" stroke-width="0.6"/><path d="M516.0 533.5 519.5 535.0 520.8 541.0 518.5 545.5 514.5 546.5 513.5 542.0 514.5 537.0Z" fill="#8b57a1" stroke="#2c2230" stroke-width="0.6"/><path d="M481.2 619.0 483.6 618.6 484.8 620.8 483.4 622.8 481.2 622.0Z" fill="#8b57a1" stroke="#2c2230" stroke-width="0.6"/><path d="M350.6 539.0 354.0 541.0 357.0 544.5 355.5 545.0 352.0 542.5Z" fill="#8b57a1" stroke="#2c2230" stroke-width="0.6"/><path d="M316.0 692.5 322.0 689.0 328.0 685.5 335.0 681.5 341.0 678.5 345.0 680.0 349.0 683.0 353.0 687.0 356.5 692.5Z" fill="#8b57a1" stroke="#2c2230" stroke-width="0.6"/><path d="M233.5 409.0 236.0 411.0 241.0 414.0 247.0 413.5 246.5 415.5 241.0 416.5 236.0 414.5Z" fill="#8b57a1" stroke="#2c2230" stroke-width="0.6"/><clipPath id="pclip"><path d="M431.5 169.6 442.0 169.6 441.5 178.0 441.8 189.0 442.5 197.0 444.5 204.0 447.5 212.0 452.0 222.0 457.0 233.0 462.0 244.0 467.0 254.0 472.0 264.0 477.0 274.0 481.5 283.0 485.0 291.0 483.2 291.0 479.0 283.0 474.5 274.0 469.5 264.0 464.5 254.0 459.5 244.0 454.5 234.0 449.5 224.0 445.0 214.0 441.0 204.0 438.0 195.0 435.0 184.0Z"/><path d="M458.5 175.0 461.0 178.0 459.5 186.0 457.0 193.0 455.5 201.0 456.0 210.0 457.2 218.0 456.0 224.0 453.5 219.0 451.0 211.0 449.8 204.0 450.5 196.0 452.5 188.0 455.0 181.0Z"/><path d="M488.8 300.7 490.2 300.2 493.0 309.0 497.0 319.0 501.5 329.0 506.0 339.0 510.5 349.0 514.0 357.0 516.4 363.0 514.6 363.4 512.0 357.5 508.5 349.5 504.0 340.0 499.5 330.0 495.0 320.0 491.0 310.0Z"/></clipPath><g clip-path="url(#pclip)"><path d="M436.3 172L438 184L440 195" fill="none" stroke="#2c2230" stroke-width="11.5" stroke-dasharray=".7 3.8" opacity=".75"/><path d="M441.3 199.500L447 213.5L456.500 234.500L466.500 255L476.500 275L484.500 291.500" fill="none" stroke="#2c2230" stroke-width="5.6" stroke-dasharray=".7 3.1" opacity=".75"/><path d="M458.500 178L456.200 190L453.600 202L454 213L455.300 221" fill="none" stroke="#2c2230" stroke-width="7.2" stroke-dasharray=".6 2.7" opacity=".75"/><path d="M489.500 301L497 319L506 339L515.500 363" fill="none" stroke="#2c2230" stroke-width="5" stroke-dasharray=".7 2.9" opacity=".75"/></g><path d="M458.8 169.0 462.0 174.0 465.0 179.8 467.5 185.0 468.8 189.9 465.5 192.5 462.5 194.9 460.0 198.0 458.8 201.1 457.7 206.0 457.5 211.2 458.5 217.0 460.0 223.7 462.3 231.0 465.0 238.8 468.0 246.0 471.3 253.9 475.0 262.5 478.9 271.4 482.0 279.0 485.1 286.5 487.6 293.0 490.1 299.1 492.6 306.5 495.2 314.1 497.7 320.5 500.2 326.7 502.7 332.0 505.2 336.7 507.7 341.5 510.2 346.0 514.0 352.6 516.6 359.0 519.0 365.1 522.2 372.5 525.3 380.2 527.9 387.5 530.3 395.2 532.4 403.0 534.1 410.3 534.7 418.0 534.8 425.4 534.4 435.0 533.6 445.4 532.7 453.0 531.6 460.5 530.4 469.0 529.1 478.1 527.9 487.0 526.6 495.7 525.3 503.0 524.0 510.7 523.2 520.0 522.8 530.0 522.6 540.0 521.0 546.6 519.7 552.5 518.0 558.3 517.2 564.1 515.6 581.5 513.1 591.5 508.9 600.6 504.0 609.8 498.1 619.7 491.5 629.7 484.9 638.0 476.5 646.3 466.6 654.6 460.0 660.0 453.7 664.6 441.2 672.2 428.6 678.5 411.0 686.0 396.0 691.0 388.0 693.5 392.0 690.2 396.0 688.3 410.0 683.6 427.0 676.2 440.0 670.0 452.0 662.2 464.0 653.0 474.0 645.0 479.5 639.5 480.5 634.0 478.0 628.5 472.0 627.5 466.0 627.0 460.0 628.5 454.0 628.0 449.0 631.5 446.0 632.0 438.0 631.0 431.0 632.0 426.0 630.0 421.0 630.7 416.0 634.5 411.0 635.8 403.0 637.2 396.0 637.0 393.1 638.3 389.0 635.5 385.6 632.0 382.5 626.5 380.6 622.0 380.8 618.0 381.8 614.4 384.5 611.0 386.9 608.2 387.3 605.0 386.9 601.9 383.8 595.5 380.6 589.3 377.5 584.5 374.3 579.3 370.5 573.5 366.8 568.0 363.0 565.0 359.2 561.7 355.5 556.5 351.7 551.7 346.5 548.8 341.7 545.4 336.5 541.3 331.6 537.9 326.5 536.0 321.6 535.3 317.5 538.5 314.0 540.4 310.0 533.5 306.5 526.6 303.5 522.0 301.5 520.0 299.0 514.0 297.5 508.0 296.5 503.2 295.2 495.5 294.0 488.1 291.5 480.5 288.9 473.0 285.0 467.5 281.4 463.0 277.5 460.0 273.9 458.0 268.9 459.3 263.0 461.5 256.3 461.8 251.0 458.0 246.3 453.0 242.8 447.0 240.0 440.4 238.0 433.0 236.2 425.4 235.5 420.0 235.0 415.3 232.0 409.5 228.7 404.0 225.0 398.5 221.1 392.7 218.0 387.5 214.9 382.7 211.7 376.5 208.6 370.1 204.8 364.0 201.0 357.6 197.3 352.5 193.5 347.5 190.0 343.0 186.0 339.0" fill="none" stroke="#2c2230" stroke-width="0.9" stroke-linejoin="round"/><path d="M186.0 252.6 190.0 253.0 193.0 255.0 196.0 256.4 197.6 259.0 198.6 262.7 197.5 266.0 197.3 268.9 199.0 271.5 201.0 274.0 203.0 270.5 204.8 266.4 205.6 263.5 207.3 261.4 209.5 262.0 211.1 263.9 213.7 264.6 216.1 266.4 217.2 268.8 217.4 271.4 216.6 274.7 214.9 277.7 213.2 280.0 211.1 281.5 209.2 283.0 207.3 284.0 205.5 286.6 203.6 289.0 201.0 291.6 198.6 294.0 197.2 296.6 196.0 299.1 194.7 302.3 193.5 305.4 190.0 306.2 186.0 306.6Z" fill="none" stroke="#2c2230" stroke-width="0.8"/><path d="M488.5 613.5 490.0 610.5 493.0 608.5 496.0 606.0 499.0 603.5 501.5 603.8 500.5 606.5 498.0 609.5 495.0 612.0 492.0 614.0 489.5 614.8Z" fill="none" stroke="#2c2230" stroke-width="0.8"/><path d="M483.5 621.0 485.0 618.0 488.5 616.5 492.0 617.5 493.3 620.5 492.0 624.0 488.5 626.3 485.0 625.5Z" fill="none" stroke="#2c2230" stroke-width="0.8"/><path d="M235.7 420.4 238.2 417.9 242.5 417.2 247.2 416.3 251.5 413.8 250.8 409.0 250.5 404.0 249.3 402.8 248.2 398.5 247.5 394.0 254.0 392.0 261.3 392.2 259.0 395.5 257.6 399.0 259.5 402.0 261.3 405.3 261.8 410.0 261.9 413.8 261.0 418.0 260.3 422.0 259.1 426.9 258.7 432.7 261.9 436.7 262.5 441.5 262.7 446.6 265.5 449.0 268.5 450.7 269.3 453.1 266.0 455.2 262.7 456.4 258.5 456.8 254.6 456.4 251.0 455.0 248.0 453.1 246.9 450.0 246.4 446.6 244.0 442.5 241.5 438.4 239.3 432.0 237.4 426.1" fill="none" stroke="#2c2230" stroke-width="0.8"/><path d="M517.2 564.1 516.0 563.3 514.8 556.6 513.0 553.3 509.5 556.0 506.4 558.3 505.0 561.5 504.0 564.9 501.0 568.0 498.1 570.7 497.6 574.5 497.3 578.2 495.8 581.0 494.8 583.2 494.0 586.5 493.5 589.8 494.0 592.5 494.8 594.8 496.3 598.0 498.1 601.5 500.0 602.6 502.5 600.5 505.5 596.0 508.5 590.5 511.3 584.0 513.5 579.0 515.6 581.5" fill="none" stroke="#2c2230" stroke-width="0.8"/><path d="M217.4 169.0 216.6 171.4 217.4 174.2 217.2 176.2 217.1 178.8 215.6 181.1 215.4 184.3 219.4 184.1 220.8 185.7 223.2 185.5 224.4 188.3 226.4 191.9 227.8 193.1 230.4 194.3 233.0 194.3 233.0 196.4 232.2 199.1 233.9 201.6 233.2 204.2 236.5 204.1 237.8 205.6 240.7 205.5 242.2 208.6 244.3 209.9 246.7 211.2 248.0 212.2 250.5 212.6 253.1 213.5 254.7 214.1 257.5 214.4 259.4 213.3 261.9 214.4 264.2 215.0 266.4 215.4 269.0 215.6 269.6 219.3 269.1 221.7 270.5 223.1 267.5 225.2 265.9 225.9 268.2 228.6 270.1 230.6 271.1 231.7 273.2 234.5 273.5 237.5 272.5 239.0 273.4 241.2 274.2 243.2 275.4 244.6 276.5 246.7 276.6 249.4 278.7 250.6 278.4 253.4 278.6 255.8 280.0 258.3 279.4 262.2 281.2 264.0 282.6 266.2 282.3 268.4 282.2 271.0 281.1 273.5 281.3 277.2 280.6 279.2 279.4 279.8 278.9 281.6 278.5 283.8 277.9 286.1 278.6 289.8 277.2 290.0 273.4 289.9 270.6 291.2 269.1 292.2 266.9 292.9 263.6 293.1 263.4 295.4 262.7 298.0 262.1 299.6 262.3 302.1 260.7 304.8 259.2 307.0 261.7 309.1 262.0 311.4 262.1 313.6 261.2 317.2 261.4 318.8 262.8 321.1 263.2 322.6 265.2 323.5 264.1 327.3 264.0 328.7 264.9 330.8 266.7 333.2 266.9 333.4 266.9 335.9 265.8 338.6 265.1 341.6 264.6 343.7 265.6 345.1 264.8 348.0 263.3 350.8 263.7 352.3 263.5 354.4 262.9 358.2 261.2 360.8 261.8 363.3 260.9 365.5 261.8 367.4 260.5 369.3 261.3 372.7 261.6 374.7 262.4 376.4 264.2 377.8 264.3 380.9 266.6 382.2 266.2 384.0 268.7 386.3 269.2 386.9 270.7 388.9 273.0 390.2 273.4 393.4 274.5 394.9 276.1 398.4 278.6 400.4 279.6 400.8 282.0 401.1 284.5 400.6 286.8 398.3 288.6 397.7 291.1 397.6 293.9 396.9 295.6 395.9 299.0 394.0" fill="none" stroke="#2c2230" stroke-width="1" stroke-linejoin="round"/><path d="M271.4 169.0 271.1 171.3 271.3 175.3 270.1 177.6 269.2 178.9 268.9 181.8 268.4 184.4 270.3 184.0 272.5 185.9 275.2 186.4 277.3 187.6 279.7 188.1 281.9 189.5 283.6 191.7 286.7 192.6 289.2 193.9 290.4 195.6 292.5 197.7 294.4 198.6 297.8 199.6 299.1 199.3 301.3 198.1 303.7 196.3 306.5 196.1" fill="none" stroke="#2c2230" stroke-width="1" stroke-linejoin="round"/><path d="M306.5 196.1 307.2 193.8 308.5 191.5 311.1 190.0 313.0 189.3 313.9 188.3 316.8 187.4 319.1 186.8 320.1 185.0 321.6 185.0 324.4 183.8 326.1 181.9 327.8 180.3 329.8 178.8 331.2 177.0 331.2 174.1 333.8 175.7 336.7 176.5 338.6 175.0 341.5 173.8 342.4 173.7 345.2 174.3 347.2 175.1 349.5 176.7 351.6 177.2 352.9 178.7 354.8 179.1 357.4 180.1 358.2 182.3 360.2 184.7 362.0 186.1 364.2 187.8 364.9 190.2 367.5 190.5 367.7 193.4 370.8 194.3 371.4 196.4 373.0 198.2 372.5 201.4 372.6 203.5 373.7 205.3 375.1 206.3 376.6 208.1 374.9 210.6 374.2 213.4 376.4 215.6 377.2 217.4 379.0 220.4 380.9 220.3 384.0 221.4 385.5 221.8 386.5 218.3 386.2 215.7 389.2 216.7 391.2 218.3 391.3 219.6 389.8 221.5 390.1 224.3 391.0 227.0 390.0 228.9 389.0 230.0 388.4 231.5 387.3 234.2 387.9 235.6 387.2 239.6 387.5 241.2 387.0 243.8 386.2 247.1 386.6 247.8 388.8 250.4 388.9 252.0 391.0 253.6 394.0 254.4 397.6 255.1 398.9 256.1 399.8 258.9 401.4 259.4 402.3 261.5 404.2 262.6 405.3 264.6 407.6 266.4 409.0 268.2 408.7 270.5 409.6 272.7 411.4 273.9 411.4 275.7 408.9 277.9 406.5 278.4 403.8 276.2 401.9 275.0 400.2 275.4 396.9 276.0 396.7 279.3 397.5 281.5 398.5 283.3 398.6 286.8 401.5 288.2 402.7 289.4 405.4 289.0 407.0 288.6 408.7 288.6 412.6 289.3 414.4 290.2 414.8 292.9 416.4 294.0 415.8 297.1 418.2 299.2 419.7 301.4 421.7 303.1 421.2 304.2 422.6 307.6 423.0 308.7 421.1 311.5 418.5 311.6 416.8 313.7 418.3 317.2 419.1 319.5 421.5 321.2 422.7 322.4 425.2 322.5 426.7 323.6 428.0 326.0 429.1 326.7 431.9 327.6 433.3 329.2 436.2 330.4" fill="none" stroke="#2c2230" stroke-width="1" stroke-linejoin="round"/><path d="M306.5 196.1 308.2 198.1 308.6 200.7 308.5 201.7 310.5 203.4 311.3 206.4 313.4 206.8 313.3 209.5 315.9 211.6 315.3 214.3 315.5 217.5 316.0 219.8 317.6 222.6 317.7 224.9 318.6 227.1 318.6 228.5 319.8 232.0 320.5 233.7 320.5 235.9 321.1 239.6 322.7 242.0 322.5 244.2 322.5 246.3 323.1 248.3 324.1 249.8 326.1 251.9 326.2 255.2 325.3 257.0 327.1 260.0 326.7 261.9 327.6 263.6 327.9 266.6 326.4 269.5 325.2 271.9 322.1 272.2 319.5 273.4 318.4 274.0 319.2 276.7 319.9 278.8 321.3 281.7 321.8 284.0 322.5 286.6 324.0 288.7 324.8 292.1 325.4 294.9 326.7 296.4 328.1 297.2 330.9 298.3 331.4 302.2 332.8 304.4 332.6 306.3 333.9 308.4 333.7 312.3 335.6 313.6 335.7 316.3 336.8 318.8 337.0 322.1 336.8 323.8 337.5 326.5 338.1 328.9 337.1 331.6 334.8 334.7 334.0 335.4 331.3 336.5 329.8 335.9 331.6 337.5 333.8 339.6 333.2 342.4 333.1 343.8 330.8 347.1 330.4 347.6 327.6 348.0 327.3 350.1 326.4 353.0 325.4 355.6 323.7 357.1 321.9 359.7 320.4 361.4 317.9 362.6 316.0 365.4 315.6 367.6 315.4 370.9 315.4 372.0 314.0 375.3 314.4 377.3 314.1 379.8 313.2 381.3 311.8 383.4 312.0 386.5 314.8 386.0 316.3 384.9 317.0 386.6 317.1 389.2 315.6 390.1 314.4 391.1 311.4 391.6 308.7 392.6 305.8 392.6 303.3 393.4 301.1 394.4 299.0 394.0" fill="none" stroke="#2c2230" stroke-width="1" stroke-linejoin="round"/><path d="M311.5 212.4 311.9 215.2 311.1 216.2 310.0 219.1 308.7 219.6 305.5 222.7 303.4 224.0 301.2 224.6 299.6 225.1 297.1 226.8 295.8 229.4 293.8 231.2 291.5 230.2 288.4 230.1 286.2 229.4 285.3 228.9 282.2 227.4 281.6 228.8 280.0 230.0 278.0 231.3 275.9 234.1 273.9 235.0" fill="none" stroke="#2c2230" stroke-width="1" stroke-linejoin="round"/><path d="M423.6 169.0 425.1 171.1 425.8 174.5 425.8 176.5 426.8 178.0 427.8 181.5 428.4 183.8 429.6 185.5 430.7 187.8 431.7 190.5 433.4 191.3 434.5 193.8 435.3 196.7 435.4 198.2 436.9 202.0 437.3 202.4 438.6 205.4 439.6 207.6 440.7 209.1 440.6 211.2 441.6 214.1 442.7 216.8 443.5 218.4 445.2 220.7 446.2 222.6 445.8 224.1 447.1 225.9 448.1 227.3 449.9 230.1 451.9 232.1 451.0 233.0 449.9 235.5 450.6 238.5 451.2 241.2 451.8 244.4 452.8 245.6 453.6 248.6 455.0 251.0 454.6 254.6 455.8 255.0 457.4 258.4 457.8 259.0 459.4 261.1 458.8 263.1 460.3 266.0 459.4 268.7 461.3 272.3 461.4 274.2 462.5 277.1 463.8 279.3 465.0 281.6 465.0 283.2 465.1 286.8 466.7 289.2 466.0 292.0 467.7 294.6 468.0 296.8 466.3 298.3 465.0 300.8 464.3 303.1 463.1 304.2 461.8 306.2 460.9 308.8 459.1 309.2 456.6 311.7 455.1 314.3 454.7 315.1 454.0 317.2 452.4 319.1 451.6 320.9 451.4 323.8 449.9 326.1 448.0 326.4 445.0 327.0 444.3 328.2 441.6 328.1 438.6 330.0 436.2 330.4" fill="none" stroke="#2c2230" stroke-width="1" stroke-linejoin="round"/><path d="M436.2 330.4 436.9 333.2 436.2 335.4 438.0 336.0 440.5 338.1 441.9 339.2 444.7 339.2 446.5 341.3 447.9 342.2 448.7 343.7 449.6 346.0 449.3 343.8 450.5 341.5 449.9 339.2 451.2 341.8 451.1 345.4 452.4 347.6 453.3 350.0 453.6 352.0 454.7 354.2 456.4 356.6 459.1 358.7 459.4 360.9 461.5 363.2 465.0 364.3 467.1 365.2 467.1 367.4 468.2 369.7 468.8 372.5 470.8 374.9 472.4 375.4 474.0 378.1 475.6 379.0 476.5 381.9 479.2 383.9 480.1 386.1 481.1 387.6 481.9 390.6 479.5 391.6 478.5 394.5 477.0 393.2 475.1 393.7 473.2 393.6 471.1 395.8 470.8 398.0 470.1 399.6 467.2 399.9 465.9 401.1 462.2 400.9 460.6 402.3 457.8 405.1 456.3 406.9 456.4 408.3 455.9 411.2 455.6 412.9 456.7 414.5 457.0 418.0 456.3 420.1 454.9 421.2 453.4 423.6 452.5 425.2 451.0 427.3 448.9 429.0 448.1 430.1 444.6 430.6 442.9 430.2 441.2 429.0 439.3 428.5 436.8 428.8 434.1 429.9 431.7 428.9 430.7 431.7 428.6 434.2" fill="none" stroke="#2c2230" stroke-width="1" stroke-linejoin="round"/><path d="M428.6 434.2 426.1 434.3 425.3 434.4 422.3 433.8 419.7 436.7 418.6 437.1 416.2 439.5 414.3 440.1 410.7 441.2 409.5 443.7 408.1 443.6 405.8 444.7 403.4 446.3 401.3 446.7 399.3 447.8 398.5 448.8 396.0 450.5" fill="none" stroke="#2c2230" stroke-width="1" stroke-linejoin="round"/><path d="M299.0 394.0 298.7 396.7 300.3 398.2 299.5 400.1 299.5 402.3 300.0 405.9 300.3 407.3 301.9 411.0 300.8 412.5 299.8 413.0 296.7 414.0 294.2 413.3 292.5 415.2 290.1 415.1 291.8 418.7 293.5 419.8 294.4 422.0 296.0 424.5 296.4 426.0 297.8 427.2 297.6 431.1 299.4 432.0 302.1 433.5 304.5 434.9 306.1 436.4 307.0 437.8 310.1 438.8 311.0 439.2 313.5 440.0 316.7 440.7 318.4 440.0 320.8 442.0 324.3 441.5 327.0 442.8 328.3 444.4 330.8 444.8 331.9 445.6 333.9 446.2 335.2 448.1 338.3 449.4 339.0 449.7 341.7 451.4 342.6 453.4 345.5 453.6 346.0 455.0 348.8 457.4 349.2 459.3" fill="none" stroke="#2c2230" stroke-width="1" stroke-linejoin="round"/><path d="M349.2 459.3 350.5 457.9 352.6 456.1 354.2 456.3 356.2 454.6 358.5 453.5 359.5 453.2 361.2 452.4 364.5 451.4 366.0 450.1 367.5 450.9 370.1 452.4 370.8 454.2 373.9 456.1 374.2 457.9 374.6 459.9 374.8 463.8 377.5 463.3 379.7 464.7 382.5 464.6 384.8 465.6 387.1 467.3 388.0 463.9 388.5 462.8 389.7 461.2 391.1 458.5 391.8 457.2 393.6 454.6 394.2 453.2 396.3 452.0 398.8 450.3 400.2 448.7 402.5 448.3 404.0 446.7 405.0 445.7 407.2 445.6 409.6 444.8 412.4 442.5 413.2 442.1 416.0 440.4" fill="none" stroke="#2c2230" stroke-width="1" stroke-linejoin="round"/><path d="M349.2 459.3 349.1 461.2 348.1 463.0 346.7 465.1 348.4 466.5 349.9 468.6 350.9 471.1 352.0 472.1 351.1 474.8 350.3 477.0 351.6 478.5 351.9 481.0 353.8 483.8 350.9 483.7 348.6 485.2 349.0 485.9 348.6 488.1 349.1 491.2 351.7 490.8 353.6 490.9 357.3 492.7 359.9 490.6 361.4 490.4 364.2 490.1 366.7 489.7 369.5 489.0 371.8 487.4 373.4 490.1 374.1 492.0 373.6 495.2 373.0 496.4 372.6 500.2 372.8 501.4 374.5 501.3 376.2 503.8 378.2 505.2 379.7 506.6 379.8 508.1 381.4 510.9 382.8 511.6 384.7 513.2 386.1 515.1 388.1 516.5 391.2 518.2 391.7 518.2 394.1 519.9 397.0 521.1 400.1 522.2 398.2 523.8 398.3 526.4 397.1 529.2 397.5 531.4 397.9 533.6 397.5 536.5 399.8 537.4 402.0 538.7 404.2 539.9 408.0 540.7 410.6 542.7 412.2 543.3 415.0 545.7 417.1 546.0 415.7 548.1 415.5 551.2 414.5 550.6 412.2 552.5 409.0 552.3 408.0 554.1 407.8 555.6 406.3 558.2 405.2 560.2 403.5 560.7 400.7 563.0 400.1 564.1 398.1 565.7 395.8 565.7 394.4 567.5 391.7 569.6 392.5 572.4 395.9 573.7 397.2 574.1 400.2 573.9 402.6 573.0 404.3 570.3 406.3 570.8 408.3 569.6 410.6 568.7 412.0 566.6 414.2 566.1 415.9 565.7 418.5 567.4 421.6 569.5 423.5 571.3 424.0 572.9 423.3 574.9 421.7 577.1 422.1 579.9 423.5 580.5 425.1 582.9 425.9 585.0 428.1 584.3 431.2 584.6 432.6 584.3 434.2 581.9 436.3 580.7 439.9 578.5 441.1 579.7 443.1 578.8 446.5 578.9 447.3 576.3 448.7 574.4 451.6 572.9 453.1 572.3 455.5 569.8 457.9 571.0 460.8 572.2 462.0 573.6 464.2 574.2 466.5 573.3 469.8 572.8 472.8 573.6 474.8 574.1 476.2 572.0 478.4 571.4 481.0 569.7 482.3 568.9 484.4 568.0 486.8 566.4 488.7 565.1 490.9 563.1 492.5 562.9 494.8 561.3 496.1 562.0 498.7 559.7 500.3 558.7 504.0 557.4 506.4 555.8 507.3 554.1 510.6 553.9 513.5 552.6 514.4 551.8 517.1 551.5" fill="none" stroke="#2c2230" stroke-width="1" stroke-linejoin="round"/><path d="M428.6 434.2 431.3 434.9 433.6 436.7 434.7 438.1 435.6 439.1 437.3 440.8 439.0 442.8 438.1 445.1 437.4 448.3 438.1 450.2 436.7 452.2 435.4 454.2 433.8 456.6 435.5 459.3 435.5 460.2 437.4 462.5 438.7 465.5 441.5 465.6 441.6 468.3 445.3 469.5 447.0 470.1 448.7 470.5 450.6 471.6 451.5 474.3 451.9 476.0 452.9 478.3 454.8 479.3 455.5 482.0 456.0 482.6 458.3 485.5 459.0 486.9 461.1 488.4 463.3 490.2 465.6 491.4 468.3 491.3 470.8 492.3 472.0 492.0 470.9 493.2 469.3 495.8 469.4 497.4 469.4 500.9 469.4 502.7 470.2 504.9 472.1 506.1 474.1 505.6 475.7 506.5 477.8 509.0 479.9 510.0 483.1 510.7 484.4 510.2 488.4 510.6 490.6 510.1 491.3 509.2 493.7 507.7 495.8 510.0 497.4 511.2 498.8 512.8 500.9 514.9 503.0 517.8 500.4 518.8 497.9 520.9 496.7 522.2 496.7 524.1 497.2 526.6 496.1 530.2 497.9 532.7 498.4 534.3 498.3 536.9 500.2 537.7 502.9 539.3 504.0 540.8 507.1 542.9 508.5 544.2 510.1 546.8 511.9 547.8 513.0 549.5 514.6 552.3" fill="none" stroke="#2c2230" stroke-width="1" stroke-linejoin="round"/><path d="M496.4 352.6 498.1 354.1 500.0 355.4 502.1 356.7 502.1 357.7 503.9 359.9 506.6 359.2 507.7 357.3 509.1 358.4 512.2 358.3 513.3 360.4 515.3 362.6" fill="none" stroke="#2c2230" stroke-width="1" stroke-linejoin="round"/><path d="M430.2 169.6 430.0 172.5 431.8 173.2 432.2 175.9 433.4 179.1 433.0 180.9 434.0 182.6 434.6 185.0 435.4 188.0 436.5 188.6 436.6 192.3 438.0 193.8 438.5 196.1 438.8 197.8 440.0 199.6 441.7 201.4 441.9 204.7 444.2 206.2 445.2 209.2 445.1 211.4 446.2 212.8 447.2 214.3 449.3 217.7 449.3 219.3 451.2 222.2 451.4 224.9 452.3 227.7 454.3 229.7 455.8 231.5 455.6 234.6 457.9 237.5 458.7 238.9 458.9 241.2 460.3 243.3 461.5 244.5 462.2 246.0 462.6 248.9 464.3 249.7 464.5 252.3 466.1 254.2 466.8 257.2 467.8 258.3 469.7 260.1 470.0 261.8 471.6 264.9 471.6 266.5 472.5 268.8 473.9 269.8 475.7 272.1 475.9 274.9 476.4 275.9 478.5 278.1 479.5 280.9 480.6 283.2 481.6 285.4 481.5 287.3 483.0 290.0 483.9 291.8 484.8 294.3 486.7 296.9 487.5 299.0" fill="none" stroke="#2c2230" stroke-width="1" stroke-linejoin="round"/><ellipse cx="407.3" cy="656.3" rx="1.6" ry="0.7" transform="rotate(-33 407.3 656.3)" fill="#b397ac" stroke="#2c2230" stroke-width="0.55"/><ellipse cx="429.9" cy="672.7" rx="1.5" ry="0.8" transform="rotate(51 429.9 672.7)" fill="#b397ac" stroke="#2c2230" stroke-width="0.55"/><rect x="411.6" y="639.3" width="1.2" height="1.2" fill="#3a2e3a"/><rect x="455.1" y="640.3" width="1.0" height="1.0" fill="#3a2e3a"/><rect x="423.6" y="647.7" width="0.8" height="0.8" fill="#3a2e3a"/><ellipse cx="457.1" cy="647.3" rx="1.0" ry="1.2" transform="rotate(58 457.1 647.3)" fill="#b397ac" stroke="#2c2230" stroke-width="0.55"/><ellipse cx="473.1" cy="631.8" rx="1.1" ry="1.4" transform="rotate(-44 473.1 631.8)" fill="#b397ac" stroke="#2c2230" stroke-width="0.55"/><ellipse cx="406.7" cy="654.3" rx="1.3" ry="1.1" transform="rotate(19 406.7 654.3)" fill="#b397ac" stroke="#2c2230" stroke-width="0.55"/><rect x="437.3" y="646.3" width="1.0" height="1.0" fill="#3a2e3a"/><ellipse cx="469.2" cy="640.1" rx="1.6" ry="1.2" transform="rotate(-52 469.2 640.1)" fill="#b397ac" stroke="#2c2230" stroke-width="0.55"/><rect x="460.3" y="650.4" width="1.0" height="1.0" fill="#3a2e3a"/><ellipse cx="424.7" cy="645.3" rx="1.8" ry="1.0" transform="rotate(-25 424.7 645.3)" fill="#b397ac" stroke="#2c2230" stroke-width="0.55"/><ellipse cx="465.9" cy="649.6" rx="1.8" ry="1.6" transform="rotate(-18 465.9 649.6)" fill="#b397ac" stroke="#2c2230" stroke-width="0.55"/><ellipse cx="440.5" cy="659.6" rx="2.1" ry="1.1" transform="rotate(28 440.5 659.6)" fill="#b397ac" stroke="#2c2230" stroke-width="0.55"/><ellipse cx="412.8" cy="672.5" rx="2.2" ry="1.6" transform="rotate(-39 412.8 672.5)" fill="#b397ac" stroke="#2c2230" stroke-width="0.55"/><rect x="424.0" y="640.2" width="1.0" height="1.0" fill="#3a2e3a"/><rect x="426.8" y="667.1" width="1.2" height="1.2" fill="#3a2e3a"/><rect x="472.1" y="630.0" width="1.0" height="1.0" fill="#3a2e3a"/><ellipse cx="443.1" cy="646.9" rx="2.1" ry="1.0" transform="rotate(-15 443.1 646.9)" fill="#b397ac" stroke="#2c2230" stroke-width="0.55"/><ellipse cx="444.4" cy="664.4" rx="2.1" ry="1.0" transform="rotate(-5 444.4 664.4)" fill="#b397ac" stroke="#2c2230" stroke-width="0.55"/><ellipse cx="422.7" cy="644.1" rx="1.3" ry="1.5" transform="rotate(-42 422.7 644.1)" fill="#b397ac" stroke="#2c2230" stroke-width="0.55"/><rect x="465.8" y="630.7" width="1.0" height="1.0" fill="#3a2e3a"/><rect x="462.1" y="643.8" width="1.0" height="1.0" fill="#3a2e3a"/><rect x="459.0" y="636.6" width="1.2" height="1.2" fill="#3a2e3a"/><ellipse cx="458.0" cy="631.5" rx="2.0" ry="0.8" transform="rotate(-60 458.0 631.5)" fill="#b397ac" stroke="#2c2230" stroke-width="0.55"/><ellipse cx="472.7" cy="638.0" rx="1.5" ry="1.0" transform="rotate(-41 472.7 638.0)" fill="#b397ac" stroke="#2c2230" stroke-width="0.55"/><ellipse cx="432.9" cy="660.3" rx="1.2" ry="0.8" transform="rotate(-52 432.9 660.3)" fill="#b397ac" stroke="#2c2230" stroke-width="0.55"/><ellipse cx="452.4" cy="631.4" rx="2.2" ry="1.3" transform="rotate(-54 452.4 631.4)" fill="#b397ac" stroke="#2c2230" stroke-width="0.55"/><rect x="455.9" y="654.5" width="0.8" height="0.8" fill="#3a2e3a"/><rect x="420.9" y="662.0" width="1.2" height="1.2" fill="#3a2e3a"/><ellipse cx="455.2" cy="638.5" rx="2.1" ry="1.2" transform="rotate(19 455.2 638.5)" fill="#b397ac" stroke="#2c2230" stroke-width="0.55"/><ellipse cx="417.3" cy="676.6" rx="2.0" ry="1.5" transform="rotate(-2 417.3 676.6)" fill="#b397ac" stroke="#2c2230" stroke-width="0.55"/><ellipse cx="458.4" cy="640.0" rx="1.0" ry="1.3" transform="rotate(-49 458.4 640.0)" fill="#b397ac" stroke="#2c2230" stroke-width="0.55"/><ellipse cx="435.2" cy="651.8" rx="1.0" ry="1.2" transform="rotate(9 435.2 651.8)" fill="#b397ac" stroke="#2c2230" stroke-width="0.55"/><ellipse cx="457.5" cy="633.0" rx="1.8" ry="0.9" transform="rotate(-46 457.5 633.0)" fill="#b397ac" stroke="#2c2230" stroke-width="0.55"/><rect x="429.0" y="670.5" width="1.2" height="1.2" fill="#3a2e3a"/><ellipse cx="440.4" cy="663.2" rx="1.4" ry="0.8" transform="rotate(-56 440.4 663.2)" fill="#b397ac" stroke="#2c2230" stroke-width="0.55"/><ellipse cx="426.6" cy="653.9" rx="2.1" ry="1.0" transform="rotate(-1 426.6 653.9)" fill="#b397ac" stroke="#2c2230" stroke-width="0.55"/><rect x="406.2" y="638.7" width="1.0" height="1.0" fill="#3a2e3a"/><rect x="459.7" y="647.7" width="1.0" height="1.0" fill="#3a2e3a"/><rect x="411.4" y="641.3" width="0.8" height="0.8" fill="#3a2e3a"/><ellipse cx="413.1" cy="650.2" rx="1.5" ry="1.4" transform="rotate(-38 413.1 650.2)" fill="#b397ac" stroke="#2c2230" stroke-width="0.55"/><ellipse cx="461.9" cy="653.0" rx="2.2" ry="1.2" transform="rotate(-16 461.9 653.0)" fill="#b397ac" stroke="#2c2230" stroke-width="0.55"/><ellipse cx="417.4" cy="675.0" rx="1.8" ry="1.3" transform="rotate(3 417.4 675.0)" fill="#b397ac" stroke="#2c2230" stroke-width="0.55"/><rect x="418.9" y="652.8" width="0.8" height="0.8" fill="#3a2e3a"/><ellipse cx="475.9" cy="640.9" rx="1.1" ry="0.9" transform="rotate(58 475.9 640.9)" fill="#b397ac" stroke="#2c2230" stroke-width="0.55"/><ellipse cx="468.3" cy="642.0" rx="1.5" ry="1.2" transform="rotate(-12 468.3 642.0)" fill="#b397ac" stroke="#2c2230" stroke-width="0.55"/><ellipse cx="440.8" cy="637.4" rx="1.8" ry="1.5" transform="rotate(-32 440.8 637.4)" fill="#b397ac" stroke="#2c2230" stroke-width="0.55"/><ellipse cx="443.5" cy="637.8" rx="1.2" ry="1.1" transform="rotate(-44 443.5 637.8)" fill="#b397ac" stroke="#2c2230" stroke-width="0.55"/><ellipse cx="445.3" cy="643.7" rx="1.0" ry="0.9" transform="rotate(-24 445.3 643.7)" fill="#b397ac" stroke="#2c2230" stroke-width="0.55"/><ellipse cx="461.1" cy="630.0" rx="1.1" ry="0.7" transform="rotate(-42 461.1 630.0)" fill="#b397ac" stroke="#2c2230" stroke-width="0.55"/><rect x="429.4" y="637.3" width="1.0" height="1.0" fill="#3a2e3a"/><ellipse cx="438.8" cy="648.1" rx="1.9" ry="0.7" transform="rotate(-45 438.8 648.1)" fill="#b397ac" stroke="#2c2230" stroke-width="0.55"/><rect x="416.9" y="654.0" width="0.8" height="0.8" fill="#3a2e3a"/><ellipse cx="411.4" cy="664.7" rx="1.2" ry="1.2" transform="rotate(20 411.4 664.7)" fill="#b397ac" stroke="#2c2230" stroke-width="0.55"/><ellipse cx="463.2" cy="636.6" rx="1.5" ry="1.1" transform="rotate(-4 463.2 636.6)" fill="#b397ac" stroke="#2c2230" stroke-width="0.55"/><ellipse cx="402.0" cy="667.4" rx="1.5" ry="0.7" transform="rotate(-44 402.0 667.4)" fill="#b397ac" stroke="#2c2230" stroke-width="0.55"/><ellipse cx="415.7" cy="645.5" rx="1.4" ry="1.4" transform="rotate(-30 415.7 645.5)" fill="#b397ac" stroke="#2c2230" stroke-width="0.55"/><rect x="472.5" y="633.5" width="0.8" height="0.8" fill="#3a2e3a"/><ellipse cx="401.1" cy="639.5" rx="2.1" ry="0.9" transform="rotate(42 401.1 639.5)" fill="#b397ac" stroke="#2c2230" stroke-width="0.55"/><rect x="436.6" y="659.9" width="1.2" height="1.2" fill="#3a2e3a"/><rect x="413.1" y="651.8" width="1.0" height="1.0" fill="#3a2e3a"/><ellipse cx="440.1" cy="658.1" rx="1.5" ry="1.4" transform="rotate(14 440.1 658.1)" fill="#b397ac" stroke="#2c2230" stroke-width="0.55"/><ellipse cx="463.5" cy="650.3" rx="1.6" ry="1.0" transform="rotate(-51 463.5 650.3)" fill="#b397ac" stroke="#2c2230" stroke-width="0.55"/><rect x="399.2" y="682.0" width="0.8" height="0.8" fill="#3a2e3a"/><ellipse cx="448.1" cy="641.7" rx="1.2" ry="1.6" transform="rotate(9 448.1 641.7)" fill="#b397ac" stroke="#2c2230" stroke-width="0.55"/><ellipse cx="404.3" cy="653.1" rx="1.6" ry="1.3" transform="rotate(21 404.3 653.1)" fill="#b397ac" stroke="#2c2230" stroke-width="0.55"/><ellipse cx="457.8" cy="633.4" rx="2.1" ry="1.0" transform="rotate(48 457.8 633.4)" fill="#b397ac" stroke="#2c2230" stroke-width="0.55"/><rect x="398.1" y="667.7" width="1.0" height="1.0" fill="#3a2e3a"/><ellipse cx="445.2" cy="646.6" rx="1.6" ry="0.7" transform="rotate(-7 445.2 646.6)" fill="#b397ac" stroke="#2c2230" stroke-width="0.55"/><ellipse cx="443.4" cy="654.2" rx="2.0" ry="0.9" transform="rotate(-3 443.4 654.2)" fill="#b397ac" stroke="#2c2230" stroke-width="0.55"/><rect x="429.4" y="658.9" width="1.0" height="1.0" fill="#3a2e3a"/><ellipse cx="446.1" cy="642.1" rx="2.0" ry="1.4" transform="rotate(-5 446.1 642.1)" fill="#b397ac" stroke="#2c2230" stroke-width="0.55"/><rect x="471.1" y="638.3" width="0.8" height="0.8" fill="#3a2e3a"/><rect x="432.6" y="645.2" width="1.2" height="1.2" fill="#3a2e3a"/><rect x="460.2" y="634.3" width="1.0" height="1.0" fill="#3a2e3a"/><ellipse cx="470.6" cy="641.0" rx="2.1" ry="1.2" transform="rotate(-43 470.6 641.0)" fill="#b397ac" stroke="#2c2230" stroke-width="0.55"/><ellipse cx="436.4" cy="634.3" rx="0.9" ry="1.4" transform="rotate(-50 436.4 634.3)" fill="#b397ac" stroke="#2c2230" stroke-width="0.55"/><ellipse cx="419.9" cy="672.2" rx="1.1" ry="1.2" transform="rotate(54 419.9 672.2)" fill="#b397ac" stroke="#2c2230" stroke-width="0.55"/><ellipse cx="455.6" cy="635.0" rx="1.4" ry="1.0" transform="rotate(1 455.6 635.0)" fill="#b397ac" stroke="#2c2230" stroke-width="0.55"/><rect x="477.1" y="637.9" width="1.0" height="1.0" fill="#3a2e3a"/><rect x="402.6" y="658.0" width="1.0" height="1.0" fill="#3a2e3a"/><ellipse cx="434.0" cy="635.7" rx="1.6" ry="0.9" transform="rotate(14 434.0 635.7)" fill="#b397ac" stroke="#2c2230" stroke-width="0.55"/><rect x="444.4" y="641.6" width="0.8" height="0.8" fill="#3a2e3a"/><rect x="437.7" y="638.1" width="0.8" height="0.8" fill="#3a2e3a"/><rect x="449.3" y="651.8" width="1.0" height="1.0" fill="#3a2e3a"/><ellipse cx="427.1" cy="636.9" rx="1.7" ry="1.3" transform="rotate(23 427.1 636.9)" fill="#b397ac" stroke="#2c2230" stroke-width="0.55"/><ellipse cx="401.3" cy="663.0" rx="1.7" ry="1.3" transform="rotate(-32 401.3 663.0)" fill="#b397ac" stroke="#2c2230" stroke-width="0.55"/><ellipse cx="456.7" cy="647.0" rx="2.0" ry="1.6" transform="rotate(27 456.7 647.0)" fill="#b397ac" stroke="#2c2230" stroke-width="0.55"/><rect x="467.2" y="636.7" width="1.0" height="1.0" fill="#3a2e3a"/><rect x="450.5" y="654.5" width="0.8" height="0.8" fill="#3a2e3a"/><rect x="466.5" y="646.4" width="1.0" height="1.0" fill="#3a2e3a"/><rect x="469.4" y="645.9" width="1.2" height="1.2" fill="#3a2e3a"/><rect x="419.4" y="652.9" width="0.8" height="0.8" fill="#3a2e3a"/><rect x="431.3" y="655.9" width="1.2" height="1.2" fill="#3a2e3a"/><rect x="453.9" y="648.1" width="1.0" height="1.0" fill="#3a2e3a"/><ellipse cx="406.4" cy="673.0" rx="1.0" ry="1.6" transform="rotate(9 406.4 673.0)" fill="#b397ac" stroke="#2c2230" stroke-width="0.55"/><ellipse cx="429.2" cy="636.4" rx="2.0" ry="0.7" transform="rotate(52 429.2 636.4)" fill="#b397ac" stroke="#2c2230" stroke-width="0.55"/><ellipse cx="441.4" cy="637.8" rx="1.5" ry="1.1" transform="rotate(57 441.4 637.8)" fill="#b397ac" stroke="#2c2230" stroke-width="0.55"/><ellipse cx="434.5" cy="643.1" rx="1.8" ry="0.9" transform="rotate(-1 434.5 643.1)" fill="#b397ac" stroke="#2c2230" stroke-width="0.55"/><rect x="468.3" y="639.1" width="1.2" height="1.2" fill="#3a2e3a"/><ellipse cx="443.5" cy="641.6" rx="1.5" ry="1.5" transform="rotate(51 443.5 641.6)" fill="#b397ac" stroke="#2c2230" stroke-width="0.55"/><ellipse cx="453.4" cy="649.0" rx="1.8" ry="1.3" transform="rotate(41 453.4 649.0)" fill="#b397ac" stroke="#2c2230" stroke-width="0.55"/><rect x="442.2" y="657.0" width="0.8" height="0.8" fill="#3a2e3a"/><rect x="441.9" y="656.8" width="0.8" height="0.8" fill="#3a2e3a"/><ellipse cx="467.9" cy="643.3" rx="1.4" ry="1.3" transform="rotate(-31 467.9 643.3)" fill="#b397ac" stroke="#2c2230" stroke-width="0.55"/><ellipse cx="414.8" cy="643.2" rx="1.4" ry="1.2" transform="rotate(-32 414.8 643.2)" fill="#b397ac" stroke="#2c2230" stroke-width="0.55"/><ellipse cx="458.3" cy="650.9" rx="1.5" ry="1.3" transform="rotate(-53 458.3 650.9)" fill="#b397ac" stroke="#2c2230" stroke-width="0.55"/><ellipse cx="413.5" cy="640.6" rx="2.1" ry="1.1" transform="rotate(-23 413.5 640.6)" fill="#b397ac" stroke="#2c2230" stroke-width="0.55"/><rect x="425.9" y="635.6" width="0.8" height="0.8" fill="#3a2e3a"/><rect x="407.4" y="651.5" width="1.0" height="1.0" fill="#3a2e3a"/><ellipse cx="420.5" cy="659.4" rx="2.0" ry="0.9" transform="rotate(-49 420.5 659.4)" fill="#b397ac" stroke="#2c2230" stroke-width="0.55"/><rect x="434.4" y="640.7" width="1.2" height="1.2" fill="#3a2e3a"/><ellipse cx="469.1" cy="632.6" rx="1.1" ry="1.3" transform="rotate(30 469.1 632.6)" fill="#b397ac" stroke="#2c2230" stroke-width="0.55"/><rect x="447.7" y="650.3" width="0.8" height="0.8" fill="#3a2e3a"/><ellipse cx="437.4" cy="636.1" rx="1.5" ry="0.8" transform="rotate(23 437.4 636.1)" fill="#b397ac" stroke="#2c2230" stroke-width="0.55"/><rect x="461.9" y="647.3" width="1.2" height="1.2" fill="#3a2e3a"/><ellipse cx="427.2" cy="635.8" rx="1.5" ry="0.7" transform="rotate(-3 427.2 635.8)" fill="#b397ac" stroke="#2c2230" stroke-width="0.55"/><ellipse cx="441.1" cy="658.7" rx="2.0" ry="1.1" transform="rotate(-35 441.1 658.7)" fill="#b397ac" stroke="#2c2230" stroke-width="0.55"/><rect x="448.4" y="652.7" width="1.0" height="1.0" fill="#3a2e3a"/><rect x="475.1" y="636.1" width="1.0" height="1.0" fill="#3a2e3a"/><rect x="449.4" y="645.9" width="1.0" height="1.0" fill="#3a2e3a"/><rect x="430.4" y="656.1" width="1.0" height="1.0" fill="#3a2e3a"/><rect x="435.5" y="645.6" width="1.2" height="1.2" fill="#3a2e3a"/><rect x="433.9" y="664.4" width="0.8" height="0.8" fill="#3a2e3a"/><ellipse cx="452.8" cy="631.5" rx="1.0" ry="1.0" transform="rotate(-16 452.8 631.5)" fill="#b397ac" stroke="#2c2230" stroke-width="0.55"/><rect x="462.6" y="642.4" width="0.8" height="0.8" fill="#3a2e3a"/><rect x="460.2" y="636.1" width="0.8" height="0.8" fill="#3a2e3a"/><ellipse cx="423.1" cy="651.9" rx="2.0" ry="1.4" transform="rotate(0 423.1 651.9)" fill="#b397ac" stroke="#2c2230" stroke-width="0.55"/><rect x="429.4" y="662.1" width="1.0" height="1.0" fill="#3a2e3a"/><ellipse cx="398.5" cy="669.0" rx="1.6" ry="1.0" transform="rotate(-26 398.5 669.0)" fill="#b397ac" stroke="#2c2230" stroke-width="0.55"/><rect x="462.8" y="646.5" width="1.2" height="1.2" fill="#3a2e3a"/><rect x="444.3" y="635.0" width="1.2" height="1.2" fill="#3a2e3a"/><ellipse cx="454.6" cy="634.4" rx="1.6" ry="0.8" transform="rotate(34 454.6 634.4)" fill="#b397ac" stroke="#2c2230" stroke-width="0.55"/><rect x="472.9" y="640.1" width="1.2" height="1.2" fill="#3a2e3a"/><ellipse cx="434.3" cy="644.4" rx="1.1" ry="1.3" transform="rotate(32 434.3 644.4)" fill="#b397ac" stroke="#2c2230" stroke-width="0.55"/><ellipse cx="430.6" cy="663.5" rx="1.2" ry="1.2" transform="rotate(-38 430.6 663.5)" fill="#b397ac" stroke="#2c2230" stroke-width="0.55"/><ellipse cx="455.7" cy="642.9" rx="1.0" ry="1.4" transform="rotate(-31 455.7 642.9)" fill="#b397ac" stroke="#2c2230" stroke-width="0.55"/><rect x="438.2" y="665.4" width="1.2" height="1.2" fill="#3a2e3a"/><ellipse cx="468.5" cy="638.2" rx="1.8" ry="1.6" transform="rotate(42 468.5 638.2)" fill="#b397ac" stroke="#2c2230" stroke-width="0.55"/><rect x="434.2" y="640.3" width="1.0" height="1.0" fill="#3a2e3a"/><rect x="424.9" y="644.5" width="0.8" height="0.8" fill="#3a2e3a"/><rect x="462.9" y="643.3" width="1.0" height="1.0" fill="#3a2e3a"/><ellipse cx="406.6" cy="661.3" rx="1.7" ry="0.7" transform="rotate(25 406.6 661.3)" fill="#b397ac" stroke="#2c2230" stroke-width="0.55"/><ellipse cx="462.4" cy="635.9" rx="1.6" ry="1.5" transform="rotate(-20 462.4 635.9)" fill="#b397ac" stroke="#2c2230" stroke-width="0.55"/><ellipse cx="424.7" cy="640.3" rx="1.4" ry="0.8" transform="rotate(46 424.7 640.3)" fill="#b397ac" stroke="#2c2230" stroke-width="0.55"/><rect x="443.5" y="647.1" width="1.2" height="1.2" fill="#3a2e3a"/><ellipse cx="439.6" cy="651.8" rx="1.5" ry="1.2" transform="rotate(-35 439.6 651.8)" fill="#b397ac" stroke="#2c2230" stroke-width="0.55"/><ellipse cx="407.9" cy="652.7" rx="1.3" ry="0.9" transform="rotate(-20 407.9 652.7)" fill="#b397ac" stroke="#2c2230" stroke-width="0.55"/><ellipse cx="472.3" cy="644.5" rx="1.2" ry="0.9" transform="rotate(18 472.3 644.5)" fill="#b397ac" stroke="#2c2230" stroke-width="0.55"/><ellipse cx="421.9" cy="669.9" rx="2.1" ry="1.3" transform="rotate(-54 421.9 669.9)" fill="#b397ac" stroke="#2c2230" stroke-width="0.55"/><rect x="434.5" y="639.1" width="1.0" height="1.0" fill="#3a2e3a"/><ellipse cx="457.6" cy="634.1" rx="2.1" ry="1.3" transform="rotate(-56 457.6 634.1)" fill="#b397ac" stroke="#2c2230" stroke-width="0.55"/><ellipse cx="459.0" cy="650.8" rx="1.4" ry="1.1" transform="rotate(17 459.0 650.8)" fill="#b397ac" stroke="#2c2230" stroke-width="0.55"/><rect x="474.5" y="631.7" width="0.8" height="0.8" fill="#3a2e3a"/><rect x="429.0" y="647.6" width="1.0" height="1.0" fill="#3a2e3a"/><ellipse cx="401.8" cy="655.7" rx="1.4" ry="1.0" transform="rotate(-22 401.8 655.7)" fill="#b397ac" stroke="#2c2230" stroke-width="0.55"/><rect x="460.7" y="639.3" width="1.0" height="1.0" fill="#3a2e3a"/><rect x="456.4" y="640.8" width="0.8" height="0.8" fill="#3a2e3a"/><rect x="455.3" y="641.4" width="1.2" height="1.2" fill="#3a2e3a"/><ellipse cx="466.2" cy="646.1" rx="1.3" ry="0.9" transform="rotate(-18 466.2 646.1)" fill="#b397ac" stroke="#2c2230" stroke-width="0.55"/><rect x="431.4" y="666.2" width="0.8" height="0.8" fill="#3a2e3a"/><rect x="438.7" y="653.6" width="1.2" height="1.2" fill="#3a2e3a"/><rect x="442.9" y="663.0" width="0.8" height="0.8" fill="#3a2e3a"/><ellipse cx="472.2" cy="633.7" rx="1.7" ry="0.9" transform="rotate(-54 472.2 633.7)" fill="#b397ac" stroke="#2c2230" stroke-width="0.55"/><ellipse cx="445.6" cy="646.9" rx="1.7" ry="1.5" transform="rotate(17 445.6 646.9)" fill="#b397ac" stroke="#2c2230" stroke-width="0.55"/><ellipse cx="467.2" cy="631.0" rx="1.7" ry="0.8" transform="rotate(-56 467.2 631.0)" fill="#b397ac" stroke="#2c2230" stroke-width="0.55"/><ellipse cx="470.1" cy="640.8" rx="2.1" ry="1.0" transform="rotate(25 470.1 640.8)" fill="#b397ac" stroke="#2c2230" stroke-width="0.55"/><rect x="404.5" y="645.3" width="0.8" height="0.8" fill="#3a2e3a"/><rect x="403.8" y="677.6" width="1.0" height="1.0" fill="#3a2e3a"/><ellipse cx="402.0" cy="652.0" rx="1.1" ry="1.6" fill="#fff" stroke="#2c2230" stroke-width="0.5"/><ellipse cx="404.0" cy="656.0" rx="1.1" ry="1.6" fill="#fff" stroke="#2c2230" stroke-width="0.5"/><ellipse cx="406.0" cy="660.0" rx="1.1" ry="1.6" fill="#fff" stroke="#2c2230" stroke-width="0.5"/><ellipse cx="362.0" cy="680.0" rx="1.1" ry="1.6" fill="#fff" stroke="#2c2230" stroke-width="0.5"/><ellipse cx="365.0" cy="683.0" rx="1.1" ry="1.6" fill="#fff" stroke="#2c2230" stroke-width="0.5"/><ellipse cx="369.0" cy="679.0" rx="1.1" ry="1.6" fill="#fff" stroke="#2c2230" stroke-width="0.5"/><ellipse cx="372.0" cy="684.0" rx="1.1" ry="1.6" fill="#fff" stroke="#2c2230" stroke-width="0.5"/><ellipse cx="374.0" cy="688.0" rx="1.1" ry="1.6" fill="#fff" stroke="#2c2230" stroke-width="0.5"/><ellipse cx="360.0" cy="687.0" rx="1.1" ry="1.6" fill="#fff" stroke="#2c2230" stroke-width="0.5"/><ellipse cx="368.0" cy="688.0" rx="1.1" ry="1.6" fill="#fff" stroke="#2c2230" stroke-width="0.5"/><rect x="574.5" y="488.3" width="1.2" height="1.2" fill="#333"/><path d="M211.500 268.5l0.500 3M213.500 266.500l0.300 2.500" stroke="#2c2230" stroke-width="0.8"/><path d="M188 311.500q3 1.500 5 1M190 316q6 1.500 10 0.500q3-.6 5.500-2.500" fill="none" stroke="#2c2230" stroke-width="1.200" stroke-dasharray="5 2"/></svg></div>
<svg class="a" style="left:605px;top:422px" width="2" height="20"><rect x="0" y="0" width="1" height="1" fill="#a0a0a0"/><rect x="0" y="3" width="1" height="1" fill="#a0a0a0"/><rect x="0" y="6" width="1" height="1" fill="#a0a0a0"/><rect x="0" y="9" width="1" height="1" fill="#a0a0a0"/><rect x="0" y="12" width="1" height="1" fill="#a0a0a0"/><rect x="0" y="15" width="1" height="1" fill="#a0a0a0"/></svg>
<svg class="a" style="left:182px;top:422px" width="2" height="20"><rect x="0" y="0" width="1" height="1" fill="#a0a0a0"/><rect x="0" y="3" width="1" height="1" fill="#a0a0a0"/><rect x="0" y="6" width="1" height="1" fill="#a0a0a0"/><rect x="0" y="9" width="1" height="1" fill="#a0a0a0"/><rect x="0" y="12" width="1" height="1" fill="#a0a0a0"/><rect x="0" y="15" width="1" height="1" fill="#a0a0a0"/></svg>
<span class="t" style="left:612.90px;top:170.00px;letter-spacing:-0.147px;">Processing Toolbox</span>
<svg class="a" style="left:888px;top:172px" width="26" height="12"><g fill="none" stroke="#6e6a66" stroke-width="1"><rect x="0.5" y="0.5" width="10" height="10" rx="2"/><rect x="14.500" y="0.5" width="10" height="10" rx="2"/><rect x="4.500" y="2.500" width="4" height="4" rx="1"/><rect x="2.500" y="4.500" width="4" height="4" rx="1" fill="#f0f0f0"/></g><path d="M17.300 3.300l4.400 4.400M21.700 3.300l-4.400 4.400" stroke="#4a4743" stroke-width="1.900"/></svg>
<div class="i16" style="left:617px;top:194px;"><svg width="16" height="16" viewBox="0 0 16 16"><circle cx="5.3" cy="5" r="3.2" fill="#d4242a"/><rect x="4.5" y="-0.1" width="1.6" height="2.9" fill="#d4242a" transform="rotate(0 5.3 5)"/><rect x="4.5" y="-0.1" width="1.6" height="2.9" fill="#d4242a" transform="rotate(45 5.3 5)"/><rect x="4.5" y="-0.1" width="1.6" height="2.9" fill="#d4242a" transform="rotate(90 5.3 5)"/><rect x="4.5" y="-0.1" width="1.6" height="2.9" fill="#d4242a" transform="rotate(135 5.3 5)"/><rect x="4.5" y="-0.1" width="1.6" height="2.9" fill="#d4242a" transform="rotate(180 5.3 5)"/><rect x="4.5" y="-0.1" width="1.6" height="2.9" fill="#d4242a" transform="rotate(225 5.3 5)"/><rect x="4.5" y="-0.1" width="1.6" height="2.9" fill="#d4242a" transform="rotate(270 5.3 5)"/><rect x="4.5" y="-0.1" width="1.6" height="2.9" fill="#d4242a" transform="rotate(315 5.3 5)"/><circle cx="5.3" cy="5" r="1.1" fill="#f0f0f0"/><circle cx="11" cy="9.3" r="2.5" fill="#6a6a6a"/><rect x="10.35" y="5.3" width="1.3" height="2.5" fill="#6a6a6a" transform="rotate(0 11 9.3)"/><rect x="10.35" y="5.3" width="1.3" height="2.5" fill="#6a6a6a" transform="rotate(45 11 9.3)"/><rect x="10.35" y="5.3" width="1.3" height="2.5" fill="#6a6a6a" transform="rotate(90 11 9.3)"/><rect x="10.35" y="5.3" width="1.3" height="2.5" fill="#6a6a6a" transform="rotate(135 11 9.3)"/><rect x="10.35" y="5.3" width="1.3" height="2.5" fill="#6a6a6a" transform="rotate(180 11 9.3)"/><rect x="10.35" y="5.3" width="1.3" height="2.5" fill="#6a6a6a" transform="rotate(225 11 9.3)"/><rect x="10.35" y="5.3" width="1.3" height="2.5" fill="#6a6a6a" transform="rotate(270 11 9.3)"/><rect x="10.35" y="5.3" width="1.3" height="2.5" fill="#6a6a6a" transform="rotate(315 11 9.3)"/><circle cx="11" cy="9.3" r="0.9" fill="#f0f0f0"/><circle cx="6" cy="12" r="2" fill="#7aa3dc"/><rect x="5.45" y="8.8" width="1.1" height="2.2" fill="#7aa3dc" transform="rotate(0 6 12)"/><rect x="5.45" y="8.8" width="1.1" height="2.2" fill="#7aa3dc" transform="rotate(45 6 12)"/><rect x="5.45" y="8.8" width="1.1" height="2.2" fill="#7aa3dc" transform="rotate(90 6 12)"/><rect x="5.45" y="8.8" width="1.1" height="2.2" fill="#7aa3dc" transform="rotate(135 6 12)"/><rect x="5.45" y="8.8" width="1.1" height="2.2" fill="#7aa3dc" transform="rotate(180 6 12)"/><rect x="5.45" y="8.8" width="1.1" height="2.2" fill="#7aa3dc" transform="rotate(225 6 12)"/><rect x="5.45" y="8.8" width="1.1" height="2.2" fill="#7aa3dc" transform="rotate(270 6 12)"/><rect x="5.45" y="8.8" width="1.1" height="2.2" fill="#7aa3dc" transform="rotate(315 6 12)"/><circle cx="6" cy="12" r="0.7" fill="#f0f0f0"/></svg></div>
<svg class="a" style="left:630px;top:207px" width="5" height="4"><path d="M0 0h5 l-2.5 4z" fill="#555"/></svg>
<div class="i16" style="left:642px;top:194px;"><svg width="16" height="16" viewBox="0 0 16 16"><g transform="translate(-.5 -.300) scale(.730)"><path d="M11.800 1.500c-4.600 0-4.300 2-4.300 2v2.600h4.500v.8H5.300S2.200 6.500 2.200 11.600s2.700 4.800 2.700 4.800h1.900v-2.500s-.1-2.700 2.700-2.700h4.500s2.600 0 2.600-2.500V4.300s.4-2.800-4.800-2.800z" fill="#3f77ae"/><circle cx="9.300" cy="3.900" r=".9" fill="#fff"/><path d="M12.200 21.600c4.600 0 4.300-2 4.300-2v-2.600H12v-.8h6.700s3.100.4 3.100-4.700-2.700-4.800-2.700-4.800h-1.900v2.500s.1 2.700-2.700 2.700H10s-2.600 0-2.600 2.500v4.400s-.4 2.800 4.800 2.800z" fill="#f7cf44"/><circle cx="14.700" cy="19.200" r=".9" fill="#fff"/></g></svg></div>
<svg class="a" style="left:655px;top:207px" width="5" height="4"><path d="M0 0h5 l-2.5 4z" fill="#555"/></svg>
<div class="i16" style="left:667px;top:194px;"><svg width="16" height="16" viewBox="0 0 16 16"><circle cx="8" cy="8" r="6.800" fill="#f4f4f4" stroke="#7a7a7a" stroke-width="1.100"/><path d="M8 3.500V8l3 2.500" fill="none" stroke="#7a7a7a" stroke-width="1.200" stroke-linecap="round"/></svg></div>
<div class="i16" style="left:692px;top:194px;"><svg width="16" height="16" viewBox="0 0 16 16"><path d="M2.5 1.5h7.5l3.5 3.5v10h-11z" fill="#fafafa" stroke="#a0a0a0" stroke-width="1"/><path d="M10 1.5v3.5h3.5" fill="none" stroke="#a0a0a0" stroke-width=".8"/><path d="M4.5 7.5h7M4.5 9.8h7M4.5 12.1h7" stroke="#b8b8b8" stroke-width=".9"/></svg></div>
<div class="a" style="left:716px;top:196px;width:1px;height:12px;background:#d4d4d4"></div>
<div class="i16" style="left:724px;top:194px;"><svg width="16" height="16" viewBox="0 0 16 16"><path d="M1.500 2.500h10v7.500l-2.500 2.500H1.500z" fill="#f6de4a" stroke="#d4b82e" stroke-width="1" stroke-linejoin="round"/><g transform="translate(8 15.300) scale(.52)"><path d="M1.100-5.600L10.500-21.800l4.600 2.700L5.700-2.900z" fill="#e9cf3c" stroke="#6d6434" stroke-width="1.400"/><path d="M1.100-5.600L0 0 5.700-2.900z" fill="#d8d8d8" stroke="#6d6434" stroke-width="1.200"/><path d="M.55-2.500L0 0l2.500-1.300z" fill="#333"/></g></svg></div>
<div class="a" style="left:748px;top:196px;width:1px;height:12px;background:#d4d4d4"></div>
<div class="i16" style="left:756px;top:194px;"><svg width="16" height="16" viewBox="0 0 16 16"><path d="M6.500 6.500L14 14" stroke="#8d7a2a" stroke-width="3.300" stroke-linecap="round"/><path d="M6.500 6.500L14 14" stroke="#e6cf72" stroke-width="2" stroke-linecap="round"/><path d="M8.500 8.500l1.500 1.500" stroke="#3a3a3a" stroke-width="2.600"/><path d="M2 5.500a3.500 3.500 0 0 0 5.500 1.200l-.2-2.200-2.300-.3-1-2.200A3.500 3.500 0 0 0 2 5.500z" fill="#ddd" stroke="#777" stroke-width=".8"/></svg></div>
<div class="a" style="left:609px;top:240px;width:306px;height:453px;background:#fff;border:1px solid #a0a0a0;border-right:none"></div>
<div class="a" style="left:609px;top:218px;width:306px;height:22px;background:#fff;border:1px solid #a8a8a8;border-radius:4px 4px 0 0;border-bottom-color:#a0a0a0"></div>
<svg class="a" style="left:617px;top:222px" width="16" height="16"><circle cx="6" cy="6" r="4.500" fill="none" stroke="#8a8a8a" stroke-width="1.200"/><path d="M9.300 9.300l4.200 4.200" stroke="#8a8a8a" stroke-width="1.500"/></svg>
<span class="t" style="left:637.70px;top:222.00px;letter-spacing:0.167px;">fix</span>
<svg class="a" style="left:893px;top:224px" width="14" height="10"><path d="M4 0h9.500v10H4L0 5z" fill="#a6a6a6"/><path d="M6 2.500l5 5M11 2.500l-5 5" stroke="#fff" stroke-width="1.100"/></svg>
<svg class="a" style="left:617px;top:248px" width="8" height="4"><path d="M0 0h7l-3.500 4z" fill="#555"/></svg>
<div class="i16" style="left:633px;top:242px;"><svg width="16" height="16" viewBox="0 0 16 16"><g transform="translate(.2 .5) scale(.93)"><defs><linearGradient id="qgffffff" x1="0" y1="0" x2="1" y2="1"><stop offset="0" stop-color="#f57f1c"/><stop offset=".28" stop-color="#f0b02a"/><stop offset=".5" stop-color="#b9c83c"/><stop offset="1" stop-color="#86b440"/></linearGradient></defs><circle cx="7.800" cy="7.600" r="6.100" fill="none" stroke="#97b320" stroke-width="3.200"/><path d="M2.400 4.600A6.100 6.100 0 0 1 12.600 3.800" fill="none" stroke="#a6bf27" stroke-width="3.200"/><path d="M9.500 9.300L16 15.200" stroke="#ffffff" stroke-width="5.400"/><path d="M7.800 7.700L14.700 14" stroke="url(#qgffffff)" stroke-width="3.400" stroke-linecap="round"/></g></svg></div>
<span class="t" style="left:654.90px;top:243.00px;letter-spacing:-0.185px;">Vector general</span>
<div class="i16" style="left:653px;top:260px;"><svg width="16" height="16" viewBox="0 0 16 16"><path d="M12.30 8.00L14.50 8.00M11.04 11.04L12.60 12.60M8.00 12.30L8.00 14.50M4.96 11.04L3.40 12.60M3.70 8.00L1.50 8.00M4.96 4.96L3.40 3.40M8.00 3.70L8.00 1.50M11.04 4.96L12.60 3.40" stroke="#8aaede" stroke-width="1.9" stroke-linecap="round"/><circle cx="8" cy="8" r="3.500" fill="none" stroke="#789fd6" stroke-width="2.300"/></svg></div>
<span class="t" style="left:674.50px;top:261.00px;letter-spacing:-0.308px;">Repair Shapefile</span>
<svg class="a" style="left:617px;top:284px" width="8" height="4"><path d="M0 0h7l-3.500 4z" fill="#555"/></svg>
<div class="i16" style="left:633px;top:278px;"><svg width="16" height="16" viewBox="0 0 16 16"><g transform="translate(.2 .5) scale(.93)"><defs><linearGradient id="qgffffff" x1="0" y1="0" x2="1" y2="1"><stop offset="0" stop-color="#f57f1c"/><stop offset=".28" stop-color="#f0b02a"/><stop offset=".5" stop-color="#b9c83c"/><stop offset="1" stop-color="#86b440"/></linearGradient></defs><circle cx="7.800" cy="7.600" r="6.100" fill="none" stroke="#97b320" stroke-width="3.200"/><path d="M2.400 4.600A6.100 6.100 0 0 1 12.600 3.800" fill="none" stroke="#a6bf27" stroke-width="3.200"/><path d="M9.500 9.300L16 15.200" stroke="#ffffff" stroke-width="5.400"/><path d="M7.800 7.700L14.700 14" stroke="url(#qgffffff)" stroke-width="3.400" stroke-linecap="round"/></g></svg></div>
<span class="t" style="left:654.90px;top:279.00px;letter-spacing:-0.045px;">Vector geometry</span>
<div class="i16" style="left:653px;top:296px;"><svg width="16" height="16" viewBox="0 0 16 16"><path d="M3.300 13.800V6.300c0-2.300 1.300-3.600 3.600-3.600h6.300" fill="none" stroke="#6f8498" stroke-width="5.400" stroke-linecap="round" stroke-linejoin="round"/><path d="M3.300 13.800V6.300c0-2.300 1.300-3.600 3.600-3.600h6.300" fill="none" stroke="#7b897a" stroke-width="2.600" stroke-linecap="round"/></svg></div>
<span class="t" style="left:674.50px;top:297.00px;letter-spacing:0.065px;">Buffer</span>
<div class="a" style="left:610px;top:313px;width:305px;height:18px;background:#0078d7"></div>
<div class="a" style="left:672px;top:313px;width:243px;height:18px;background:#0078d7"></div>
<div class="i16" style="left:653px;top:314px;"><svg width="16" height="16" viewBox="0 0 16 16"><path d="M12.30 8.00L14.50 8.00M11.04 11.04L12.60 12.60M8.00 12.30L8.00 14.50M4.96 11.04L3.40 12.60M3.70 8.00L1.50 8.00M4.96 4.96L3.40 3.40M8.00 3.70L8.00 1.50M11.04 4.96L12.60 3.40" stroke="#8fbaec" stroke-width="1.3" stroke-linecap="round"/><circle cx="8" cy="8" r="3.500" fill="none" stroke="#8fbaec" stroke-width="2.300"/></svg></div>
<span class="t" style="left:674.50px;top:315.00px;letter-spacing:-0.107px;color:#fff">Fix geometries</span>
<div class="i16" style="left:653px;top:332px;"><svg width="16" height="16" viewBox="0 0 16 16"><path d="M12.30 8.00L14.50 8.00M11.04 11.04L12.60 12.60M8.00 12.30L8.00 14.50M4.96 11.04L3.40 12.60M3.70 8.00L1.50 8.00M4.96 4.96L3.40 3.40M8.00 3.70L8.00 1.50M11.04 4.96L12.60 3.40" stroke="#8aaede" stroke-width="1.9" stroke-linecap="round"/><circle cx="8" cy="8" r="3.500" fill="none" stroke="#789fd6" stroke-width="2.300"/></svg></div>
<span class="t" style="left:674.50px;top:333.00px;letter-spacing:-0.156px;">Rectangles, ovals, diamonds</span>
<svg class="a" style="left:617px;top:356px" width="8" height="4"><path d="M0 0h7l-3.500 4z" fill="#555"/></svg>
<div class="i16" style="left:633px;top:350px;"><svg width="16" height="16" viewBox="0 0 16 16"><circle cx="8.600" cy="7.500" r="6" fill="#5aaed6"/><path d="M4 4.500q3-2.500 6-1.500 2.500 1.500 1.500 4-2 2.500-4.500 1.500-3-.5-3-4z" fill="#4c9a4c"/><path d="M9 9.500q3 .5 4.500 2.500l-3 1.500z" fill="#4c9a4c"/><path d="M1.500 3.500L6.500.500M2.500.800l3 3.500" stroke="#222" stroke-width="1"/><path d="M7.500 3.500l1.500 3.500 1.500-2z" fill="#e84a2a"/><rect x="-.5" y="9.800" width="17" height="6.500" fill="#fff" opacity=".75"/><text x="-.2" y="15.800" font-family="Liberation Sans,sans-serif" font-weight="bold" font-size="7" textLength="16" lengthAdjust="spacingAndGlyphs" fill="#111">GDAL</text></svg></div>
<span class="t" style="left:654.90px;top:351.00px;letter-spacing:-0.822px;">GDAL</span>
<svg class="a" style="left:637px;top:373px" width="8" height="4"><path d="M0 0h7l-3.500 4z" fill="#555"/></svg>
<span class="t" style="left:652.70px;top:367.00px;letter-spacing:-0.117px;">Vector conversion</span>
<div class="i16" style="left:673px;top:384px;"><svg width="16" height="16" viewBox="0 0 16 16"><path d="M.8 2.300h3.200l2.200 3.200h4.300l2 2.700" fill="none" stroke="#5d9a5d" stroke-width="1.500" stroke-linejoin="round"/><path d="M8.300 13.800l5-3.600" stroke="#4a8f4a" stroke-width="1.500"/><path d="M12.300 6.500l3.300 4-5.300 1.300z" fill="#6db36d" stroke="#3f853f" stroke-width=".7" stroke-linejoin="round"/><path d="M13.200 7.500h2.800v4h-2.800z" fill="#7fc47f" opacity=".8"/></svg></div>
<span class="t" style="left:695.00px;top:384.00px;letter-spacing:-0.115px;">Rasterize (overwrite with fixed value)</span>
<svg class="a" style="left:617px;top:408px" width="8" height="4"><path d="M0 0h7l-3.500 4z" fill="#555"/></svg>
<div class="i16" style="left:633px;top:402px;"><svg width="16" height="16" viewBox="0 0 16 16"><path d="M11.800 2.600A6.500 6.500 0 1 0 14.100 7.800H5M1.700 4.800L9.600 13M4.300 5.800L7.300 3.600 10.700 7.700" fill="none" stroke="#0d5aa7" stroke-width="1.500" stroke-linejoin="round"/><path d="M10.300 1.300l3.100-.5-.1 3.400z" fill="#0d5aa7" stroke="#0d5aa7" stroke-width=".8" stroke-linejoin="round"/></svg></div>
<span class="t" style="left:654.90px;top:402.00px;letter-spacing:-0.890px;color:#a0a0a0">SAGA</span>
<svg class="a" style="left:637px;top:425px" width="8" height="4"><path d="M0 0h7l-3.500 4z" fill="#555"/></svg>
<span class="t" style="left:652.70px;top:418.00px;letter-spacing:-0.199px;color:#a0a0a0">Vector general</span>
<div class="i16" style="left:673px;top:436px;"><svg width="16" height="16" viewBox="0 0 16 16"><path d="M11.800 2.600A6.500 6.500 0 1 0 14.100 7.800H5M1.700 4.800L9.600 13M4.300 5.800L7.300 3.600 10.700 7.700" fill="none" stroke="#0d5aa7" stroke-width="1.500" stroke-linejoin="round"/><path d="M10.300 1.300l3.100-.5-.1 3.400z" fill="#0d5aa7" stroke="#0d5aa7" stroke-width=".8" stroke-linejoin="round"/></svg></div>
<span class="t" style="left:695.00px;top:435.00px;letter-spacing:-0.099px;color:#a0a0a0">Fixed distance buffer</span>
<svg class="a" style="left:799px;top:530px" width="14" height="21"><path d="M1.500 1.500V17.800L5.400 14.200 8.100 19.800 10.500 18.700 8 13.100H13Z" fill="#fff" stroke="#14141f" stroke-width="1.100" stroke-linejoin="round"/></svg>
<div class="box" style="left:5px;top:696px;width:200px;height:22px;border-radius:3px;border-color:#b0b0b0"></div>
<svg class="a" style="left:13px;top:700px" width="14" height="14"><circle cx="5.500" cy="5.500" r="4.300" fill="none" stroke="#8c8c8c" stroke-width="1.200"/><path d="M8.600 8.600l4 4" stroke="#8c8c8c" stroke-width="1.500"/></svg>
<span class="t" style="left:33.10px;top:700.00px;letter-spacing:-0.375px;color:#7a7a7a">Type to locate (Ctrl+K)</span>
<div class="a" style="left:247px;top:698px;width:4px;height:18px;overflow:hidden"><span class="t" style="left:-3px;top:2px">d</span></div>
<div class="box" style="left:255px;top:697px;width:90px;height:21px"></div>
<span class="t" style="left:261.00px;top:700.00px;letter-spacing:-0.432px;">-79.540,28.221</span>
<div class="i16" style="left:349px;top:699px;"><svg width="16" height="16" viewBox="0 0 16 16"><g transform="rotate(-32 7.500 8.500)"><rect x="3.300" y="1.500" width="8.600" height="13.600" rx="4.300" fill="#f4f4f4" stroke="#1f1f1f" stroke-width="1.500"/><path d="M3.500 6.300h8.200M7.600 1.700v4.600" stroke="#1f1f1f" stroke-width="1.300"/><path d="M5.300 2.600v3M9.800 2.600v3" stroke="#1f1f1f" stroke-width="1.100"/><circle cx="7.600" cy="10.800" r="2.300" fill="#fff" stroke="#1f1f1f" stroke-width="1"/><circle cx="7.600" cy="10.800" r=".8" fill="#1f1f1f"/></g><path d="M12.200 3.200l1-.9M14.200 1.800l.8-.5M.3 10.500l1.300-.3" stroke="#333" stroke-width=".8"/></svg></div>
<span class="t" style="left:377.70px;top:700.00px;letter-spacing:-1.688px;">a</span>
<div class="box" style="left:386px;top:697px;width:80px;height:21px"></div>
<div class="a" style="left:446px;top:698px;width:1px;height:19px;background:#d0d0d0"></div>
<span class="t" style="left:389.70px;top:700.00px;letter-spacing:-0.582px;">1:2198856</span>
<svg class="a" style="left:451.5px;top:705.5px" width="8" height="4"><path d="M0 0h8 l-4 4z" fill="#555"/></svg>
<div class="i16" style="left:476px;top:699px;"><svg width="16" height="16" viewBox="0 0 16 16"><path d="M4.500 7.500V5.200a3.500 3.500 0 0 1 7 0v2.300" fill="none" stroke="#8c8c8c" stroke-width="1.600"/><rect x="2.500" y="7.300" width="11" height="7.700" rx="1" fill="#777" stroke="#666" stroke-width=".6"/><rect x="3.300" y="8" width="9.400" height="2" fill="#8f8f8f"/></svg></div>
<span class="t" style="left:498.70px;top:700.00px;letter-spacing:0.000px;">r</span>
<div class="box" style="left:507px;top:697px;width:87px;height:21px"></div>
<span class="t" style="left:511.70px;top:700.00px;letter-spacing:-0.676px;">100%</span>
<div class="a" style="left:580px;top:698px;width:1px;height:19px;background:#e0e0e0"></div>
<svg class="a" style="left:583px;top:699px" width="9" height="17"><path d="M0.500 5.500l3.500-4.500 3.500 4.500zM0.500 11l3.500 4.500 3.500-4.500z" fill="#555"/></svg>
<span class="t" style="left:601.70px;top:700.00px;letter-spacing:-2.188px;">a</span>
<div class="box" style="left:616px;top:697px;width:84px;height:21px"></div>
<span class="t" style="left:620.70px;top:700.00px;letter-spacing:0.034px;">0.0 °</span>
<div class="a" style="left:686px;top:698px;width:1px;height:19px;background:#e0e0e0"></div>
<svg class="a" style="left:689px;top:699px" width="9" height="17"><path d="M0.500 5.500l3.500-4.500 3.500 4.500zM0.500 11l3.500 4.500 3.500-4.500z" fill="#555"/></svg>
<div class="a" style="left:706px;top:700px;width:14px;height:14px;background:#fff;border:1px solid #adadad"></div>
<svg class="a" style="left:706.5px;top:700.5px" width="13" height="13"><path d="M2.700 6.200l3 4.300 4.100-7.600" fill="none" stroke="#000" stroke-width="1.900"/></svg>
<span class="t" style="left:724.30px;top:700.00px;letter-spacing:-0.827px;">Render</span>
<div class="i16" style="left:776px;top:699px;"><svg width="16" height="16" viewBox="0 0 16 16"><path d="M8 1.200C12 1.600 15.600 4.500 15.600 8S12 14.400 8 14.800C4 14.400.400 11.500.400 8S4 1.600 8 1.200z" fill="#dedede" stroke="#6a6a6a" stroke-width=".9"/><path d="M8 1.200v13.600M.400 8h15.200M2 4.600h12M2 11.400h12M8 1.200C5.500 3 4.500 5.500 4.500 8s1 5 3.500 6.800M8 1.200c2.500 1.800 3.500 4.300 3.500 6.800s-1 5-3.500 6.800" fill="none" stroke="#6a6a6a" stroke-width=".8"/></svg></div>
<span class="t" style="left:795.70px;top:700.00px;letter-spacing:-1.097px;">EPSG:4326</span>
<div class="i16" style="left:868px;top:699px;"><svg width="16" height="16" viewBox="0 0 16 16"><path d="M8.200.800c4.300 0 7.500 2.600 7.500 5.800 0 1.700-.9 3.200-2.400 4.300l1.300 3.600-4.200-2.400c-.7.100-1.400.200-2.200.200-4.300 0-7.500-2.500-7.500-5.700S3.900.800 8.200.800z" fill="#4d4d4d"/><circle cx="4.700" cy="6.600" r="1.100" fill="#fff"/><circle cx="8.200" cy="6.600" r="1.100" fill="#fff"/><circle cx="11.700" cy="6.600" r="1.100" fill="#fff"/></svg></div>
<svg class="a" style="left:902px;top:708px" width="12" height="12"><rect x="9" y="9" width="1" height="1" fill="#b8b8b8"/><rect x="6" y="9" width="1" height="1" fill="#b8b8b8"/><rect x="3" y="9" width="1" height="1" fill="#b8b8b8"/><rect x="0" y="9" width="1" height="1" fill="#b8b8b8"/><rect x="9" y="6" width="1" height="1" fill="#b8b8b8"/><rect x="6" y="6" width="1" height="1" fill="#b8b8b8"/><rect x="3" y="6" width="1" height="1" fill="#b8b8b8"/><rect x="9" y="3" width="1" height="1" fill="#b8b8b8"/><rect x="6" y="3" width="1" height="1" fill="#b8b8b8"/><rect x="9" y="0" width="1" height="1" fill="#b8b8b8"/></svg>
</body></html>
